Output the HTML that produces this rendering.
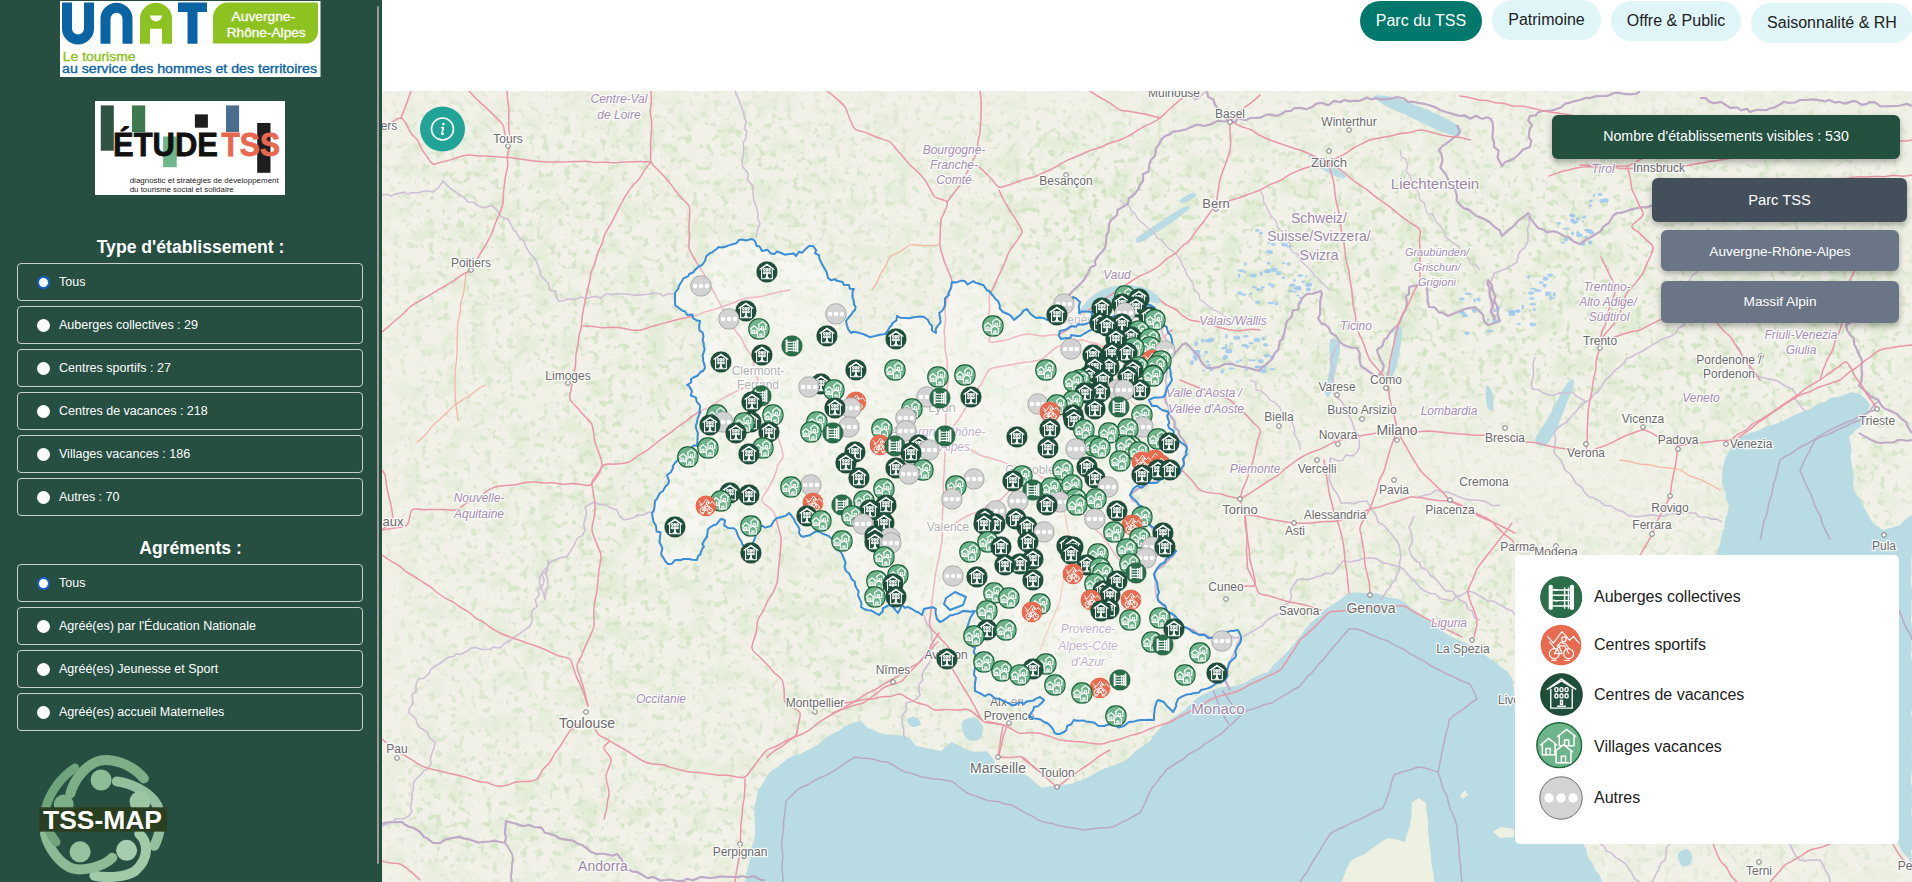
<!DOCTYPE html>
<html><head><meta charset="utf-8">
<style>
*{margin:0;padding:0;box-sizing:border-box}
html,body{width:1912px;height:882px;overflow:hidden;background:#fff;font-family:"Liberation Sans",sans-serif}
#side{position:absolute;left:0;top:0;width:382px;height:882px;background:#264F42}
#sbar{position:absolute;left:377px;top:6px;width:2px;height:858px;background:#9a9a9a;border-radius:1px}
.h{position:absolute;left:0;width:381px;text-align:center;color:#fff;font-weight:bold;font-size:17.6px}
.rb{position:absolute;left:17px;width:346px;height:38px;border:1px solid #c9cfcc;border-radius:4px;color:#fff;font-size:12.5px}
.rb .c{position:absolute;left:18.5px;top:11.5px;width:13px;height:13px;border-radius:50%;background:#fff}
.rb .c.on{border:2.5px solid #1A5FD6;background:#fff}
.rb span{position:absolute;left:41px;top:10.5px}
#hdr{position:absolute;left:382px;top:0;width:1530px;height:91px;background:#fff}
.tb{position:absolute;height:40px;border-radius:20px;background:#dff5f8;color:#222;font-size:16px;text-align:center;line-height:40px}
#map{position:absolute;left:382px;top:91px;width:1530px;height:791px;overflow:hidden;background:#f2efe9}
.pan{position:absolute;border-radius:6px;color:#fff;text-align:center;box-shadow:0 3px 6px rgba(0,0,0,.3)}
#legend{position:absolute;left:1515px;top:555px;width:384px;height:289px;background:#fff;border-radius:5px}
.li{position:absolute;left:79px;font-size:16px;color:#222}
text{font-family:"Liberation Sans",sans-serif}
</style></head><body>
<div id="map"><svg id="msvg" width="1530" height="791" viewBox="382 91 1530 791" style="position:absolute;left:0;top:0">
<defs>
 <symbol id="iA" viewBox="0 0 44 44">
  <circle cx="22" cy="22" r="21.3" fill="#2B6E4A" stroke="#245e40" stroke-width="1"/>
  <rect x="9" y="9" width="4.2" height="26" rx="1.6" fill="#fff"/>
  <rect x="31" y="9" width="4.2" height="26" rx="1.6" fill="#fff"/>
  <g stroke="#fff" stroke-width="1.5" fill="none">
   <path d="M13 14.5h18M13 20h18M13 25.5h18M13 31h18"/>
   <path d="M25.5 12v22M29.5 12v22"/>
   <path d="M14 13.5c1.5 1.5 3 1.5 4.5 1"/>
   <path d="M14 24.5c1.5 1.5 3 1.5 4.5 1"/>
  </g>
 </symbol>
 <symbol id="iS" viewBox="0 0 44 44">
  <circle cx="22" cy="22" r="21.3" fill="#E86A4F"/>
  <g stroke="#fff" stroke-width="1.3" fill="none" stroke-linejoin="round" stroke-linecap="round">
   <path d="M8 13l6 7 9-12 8 9 4-4 6 7"/>
   <path d="M10 19l6 7"/>
   <circle cx="15" cy="31" r="5.2"/>
   <circle cx="30" cy="31" r="5.2"/>
   <path d="M15 31l5-8 6 0 4 8M20 23l3 8h-8"/>
   <circle cx="25" cy="16" r="2.4"/>
   <path d="M18 23l4-4 5 2 3 4"/>
   <path d="M12 38h5M26 38h5"/>
  </g>
 </symbol>
 <symbol id="iC" viewBox="0 0 44 44">
  <circle cx="22" cy="22" r="21.3" fill="#1F4F3B" stroke="#173f2f" stroke-width="1"/>
  <g stroke="#fff" stroke-width="1.4" fill="none" stroke-linejoin="miter">
   <path d="M7 17L22 6l15 11"/>
   <path d="M9.5 15.5L22 8l12.5 7.5"/>
   <path d="M11 16v20h22V16"/>
   <rect x="15.3" y="15" width="3" height="4" rx="1"/>
   <rect x="20.5" y="15" width="3" height="4" rx="1"/>
   <rect x="25.7" y="15" width="3" height="4" rx="1"/>
   <rect x="15.3" y="21.5" width="3" height="4" rx="1"/>
   <rect x="20.5" y="21.5" width="3" height="4" rx="1"/>
   <rect x="25.7" y="21.5" width="3" height="4" rx="1"/>
   <path d="M21 28v4h2v-4z M17.5 34h9"/>
  </g>
 </symbol>
 <symbol id="iV" viewBox="0 0 44 44">
  <circle cx="22" cy="22" r="21.2" fill="#6DB48A" stroke="#1d6a3d" stroke-width="1.4"/>
  <g stroke="#fff" stroke-width="1.4" fill="#6DB48A" stroke-linejoin="miter">
   <path d="M20 14L29 7l9 7 M22 13.5v9h14v-9 M27 22v-5h4v5"/>
   <path d="M4 22L12 15.5l8 6.5 M6 21v10h12v-10 M9.5 31v-6h4v6"/>
   <path d="M17 28.5l9-7 9 7 M19 27.5v11h14v-11 M24 38.5v-6h4v6"/>
  </g>
 </symbol>
 <symbol id="iO" viewBox="0 0 44 44">
  <circle cx="22" cy="22" r="21.2" fill="#D3D3D3" stroke="#707070" stroke-width="1"/>
  <circle cx="10" cy="22" r="4.7" fill="#fff"/>
  <circle cx="22" cy="22" r="4.7" fill="#fff"/>
  <circle cx="34" cy="22" r="4.7" fill="#fff"/>
 </symbol>

 <symbol id="mA" viewBox="0 0 44 44">
  <circle cx="22" cy="22" r="21.3" fill="#2B6E4A" stroke="#245e40" stroke-width="1"/>
  <rect x="9" y="9" width="4.2" height="26" rx="1.6" fill="#fff"/>
  <rect x="31" y="9" width="4.2" height="26" rx="1.6" fill="#fff"/>
  <g stroke="#fff" stroke-width="2.2" fill="none">
   <path d="M13 14.5h18M13 20h18M13 25.5h18M13 31h18"/>
   <path d="M25.5 12v22M29.5 12v22"/>
   <path d="M14 13.5c1.5 1.5 3 1.5 4.5 1"/>
   <path d="M14 24.5c1.5 1.5 3 1.5 4.5 1"/>
  </g>
 </symbol>
 <symbol id="mS" viewBox="0 0 44 44">
  <circle cx="22" cy="22" r="21.3" fill="#E86A4F"/>
  <g stroke="#fff" stroke-width="2.0" fill="none" stroke-linejoin="round" stroke-linecap="round">
   <path d="M8 13l6 7 9-12 8 9 4-4 6 7"/>
   <path d="M10 19l6 7"/>
   <circle cx="15" cy="31" r="5.2"/>
   <circle cx="30" cy="31" r="5.2"/>
   <path d="M15 31l5-8 6 0 4 8M20 23l3 8h-8"/>
   <circle cx="25" cy="16" r="2.4"/>
   <path d="M18 23l4-4 5 2 3 4"/>
   <path d="M12 38h5M26 38h5"/>
  </g>
 </symbol>
 <symbol id="mC" viewBox="0 0 44 44">
  <circle cx="22" cy="22" r="21.3" fill="#1F4F3B" stroke="#173f2f" stroke-width="1"/>
  <g stroke="#fff" stroke-width="2.3" fill="none" stroke-linejoin="miter">
   <path d="M7 17L22 6l15 11"/>
   <path d="M9.5 15.5L22 8l12.5 7.5"/>
   <path d="M11 16v20h22V16"/>
   <rect x="15.3" y="15" width="3" height="4" rx="1"/>
   <rect x="20.5" y="15" width="3" height="4" rx="1"/>
   <rect x="25.7" y="15" width="3" height="4" rx="1"/>
   <rect x="15.3" y="21.5" width="3" height="4" rx="1"/>
   <rect x="20.5" y="21.5" width="3" height="4" rx="1"/>
   <rect x="25.7" y="21.5" width="3" height="4" rx="1"/>
   <path d="M21 28v4h2v-4z M17.5 34h9"/>
  </g>
 </symbol>
 <symbol id="mV" viewBox="0 0 44 44">
  <circle cx="22" cy="22" r="21.2" fill="#6DB48A" stroke="#185C34" stroke-width="2.2"/>
  <g stroke="#fff" stroke-width="2.3" fill="#6DB48A" stroke-linejoin="miter">
   <path d="M20 14L29 7l9 7 M22 13.5v9h14v-9 M27 22v-5h4v5"/>
   <path d="M4 22L12 15.5l8 6.5 M6 21v10h12v-10 M9.5 31v-6h4v6"/>
   <path d="M17 28.5l9-7 9 7 M19 27.5v11h14v-11 M24 38.5v-6h4v6"/>
  </g>
 </symbol>
 <symbol id="mO" viewBox="0 0 44 44">
  <circle cx="22" cy="22" r="21.2" fill="#D3D3D3" stroke="#707070" stroke-width="1"/>
  <circle cx="10" cy="22" r="4.7" fill="#fff"/>
  <circle cx="22" cy="22" r="4.7" fill="#fff"/>
  <circle cx="34" cy="22" r="4.7" fill="#fff"/>
 </symbol>

</defs>

<defs>
 <filter id="tex" filterUnits="userSpaceOnUse" x="382" y="91" width="1530" height="791" color-interpolation-filters="sRGB">
  <feTurbulence type="fractalNoise" baseFrequency="0.045" numOctaves="4" seed="11" result="t"/>
  <feColorMatrix in="t" type="matrix" values="0 0 0 0 0.87  0 0 0 0 0.92  0 0 0 0 0.82  4 0 0 0 -1.9"/>
 </filter>
 <filter id="tex2" filterUnits="userSpaceOnUse" x="382" y="91" width="1530" height="791" color-interpolation-filters="sRGB">
  <feTurbulence type="fractalNoise" baseFrequency="0.14" numOctaves="2" seed="23" result="t"/>
  <feColorMatrix in="t" type="matrix" values="0 0 0 0 0.80  0 0 0 0 0.88  0 0 0 0 0.74  8 0 0 0 -4.6"/>
 </filter>
 <filter id="bl" filterUnits="userSpaceOnUse" x="0" y="0" width="2000" height="1000"><feGaussianBlur stdDeviation="28"/></filter>
 <mask id="dens" maskUnits="userSpaceOnUse" x="382" y="91" width="1530" height="791">
  <g filter="url(#bl)"><rect x="382" y="91" width="1530" height="791" fill="#fff" fill-opacity="0.55"/><polygon points="382.0,91.0 760.0,91.0 760.0,300.0 382.0,300.0" fill="#fff" fill-opacity="0.25"/><polygon points="540.0,300.0 720.0,280.0 760.0,600.0 640.0,700.0 520.0,640.0" fill="#fff" fill-opacity="0.35"/><polygon points="1000.0,130.0 1130.0,150.0 1120.0,300.0 1000.0,300.0" fill="#fff" fill-opacity="0.5"/><polygon points="1040.0,160.0 1150.0,120.0 1160.0,200.0 1070.0,290.0" fill="#fff" fill-opacity="0.5"/><polygon points="700.0,100.0 850.0,100.0 850.0,260.0 700.0,260.0" fill="#fff" fill-opacity="0.25"/><polygon points="1150.0,180.0 1700.0,170.0 1912.0,250.0 1912.0,420.0 1560.0,420.0 1380.0,380.0 1200.0,360.0" fill="#fff" fill-opacity="0.55"/><polygon points="1250.0,540.0 1560.0,560.0 1600.0,700.0 1520.0,720.0 1330.0,640.0" fill="#fff" fill-opacity="0.4"/><polygon points="382.0,780.0 780.0,800.0 780.0,882.0 382.0,882.0" fill="#fff" fill-opacity="0.45"/><polygon points="760.0,560.0 900.0,620.0 900.0,720.0 800.0,740.0" fill="#fff" fill-opacity="0.35"/><polygon points="1820.0,250.0 1912.0,250.0 1912.0,540.0 1840.0,540.0" fill="#fff" fill-opacity="0.45"/><polygon points="1280,420 1460,420 1720,420 1720,540 1500,540 1300,520" fill="#000" fill-opacity="0.6"/><polygon points="920,400 990,400 990,560 920,560" fill="#000" fill-opacity="0.3"/></g>
 </mask>
</defs>
<rect x="382" y="91" width="1530" height="791" fill="#F2F1E8"/>
<g mask="url(#dens)"><rect x="382" y="91" width="1530" height="791" filter="url(#tex)"/><rect x="382" y="91" width="1530" height="791" filter="url(#tex2)"/></g>

<path d="M745.0 882.0 L745.9 875.1 L747.7 868.2 L749.8 860.0 L749.8 854.8 L751.9 846.4 L754.0 840.0 L755.2 831.9 L754.8 823.9 L754.3 815.2 L754.0 808.0 L756.3 799.9 L758.0 790.0 L762.1 784.6 L766.4 777.0 L770.0 772.0 L778.6 766.2 L786.0 760.0 L792.2 755.9 L800.2 753.9 L806.0 751.0 L813.5 747.2 L820.5 742.7 L827.0 737.0 L832.7 734.1 L838.9 730.7 L845.0 726.0 L853.9 722.5 L861.0 721.0 L868.0 728.0 L874.1 730.3 L882.0 734.0 L892.1 734.8 L900.3 735.5 L909.0 737.0 L916.0 746.0 L924.4 747.4 L932.3 749.5 L941.0 751.0 L951.0 742.0 L960.0 746.0 L969.0 751.0 L978.2 752.0 L987.0 751.0 L994.0 760.0 L999.0 772.0 L1007.4 773.0 L1015.0 772.0 L1028.0 776.0 L1035.9 783.2 L1042.0 788.0 L1051.9 785.7 L1061.0 785.0 L1070.9 784.1 L1079.0 781.0 L1089.0 776.7 L1097.0 772.0 L1106.5 767.8 L1115.0 765.0 L1122.8 761.7 L1129.0 758.0 L1136.0 750.5 L1144.0 745.0 L1150.6 740.4 L1154.5 734.2 L1161.0 726.9 L1167.0 722.0 L1174.5 717.1 L1183.0 711.0 L1190.2 704.6 L1195.9 699.2 L1202.0 695.0 L1212.0 690.6 L1221.0 687.0 L1229.9 686.8 L1237.0 685.5 L1245.0 683.0 L1252.2 678.3 L1260.6 674.5 L1268.0 672.0 L1272.5 666.3 L1278.8 660.2 L1282.7 656.4 L1289.0 650.0 L1293.9 644.1 L1300.6 635.7 L1305.0 629.0 L1311.2 622.7 L1318.0 616.6 L1324.0 610.0 L1330.4 606.0 L1337.6 601.5 L1342.6 597.8 L1349.0 593.0 L1355.4 592.5 L1364.1 593.1 L1370.0 593.0 L1377.1 593.3 L1383.8 596.2 L1389.8 597.8 L1398.0 599.0 L1405.1 602.7 L1411.8 608.4 L1418.7 612.9 L1425.0 618.0 L1432.2 623.3 L1437.4 626.4 L1445.7 633.4 L1452.0 637.0 L1458.2 640.1 L1465.7 643.1 L1471.9 646.3 L1479.0 650.0 L1486.0 655.9 L1493.2 661.0 L1501.0 667.0 L1507.2 671.4 L1512.0 678.0 L1513.5 686.9 L1514.2 694.0 L1516.0 703.0 L1517.5 709.8 L1516.8 717.6 L1518.9 724.2 L1518.8 732.2 L1520.0 740.0 L1524.6 746.1 L1528.4 751.7 L1530.9 759.1 L1535.9 764.9 L1538.1 770.3 L1542.6 776.8 L1547.0 784.6 L1550.0 790.0 L1553.2 796.1 L1558.7 803.6 L1562.7 809.5 L1565.1 816.0 L1570.7 822.6 L1573.6 829.6 L1577.8 836.2 L1582.0 843.0 L1586.3 848.7 L1587.5 857.1 L1592.9 863.7 L1595.2 870.1 L1599.7 874.8 L1602.0 882.0 L745 882 Z" fill="#B9DBE3" transform="translate(0,0)"/><path d="M1342.0 882.0 L1344.2 874.7 L1347.2 868.1 L1350.0 862.0 L1356.0 857.8 L1364.0 854.5 L1370.0 850.0 L1376.4 845.6 L1382.1 841.6 L1388.0 838.0 L1396.0 839.4 L1405.0 842.0 L1407.0 834.2 L1410.0 825.0 L1411.2 817.8 L1411.8 809.2 L1412.0 802.0 L1419.0 798.0 L1426.0 803.0 L1426.2 810.0 L1427.4 817.1 L1428.1 822.6 L1428.0 830.0 L1428.8 836.3 L1429.2 841.5 L1429.8 847.3 L1431.1 854.6 L1431.0 860.0 L1432.1 867.0 L1433.7 874.8 L1434.0 882.0 Z" fill="#EEF0E2"/><path d="M1493 832 L1500 827 L1514 829 L1514 837 L1500 838 Z M1460 796 L1465 790 L1468 795 L1463 799 Z" fill="#EEF0E2"/><path d="M1852.0 392.0 L1845.0 394.6 L1838.0 397.1 L1830.0 398.0 L1824.3 402.3 L1816.4 404.4 L1812.3 408.1 L1805.0 411.0 L1798.7 413.3 L1790.4 416.9 L1783.4 420.9 L1776.0 424.0 L1766.2 426.3 L1758.1 431.0 L1750.0 433.0 L1743.1 435.7 L1735.0 440.0 L1732.4 445.5 L1728.6 451.8 L1725.0 459.0 L1722.8 468.2 L1722.3 475.0 L1722.0 484.0 L1725.5 492.2 L1726.2 499.8 L1729.0 506.0 L1727.3 513.7 L1724.8 521.6 L1724.2 528.9 L1722.0 535.0 L1719.9 544.0 L1716.0 554.0 L1715.7 560.9 L1715.1 568.3 L1715.5 577.2 L1714.8 585.1 L1715.6 591.9 L1716.0 600.0 L1721.0 605.6 L1723.9 611.2 L1729.1 615.8 L1733.9 621.4 L1737.5 629.0 L1740.0 634.4 L1745.0 639.6 L1748.3 643.9 L1752.9 651.7 L1757.1 656.9 L1763.1 662.9 L1765.9 667.2 L1770.5 673.8 L1773.7 679.3 L1779.5 685.2 L1781.9 691.1 L1786.2 695.2 L1791.6 702.3 L1795.2 707.9 L1799.9 712.0 L1803.5 717.4 L1807.1 722.9 L1812.8 730.6 L1815.7 733.9 L1821.9 740.7 L1824.6 745.6 L1829.3 752.7 L1833.1 757.3 L1836.4 764.1 L1840.5 768.7 L1846.6 773.5 L1850.0 780.0 L1854.9 786.8 L1859.0 792.1 L1862.1 797.0 L1866.6 803.7 L1871.3 808.5 L1877.4 815.2 L1881.7 820.0 L1884.9 826.4 L1889.2 831.0 L1893.4 836.4 L1898.0 843.0 L1902.4 851.8 L1908.4 858.6 L1912.0 866.0 L1912.0 858.6 L1911.0 851.4 L1912.7 845.8 L1911.7 838.6 L1912.7 831.4 L1912.4 824.5 L1911.7 817.4 L1911.5 809.8 L1912.6 803.3 L1911.5 796.9 L1912.4 789.0 L1910.8 781.9 L1911.4 775.2 L1911.9 768.5 L1912.4 761.4 L1911.6 754.0 L1912.6 747.4 L1911.6 740.5 L1912.9 733.1 L1913.1 726.7 L1912.0 718.7 L1911.2 712.4 L1913.0 704.5 L1912.5 698.0 L1912.6 689.7 L1912.7 683.7 L1912.4 676.3 L1912.3 670.1 L1912.3 662.9 L1910.9 654.6 L1911.9 648.7 L1911.3 641.8 L1912.3 633.2 L1911.9 626.7 L1910.9 619.4 L1911.6 612.5 L1911.3 605.1 L1911.9 599.0 L1912.3 592.4 L1911.4 586.2 L1910.8 578.0 L1911.5 570.9 L1911.1 564.9 L1911.7 556.0 L1912.3 549.1 L1912.1 542.7 L1912.2 537.2 L1912.8 528.8 L1912.8 522.4 L1912.0 515.0 L1905.7 519.1 L1900.0 525.0 L1891.7 527.7 L1883.0 530.0 L1872.0 522.0 L1868.8 515.9 L1863.8 507.1 L1860.2 499.1 L1855.0 493.0 L1853.3 486.2 L1853.8 478.1 L1853.1 472.9 L1851.7 464.8 L1850.6 457.5 L1851.6 450.7 L1850.9 445.0 L1849.0 437.0 L1854.9 430.8 L1861.5 425.7 L1866.0 420.0 L1867.8 412.1 L1870.0 405.0 L1866.2 399.5 L1860.0 394.0 Z" fill="#B9DBE3"/>
<ellipse cx="1283.8" cy="263.1" rx="1.9" ry="1.2" fill="#9CC8EE" fill-opacity="0.85"/><ellipse cx="1290.6" cy="291.1" rx="3.3" ry="1.0" fill="#9CC8EE" fill-opacity="0.85"/><ellipse cx="1268.5" cy="263.3" rx="1.7" ry="1.7" fill="#9CC8EE" fill-opacity="0.85"/><ellipse cx="1240.9" cy="270.6" rx="2.8" ry="1.7" fill="#9CC8EE" fill-opacity="0.85"/><ellipse cx="1254.4" cy="287.3" rx="3.1" ry="0.9" fill="#9CC8EE" fill-opacity="0.85"/><ellipse cx="1295.4" cy="292.0" rx="2.0" ry="1.1" fill="#9CC8EE" fill-opacity="0.85"/><ellipse cx="1306.0" cy="276.5" rx="1.4" ry="1.0" fill="#9CC8EE" fill-opacity="0.85"/><ellipse cx="1298.3" cy="288.0" rx="3.1" ry="2.0" fill="#9CC8EE" fill-opacity="0.85"/><ellipse cx="1276.5" cy="303.8" rx="2.1" ry="1.7" fill="#9CC8EE" fill-opacity="0.85"/><ellipse cx="1297.1" cy="288.6" rx="3.3" ry="1.8" fill="#9CC8EE" fill-opacity="0.85"/><ellipse cx="1288.3" cy="264.0" rx="1.7" ry="1.3" fill="#9CC8EE" fill-opacity="0.85"/><ellipse cx="1244.6" cy="272.0" rx="1.4" ry="1.3" fill="#9CC8EE" fill-opacity="0.85"/><ellipse cx="1283.5" cy="277.7" rx="2.1" ry="1.2" fill="#9CC8EE" fill-opacity="0.85"/><ellipse cx="1257.7" cy="302.3" rx="2.8" ry="1.8" fill="#9CC8EE" fill-opacity="0.85"/><ellipse cx="1251.0" cy="293.4" rx="1.6" ry="1.5" fill="#9CC8EE" fill-opacity="0.85"/><ellipse cx="1308.3" cy="289.5" rx="2.5" ry="1.9" fill="#9CC8EE" fill-opacity="0.85"/><ellipse cx="1298.0" cy="295.4" rx="1.7" ry="0.9" fill="#9CC8EE" fill-opacity="0.85"/><ellipse cx="1261.1" cy="273.5" rx="1.7" ry="2.3" fill="#9CC8EE" fill-opacity="0.85"/><ellipse cx="1300.3" cy="275.5" rx="2.8" ry="1.5" fill="#9CC8EE" fill-opacity="0.85"/><ellipse cx="1303.0" cy="281.7" rx="1.8" ry="1.3" fill="#9CC8EE" fill-opacity="0.85"/><ellipse cx="1278.3" cy="273.3" rx="2.6" ry="2.2" fill="#9CC8EE" fill-opacity="0.85"/><ellipse cx="1267.0" cy="271.4" rx="3.6" ry="1.7" fill="#9CC8EE" fill-opacity="0.85"/><ellipse cx="1245.4" cy="264.0" rx="1.5" ry="1.8" fill="#9CC8EE" fill-opacity="0.85"/><ellipse cx="1294.4" cy="280.2" rx="1.4" ry="1.5" fill="#9CC8EE" fill-opacity="0.85"/><ellipse cx="1308.7" cy="284.8" rx="3.5" ry="2.2" fill="#9CC8EE" fill-opacity="0.85"/><ellipse cx="1239.8" cy="293.0" rx="2.8" ry="1.7" fill="#9CC8EE" fill-opacity="0.85"/><ellipse cx="1257.7" cy="289.6" rx="1.5" ry="1.6" fill="#9CC8EE" fill-opacity="0.85"/><ellipse cx="1270.8" cy="303.0" rx="3.3" ry="1.3" fill="#9CC8EE" fill-opacity="0.85"/><ellipse cx="1274.0" cy="269.7" rx="3.4" ry="2.2" fill="#9CC8EE" fill-opacity="0.85"/><ellipse cx="1259.9" cy="289.5" rx="2.7" ry="1.1" fill="#9CC8EE" fill-opacity="0.85"/><ellipse cx="1292.4" cy="285.2" rx="3.1" ry="1.7" fill="#9CC8EE" fill-opacity="0.85"/><ellipse cx="1239.0" cy="275.9" rx="1.2" ry="2.3" fill="#9CC8EE" fill-opacity="0.85"/><ellipse cx="1300.5" cy="297.8" rx="1.9" ry="1.0" fill="#9CC8EE" fill-opacity="0.85"/><ellipse cx="1300.5" cy="302.7" rx="1.4" ry="1.6" fill="#9CC8EE" fill-opacity="0.85"/><ellipse cx="1243.8" cy="294.7" rx="3.0" ry="1.1" fill="#9CC8EE" fill-opacity="0.85"/><ellipse cx="1272.3" cy="285.6" rx="1.8" ry="2.2" fill="#9CC8EE" fill-opacity="0.85"/><ellipse cx="1268.6" cy="271.1" rx="2.5" ry="2.0" fill="#9CC8EE" fill-opacity="0.85"/><ellipse cx="1253.1" cy="275.4" rx="3.6" ry="1.9" fill="#9CC8EE" fill-opacity="0.85"/><ellipse cx="1269.7" cy="284.3" rx="1.5" ry="1.2" fill="#9CC8EE" fill-opacity="0.85"/><ellipse cx="1262.7" cy="287.3" rx="1.8" ry="1.2" fill="#9CC8EE" fill-opacity="0.85"/><ellipse cx="1196.0" cy="358.7" rx="1.7" ry="2.3" fill="#9CC8EE" fill-opacity="0.85"/><ellipse cx="1263.1" cy="338.6" rx="1.8" ry="1.9" fill="#9CC8EE" fill-opacity="0.85"/><ellipse cx="1208.2" cy="340.8" rx="3.4" ry="1.8" fill="#9CC8EE" fill-opacity="0.85"/><ellipse cx="1230.2" cy="364.2" rx="3.1" ry="1.2" fill="#9CC8EE" fill-opacity="0.85"/><ellipse cx="1198.2" cy="351.5" rx="2.2" ry="1.6" fill="#9CC8EE" fill-opacity="0.85"/><ellipse cx="1252.0" cy="360.2" rx="3.6" ry="1.0" fill="#9CC8EE" fill-opacity="0.85"/><ellipse cx="1224.2" cy="348.2" rx="3.3" ry="1.3" fill="#9CC8EE" fill-opacity="0.85"/><ellipse cx="1206.2" cy="352.2" rx="2.2" ry="1.3" fill="#9CC8EE" fill-opacity="0.85"/><ellipse cx="1211.2" cy="369.2" rx="2.3" ry="2.2" fill="#9CC8EE" fill-opacity="0.85"/><ellipse cx="1236.8" cy="337.8" rx="3.6" ry="2.2" fill="#9CC8EE" fill-opacity="0.85"/><ellipse cx="1272.4" cy="369.3" rx="3.2" ry="1.1" fill="#9CC8EE" fill-opacity="0.85"/><ellipse cx="1231.3" cy="343.7" rx="2.2" ry="1.0" fill="#9CC8EE" fill-opacity="0.85"/><ellipse cx="1222.2" cy="371.5" rx="1.8" ry="2.1" fill="#9CC8EE" fill-opacity="0.85"/><ellipse cx="1228.7" cy="351.2" rx="3.5" ry="2.4" fill="#9CC8EE" fill-opacity="0.85"/><ellipse cx="1237.2" cy="361.9" rx="1.6" ry="1.3" fill="#9CC8EE" fill-opacity="0.85"/><ellipse cx="1272.3" cy="356.9" rx="2.5" ry="2.0" fill="#9CC8EE" fill-opacity="0.85"/><ellipse cx="1194.9" cy="357.0" rx="2.4" ry="2.2" fill="#9CC8EE" fill-opacity="0.85"/><ellipse cx="1203.4" cy="370.6" rx="1.4" ry="1.2" fill="#9CC8EE" fill-opacity="0.85"/><ellipse cx="1240.6" cy="360.3" rx="1.8" ry="1.1" fill="#9CC8EE" fill-opacity="0.85"/><ellipse cx="1265.7" cy="344.9" rx="2.6" ry="1.8" fill="#9CC8EE" fill-opacity="0.85"/><ellipse cx="1225.6" cy="357.0" rx="2.5" ry="2.3" fill="#9CC8EE" fill-opacity="0.85"/><ellipse cx="1207.4" cy="361.8" rx="1.8" ry="1.5" fill="#9CC8EE" fill-opacity="0.85"/><ellipse cx="1247.1" cy="346.8" rx="2.0" ry="2.0" fill="#9CC8EE" fill-opacity="0.85"/><ellipse cx="1196.2" cy="352.5" rx="3.6" ry="2.4" fill="#9CC8EE" fill-opacity="0.85"/><ellipse cx="1196.2" cy="343.7" rx="1.8" ry="2.3" fill="#9CC8EE" fill-opacity="0.85"/><ellipse cx="1264.9" cy="367.7" rx="2.1" ry="1.1" fill="#9CC8EE" fill-opacity="0.85"/><ellipse cx="1260.9" cy="361.3" rx="2.7" ry="2.4" fill="#9CC8EE" fill-opacity="0.85"/><ellipse cx="1245.6" cy="336.3" rx="3.2" ry="1.3" fill="#9CC8EE" fill-opacity="0.85"/><ellipse cx="1246.4" cy="369.8" rx="1.5" ry="1.1" fill="#9CC8EE" fill-opacity="0.85"/><ellipse cx="1199.1" cy="355.9" rx="1.9" ry="1.8" fill="#9CC8EE" fill-opacity="0.85"/><ellipse cx="1251.0" cy="343.3" rx="2.7" ry="1.3" fill="#9CC8EE" fill-opacity="0.85"/><ellipse cx="1231.5" cy="368.6" rx="3.2" ry="1.0" fill="#9CC8EE" fill-opacity="0.85"/><ellipse cx="1226.0" cy="346.0" rx="1.2" ry="2.1" fill="#9CC8EE" fill-opacity="0.85"/><ellipse cx="1244.2" cy="345.4" rx="3.0" ry="1.7" fill="#9CC8EE" fill-opacity="0.85"/><ellipse cx="1226.4" cy="336.3" rx="1.4" ry="2.2" fill="#9CC8EE" fill-opacity="0.85"/><ellipse cx="1266.8" cy="355.6" rx="3.2" ry="1.8" fill="#9CC8EE" fill-opacity="0.85"/><ellipse cx="1202.6" cy="340.6" rx="1.9" ry="2.2" fill="#9CC8EE" fill-opacity="0.85"/><ellipse cx="1257.7" cy="367.0" rx="3.4" ry="1.2" fill="#9CC8EE" fill-opacity="0.85"/><ellipse cx="1211.2" cy="339.7" rx="3.1" ry="2.2" fill="#9CC8EE" fill-opacity="0.85"/><ellipse cx="1224.5" cy="358.3" rx="1.6" ry="2.3" fill="#9CC8EE" fill-opacity="0.85"/><ellipse cx="1263.5" cy="371.1" rx="3.1" ry="2.2" fill="#9CC8EE" fill-opacity="0.85"/><ellipse cx="1192.1" cy="362.5" rx="2.0" ry="2.3" fill="#9CC8EE" fill-opacity="0.85"/><ellipse cx="1258.2" cy="367.1" rx="3.1" ry="1.3" fill="#9CC8EE" fill-opacity="0.85"/><ellipse cx="1256.9" cy="339.9" rx="3.3" ry="2.2" fill="#9CC8EE" fill-opacity="0.85"/><ellipse cx="1208.9" cy="365.4" rx="2.3" ry="1.4" fill="#9CC8EE" fill-opacity="0.85"/><ellipse cx="1522.7" cy="308.2" rx="1.3" ry="1.2" fill="#9CC8EE" fill-opacity="0.85"/><ellipse cx="1490.0" cy="331.1" rx="3.5" ry="1.3" fill="#9CC8EE" fill-opacity="0.85"/><ellipse cx="1511.9" cy="314.4" rx="3.6" ry="1.7" fill="#9CC8EE" fill-opacity="0.85"/><ellipse cx="1532.7" cy="304.2" rx="3.5" ry="1.2" fill="#9CC8EE" fill-opacity="0.85"/><ellipse cx="1534.4" cy="309.6" rx="1.5" ry="1.6" fill="#9CC8EE" fill-opacity="0.85"/><ellipse cx="1518.0" cy="311.3" rx="2.7" ry="1.7" fill="#9CC8EE" fill-opacity="0.85"/><ellipse cx="1494.0" cy="320.8" rx="1.8" ry="2.0" fill="#9CC8EE" fill-opacity="0.85"/><ellipse cx="1467.1" cy="333.3" rx="2.5" ry="2.0" fill="#9CC8EE" fill-opacity="0.85"/><ellipse cx="1518.9" cy="324.1" rx="2.1" ry="1.0" fill="#9CC8EE" fill-opacity="0.85"/><ellipse cx="1513.5" cy="311.9" rx="2.0" ry="2.2" fill="#9CC8EE" fill-opacity="0.85"/><ellipse cx="1517.4" cy="310.8" rx="1.9" ry="1.5" fill="#9CC8EE" fill-opacity="0.85"/><ellipse cx="1495.2" cy="310.6" rx="1.5" ry="1.5" fill="#9CC8EE" fill-opacity="0.85"/><ellipse cx="1532.8" cy="324.4" rx="3.4" ry="1.8" fill="#9CC8EE" fill-opacity="0.85"/><ellipse cx="1488.1" cy="319.7" rx="1.2" ry="1.3" fill="#9CC8EE" fill-opacity="0.85"/><ellipse cx="1497.1" cy="320.9" rx="2.8" ry="1.6" fill="#9CC8EE" fill-opacity="0.85"/><ellipse cx="1498.0" cy="307.7" rx="2.3" ry="2.3" fill="#9CC8EE" fill-opacity="0.85"/><ellipse cx="1522.7" cy="306.1" rx="1.4" ry="1.7" fill="#9CC8EE" fill-opacity="0.85"/><ellipse cx="1511.3" cy="312.1" rx="3.2" ry="2.0" fill="#9CC8EE" fill-opacity="0.85"/><ellipse cx="1582.9" cy="221.5" rx="1.7" ry="0.9" fill="#9CC8EE" fill-opacity="0.85"/><ellipse cx="1565.8" cy="228.8" rx="3.2" ry="1.0" fill="#9CC8EE" fill-opacity="0.85"/><ellipse cx="1572.6" cy="233.3" rx="1.7" ry="1.9" fill="#9CC8EE" fill-opacity="0.85"/><ellipse cx="1575.8" cy="222.1" rx="2.8" ry="0.9" fill="#9CC8EE" fill-opacity="0.85"/><ellipse cx="1586.0" cy="237.3" rx="1.5" ry="1.5" fill="#9CC8EE" fill-opacity="0.85"/><ellipse cx="1563.0" cy="242.8" rx="2.4" ry="1.0" fill="#9CC8EE" fill-opacity="0.85"/><ellipse cx="1566.0" cy="239.6" rx="2.3" ry="2.1" fill="#9CC8EE" fill-opacity="0.85"/><ellipse cx="1582.7" cy="243.6" rx="2.6" ry="2.3" fill="#9CC8EE" fill-opacity="0.85"/><ellipse cx="1591.7" cy="232.8" rx="2.9" ry="1.7" fill="#9CC8EE" fill-opacity="0.85"/><ellipse cx="1589.2" cy="230.9" rx="3.4" ry="2.0" fill="#9CC8EE" fill-opacity="0.85"/><ellipse cx="1575.0" cy="222.5" rx="1.8" ry="1.9" fill="#9CC8EE" fill-opacity="0.85"/><ellipse cx="1586.6" cy="230.1" rx="2.7" ry="1.3" fill="#9CC8EE" fill-opacity="0.85"/><ellipse cx="1559.1" cy="223.3" rx="1.9" ry="1.4" fill="#9CC8EE" fill-opacity="0.85"/><ellipse cx="1577.6" cy="219.0" rx="1.8" ry="1.9" fill="#9CC8EE" fill-opacity="0.85"/><ellipse cx="1584.3" cy="216.9" rx="2.2" ry="1.7" fill="#9CC8EE" fill-opacity="0.85"/><ellipse cx="1572.6" cy="221.0" rx="2.2" ry="2.3" fill="#9CC8EE" fill-opacity="0.85"/><ellipse cx="1579.4" cy="235.2" rx="3.3" ry="2.0" fill="#9CC8EE" fill-opacity="0.85"/><ellipse cx="1571.2" cy="215.2" rx="2.0" ry="2.0" fill="#9CC8EE" fill-opacity="0.85"/><ellipse cx="1590.1" cy="242.6" rx="2.2" ry="2.0" fill="#9CC8EE" fill-opacity="0.85"/><ellipse cx="1577.8" cy="232.5" rx="1.7" ry="1.2" fill="#9CC8EE" fill-opacity="0.85"/><ellipse cx="1573.4" cy="215.8" rx="2.0" ry="1.9" fill="#9CC8EE" fill-opacity="0.85"/><ellipse cx="1572.2" cy="219.8" rx="2.3" ry="1.1" fill="#9CC8EE" fill-opacity="0.85"/><ellipse cx="1600.0" cy="194.5" rx="2.1" ry="1.7" fill="#9CC8EE" fill-opacity="0.85"/><ellipse cx="1590.4" cy="205.6" rx="1.5" ry="1.6" fill="#9CC8EE" fill-opacity="0.85"/><ellipse cx="1590.8" cy="200.8" rx="1.7" ry="1.4" fill="#9CC8EE" fill-opacity="0.85"/><ellipse cx="1602.2" cy="200.8" rx="3.0" ry="2.1" fill="#9CC8EE" fill-opacity="0.85"/><ellipse cx="1594.0" cy="195.5" rx="1.2" ry="1.7" fill="#9CC8EE" fill-opacity="0.85"/><ellipse cx="1606.0" cy="200.3" rx="2.8" ry="2.1" fill="#9CC8EE" fill-opacity="0.85"/><ellipse cx="1548.2" cy="292.6" rx="3.5" ry="1.2" fill="#9CC8EE" fill-opacity="0.85"/><ellipse cx="1528.6" cy="277.0" rx="1.5" ry="1.9" fill="#9CC8EE" fill-opacity="0.85"/><ellipse cx="1545.5" cy="278.7" rx="2.9" ry="2.1" fill="#9CC8EE" fill-opacity="0.85"/><ellipse cx="1533.2" cy="288.8" rx="3.0" ry="1.1" fill="#9CC8EE" fill-opacity="0.85"/><ellipse cx="1553.4" cy="298.1" rx="1.5" ry="0.9" fill="#9CC8EE" fill-opacity="0.85"/><ellipse cx="1537.7" cy="290.6" rx="3.5" ry="1.5" fill="#9CC8EE" fill-opacity="0.85"/><ellipse cx="1550.2" cy="275.0" rx="2.9" ry="1.8" fill="#9CC8EE" fill-opacity="0.85"/><ellipse cx="1531.2" cy="293.1" rx="3.2" ry="1.8" fill="#9CC8EE" fill-opacity="0.85"/><ellipse cx="1531.8" cy="298.6" rx="3.1" ry="1.4" fill="#9CC8EE" fill-opacity="0.85"/><ellipse cx="1541.3" cy="282.6" rx="2.4" ry="1.4" fill="#9CC8EE" fill-opacity="0.85"/><ellipse cx="1554.3" cy="294.4" rx="1.5" ry="2.3" fill="#9CC8EE" fill-opacity="0.85"/><ellipse cx="1547.7" cy="294.5" rx="2.9" ry="1.6" fill="#9CC8EE" fill-opacity="0.85"/><ellipse cx="1550.7" cy="298.1" rx="1.8" ry="2.1" fill="#9CC8EE" fill-opacity="0.85"/><ellipse cx="1544.7" cy="285.6" rx="2.2" ry="2.0" fill="#9CC8EE" fill-opacity="0.85"/><ellipse cx="1465.6" cy="316.0" rx="3.2" ry="1.0" fill="#9CC8EE" fill-opacity="0.85"/><ellipse cx="1478.5" cy="299.6" rx="2.3" ry="1.8" fill="#9CC8EE" fill-opacity="0.85"/><ellipse cx="1468.0" cy="293.8" rx="3.2" ry="1.2" fill="#9CC8EE" fill-opacity="0.85"/><ellipse cx="1464.5" cy="314.5" rx="2.0" ry="2.2" fill="#9CC8EE" fill-opacity="0.85"/><ellipse cx="1474.7" cy="300.5" rx="1.2" ry="2.3" fill="#9CC8EE" fill-opacity="0.85"/><ellipse cx="1461.8" cy="312.4" rx="2.4" ry="2.0" fill="#9CC8EE" fill-opacity="0.85"/><ellipse cx="1474.5" cy="310.4" rx="2.4" ry="2.1" fill="#9CC8EE" fill-opacity="0.85"/><ellipse cx="1462.0" cy="299.0" rx="2.9" ry="1.4" fill="#9CC8EE" fill-opacity="0.85"/><ellipse cx="1273.3" cy="244.2" rx="2.5" ry="1.5" fill="#9CC8EE" fill-opacity="0.85"/><ellipse cx="1279.8" cy="239.9" rx="2.9" ry="1.3" fill="#9CC8EE" fill-opacity="0.85"/><ellipse cx="1260.1" cy="233.6" rx="1.7" ry="1.1" fill="#9CC8EE" fill-opacity="0.85"/><ellipse cx="1271.4" cy="252.9" rx="1.6" ry="1.2" fill="#9CC8EE" fill-opacity="0.85"/><ellipse cx="1269.4" cy="251.7" rx="3.5" ry="1.7" fill="#9CC8EE" fill-opacity="0.85"/><ellipse cx="1261.3" cy="233.0" rx="1.7" ry="1.2" fill="#9CC8EE" fill-opacity="0.85"/><ellipse cx="1257.2" cy="230.4" rx="2.5" ry="1.3" fill="#9CC8EE" fill-opacity="0.85"/><ellipse cx="1289.0" cy="246.6" rx="2.9" ry="1.1" fill="#9CC8EE" fill-opacity="0.85"/><ellipse cx="1284.7" cy="244.7" rx="3.3" ry="1.8" fill="#9CC8EE" fill-opacity="0.85"/><ellipse cx="1268.8" cy="243.2" rx="1.6" ry="1.0" fill="#9CC8EE" fill-opacity="0.85"/><path d="M1078.0 314.0 C1077.7 312.0 1085.5 302.2 1090.0 298.0 C1094.5 293.8 1099.2 291.2 1105.0 289.0 C1110.8 286.8 1118.3 285.2 1125.0 285.0 C1131.7 284.8 1139.5 286.2 1145.0 288.0 C1150.5 289.8 1155.5 293.5 1158.0 296.0 C1160.5 298.5 1161.7 302.0 1160.0 303.0 C1158.3 304.0 1153.3 302.5 1148.0 302.0 C1142.7 301.5 1134.7 299.8 1128.0 300.0 C1121.3 300.2 1114.0 301.3 1108.0 303.0 C1102.0 304.7 1097.0 308.2 1092.0 310.0 C1087.0 311.8 1078.3 316.0 1078.0 314.0 Z" fill="#B9DBE3"/><path d="M1137.0 238.0 C1140.2 234.7 1152.2 227.2 1160.0 222.0 C1167.8 216.8 1179.3 209.0 1184.0 207.0 C1188.7 205.0 1191.2 206.7 1188.0 210.0 C1184.8 213.3 1172.8 221.7 1165.0 227.0 C1157.2 232.3 1145.7 240.2 1141.0 242.0 C1136.3 243.8 1133.8 241.3 1137.0 238.0 Z" fill="#B9DBE3"/><path d="M1180.0 200.0 C1181.3 198.3 1189.3 193.7 1192.0 193.0 C1194.7 192.3 1197.3 194.3 1196.0 196.0 C1194.7 197.7 1186.7 202.3 1184.0 203.0 C1181.3 203.7 1178.7 201.7 1180.0 200.0 Z" fill="#B9DBE3"/><path d="M1374.0 96.0 C1375.0 94.5 1384.7 95.3 1392.0 97.0 C1399.3 98.7 1409.2 102.5 1418.0 106.0 C1426.8 109.5 1438.0 114.3 1445.0 118.0 C1452.0 121.7 1458.0 125.0 1460.0 128.0 C1462.0 131.0 1460.7 135.7 1457.0 136.0 C1453.3 136.3 1445.8 133.2 1438.0 130.0 C1430.2 126.8 1418.7 121.0 1410.0 117.0 C1401.3 113.0 1392.0 109.5 1386.0 106.0 C1380.0 102.5 1373.0 97.5 1374.0 96.0 Z" fill="#B9DBE3"/><path d="M1535.0 440.0 C1535.5 435.3 1543.8 425.5 1548.0 418.0 C1552.2 410.5 1556.3 401.3 1560.0 395.0 C1563.7 388.7 1567.7 381.8 1570.0 380.0 C1572.3 378.2 1574.7 379.8 1574.0 384.0 C1573.3 388.2 1569.0 397.3 1566.0 405.0 C1563.0 412.7 1559.5 423.2 1556.0 430.0 C1552.5 436.8 1548.5 444.3 1545.0 446.0 C1541.5 447.7 1534.5 444.7 1535.0 440.0 Z" fill="#B9DBE3"/><path d="M1330.0 340.0 C1331.7 336.7 1339.0 340.0 1340.0 345.0 C1341.0 350.0 1337.7 361.7 1336.0 370.0 C1334.3 378.3 1331.8 391.3 1330.0 395.0 C1328.2 398.7 1325.0 397.0 1325.0 392.0 C1325.0 387.0 1329.2 373.7 1330.0 365.0 C1330.8 356.3 1328.3 343.3 1330.0 340.0 Z" fill="#B9DBE3"/><path d="M1395.0 330.0 C1396.7 325.8 1401.5 325.0 1402.0 330.0 C1402.5 335.0 1400.0 351.3 1398.0 360.0 C1396.0 368.7 1392.2 378.7 1390.0 382.0 C1387.8 385.3 1384.7 384.5 1385.0 380.0 C1385.3 375.5 1390.3 363.3 1392.0 355.0 C1393.7 346.7 1393.3 334.2 1395.0 330.0 Z" fill="#B9DBE3"/><path d="M1308.0 155.0 C1308.8 154.0 1318.8 158.7 1325.0 162.0 C1331.2 165.3 1342.5 172.3 1345.0 175.0 C1347.5 177.7 1344.2 179.2 1340.0 178.0 C1335.8 176.8 1325.3 171.8 1320.0 168.0 C1314.7 164.2 1307.2 156.0 1308.0 155.0 Z" fill="#B9DBE3"/><path d="M962.0 722.0 C963.5 718.7 971.5 717.0 975.0 718.0 C978.5 719.0 982.5 724.3 983.0 728.0 C983.5 731.7 980.8 738.3 978.0 740.0 C975.2 741.7 968.7 741.0 966.0 738.0 C963.3 735.0 960.5 725.3 962.0 722.0 Z" fill="#B9DBE3"/><path d="M907.0 720.0 C907.5 718.3 912.7 716.3 915.0 717.0 C917.3 717.7 921.5 722.3 921.0 724.0 C920.5 725.7 914.3 727.7 912.0 727.0 C909.7 726.3 906.5 721.7 907.0 720.0 Z" fill="#B9DBE3"/><path d="M1678.0 855.0 C1678.7 852.2 1683.7 849.0 1686.0 849.0 C1688.3 849.0 1691.3 852.5 1692.0 855.0 C1692.7 857.5 1691.7 862.2 1690.0 864.0 C1688.3 865.8 1684.0 867.5 1682.0 866.0 C1680.0 864.5 1677.3 857.8 1678.0 855.0 Z" fill="#B9DBE3"/><path d="M1486.0 386.0 C1486.8 383.7 1490.8 388.0 1492.0 392.0 C1493.2 396.0 1493.8 407.7 1493.0 410.0 C1492.2 412.3 1488.2 410.0 1487.0 406.0 C1485.8 402.0 1485.2 388.3 1486.0 386.0 Z" fill="#B9DBE3"/>
<path d="M783.0 882.0 L782.8 875.8 L782.3 870.4 L782.0 864.0 L782.9 857.5 L782.4 852.1 L781.6 845.9 L782.0 840.0 L782.9 833.4 L783.6 826.6 L783.7 820.0 L784.7 814.5 L785.4 807.8 L786.0 801.0 L791.4 795.8 L797.0 790.0 L802.4 786.7 L808.9 784.3 L814.4 780.5 L820.1 777.7 L825.9 775.4 L832.0 772.0 L837.4 768.7 L844.0 764.0 L849.1 760.7 L855.0 757.0 L860.8 757.9 L868.3 758.5 L874.3 759.5 L880.7 761.5 L887.0 762.0 L892.6 764.7 L898.5 768.7 L905.0 772.0 L912.1 773.5 L920.3 776.5 L928.0 778.0 L934.2 778.9 L940.7 779.5 L946.8 780.6 L953.0 782.0 L958.5 786.5 L963.1 790.1 L969.0 794.0 L976.1 796.1 L983.0 799.0 L990.0 801.1 L998.1 801.5 L1005.0 804.0 L1012.0 805.0 L1016.9 808.1 L1021.9 810.8 L1027.8 814.1 L1033.1 816.5 L1038.0 820.0 L1044.8 822.2 L1052.1 823.4 L1058.9 825.8 L1066.0 827.0 L1074.6 827.9 L1083.0 830.0 L1089.4 829.2 L1094.9 828.5 L1100.9 828.0 L1106.5 827.8 L1113.0 827.0 L1117.9 824.5 L1123.2 821.7 L1129.6 818.6 L1134.9 815.5 L1140.0 813.0 L1143.3 806.7 L1145.7 801.1 L1148.9 794.1 L1152.0 788.0 L1156.2 783.1 L1159.7 778.1 L1163.7 773.5 L1167.0 769.0 L1171.9 766.1 L1177.4 762.5 L1183.8 758.6 L1188.0 754.5 L1193.7 751.4 L1199.5 748.6 L1204.6 744.1 L1210.3 740.6 L1215.1 737.6 L1221.0 734.0 L1226.0 728.9 L1230.5 725.0 L1235.7 720.1 L1240.7 715.2 L1245.0 711.0 L1252.0 709.3 L1259.0 707.0 L1264.8 704.5 L1272.0 703.0 L1277.4 699.4 L1283.0 696.1 L1288.5 693.1 L1293.0 689.8 L1299.0 687.0 L1303.1 682.2 L1307.2 676.9 L1311.5 673.0 L1315.7 668.2 L1319.3 663.4 L1324.5 658.1 L1328.2 653.2 L1332.8 647.8 L1336.7 643.6 L1340.4 638.9 L1345.1 633.4 L1349.0 629.0 L1357.0 629.0 L1363.4 631.3 L1369.4 634.0 L1375.1 636.3 L1381.6 639.1 L1388.0 641.0 L1392.9 644.4 L1398.7 647.1 L1404.1 649.4 L1409.0 653.1 L1414.3 655.9 L1418.8 658.6 L1424.7 661.6 L1429.3 664.8 L1435.0 668.0 L1440.8 670.7 L1446.1 673.7 L1452.3 676.3 L1457.7 679.2 L1464.3 681.9 L1470.0 684.0 L1474.1 691.9 L1477.0 699.0 L1470.9 703.0 L1465.5 707.7 L1459.8 711.3 L1454.1 715.3 L1449.0 720.0 L1448.2 727.1 L1446.1 733.3 L1444.8 739.5 L1443.3 746.2 L1441.8 752.2 L1440.8 758.6 L1439.3 766.0 L1438.0 772.0 L1430.8 769.9 L1425.0 768.1 L1418.0 767.0 L1411.7 769.4 L1406.1 770.7 L1399.5 772.7 L1394.0 775.0 L1391.6 782.0 L1390.2 788.5 L1387.9 795.3 L1385.7 801.9 L1383.0 808.0 L1377.8 810.3 L1371.2 813.3 L1365.8 816.3 L1359.7 819.5 L1354.0 821.5 L1348.1 824.6 L1342.7 827.5 L1336.7 829.8 L1331.0 833.0 L1327.4 838.2 L1323.7 843.9 L1320.3 849.6 L1317.4 854.3 L1313.9 860.0 L1310.3 865.8 L1307.2 871.6 L1303.7 876.2 L1300.0 882.0" fill="none" stroke="#B9A9C5" stroke-width="1.5" stroke-linejoin="round"/><path d="M1438.0 772.0 L1440.1 778.0 L1441.8 784.7 L1443.7 790.3 L1446.9 795.9 L1448.6 802.7 L1450.1 808.5 L1453.0 814.7 L1455.2 820.5 L1457.0 827.0 L1457.2 832.6 L1458.1 839.7 L1458.8 845.7 L1459.1 851.7 L1459.3 857.3 L1460.5 863.9 L1460.8 869.3 L1461.2 875.5 L1462.0 882.0" fill="none" stroke="#B9A9C5" stroke-width="1.5" stroke-linejoin="round"/><path d="M1213.0 690.0 L1216.0 697.2 L1218.6 705.1 L1222.0 712.0 L1224.9 718.0 L1229.0 724.0" fill="none" stroke="#B9A9C5" stroke-width="1.5" stroke-linejoin="round"/><path d="M1222.0 690.0 L1225.6 694.8 L1228.9 700.4 L1233.0 705.0 L1240.0 714.0" fill="none" stroke="#B9A9C5" stroke-width="1.5" stroke-linejoin="round"/><path d="M1830.0 540.0 L1827.5 534.0 L1824.6 528.8 L1821.9 522.5 L1820.5 516.2 L1817.6 511.0 L1814.4 504.9 L1812.7 499.1 L1810.3 492.9 L1807.2 487.0 L1805.0 482.2 L1802.6 476.2 L1800.0 470.0 L1802.9 464.3 L1805.5 457.7 L1809.2 452.3 L1811.9 445.5 L1815.0 440.0 L1820.3 437.2 L1826.0 435.4 L1831.5 433.0 L1838.0 429.5 L1843.0 427.5 L1848.2 424.9 L1854.9 422.0 L1860.0 420.0 L1865.1 414.5 L1870.1 410.5 L1874.6 404.4 L1880.0 400.0" fill="none" stroke="#B9A9C5" stroke-width="1.5" stroke-linejoin="round"/><path d="M1760.0 540.0 L1761.5 533.7 L1762.6 528.1 L1764.0 521.5 L1766.6 514.9 L1767.8 509.4 L1768.7 502.9 L1771.0 496.9 L1772.6 490.4 L1773.5 484.1 L1775.4 479.0 L1777.0 472.6 L1778.3 466.4 L1780.0 460.0 L1785.1 456.4 L1791.3 453.6 L1796.6 449.5 L1801.9 446.3 L1807.5 443.7 L1813.0 440.5 L1819.3 436.1 L1824.3 433.3 L1830.0 430.0 L1835.1 427.4 L1841.7 424.5 L1847.0 422.0 L1852.6 420.5 L1857.8 416.9 L1863.3 415.0 L1868.8 412.0 L1875.0 410.0" fill="none" stroke="#B9A9C5" stroke-width="1.5" stroke-linejoin="round"/><path d="M1899.0 610.0 L1901.6 615.8 L1903.8 622.4 L1906.2 628.0 L1909.9 633.5 L1912.0 640.0" fill="none" stroke="#B9A9C5" stroke-width="1.5" stroke-linejoin="round"/>
<path d="M1207.0 91.0 L1208.2 97.1 L1213.4 99.4 L1215.0 105.0 L1218.2 108.8 L1222.1 114.2 L1223.1 115.1 L1228.0 121.0 L1223.7 121.5 L1217.8 120.6 L1211.0 124.3 L1204.5 126.0 L1200.0 125.0 L1196.6 124.7 L1188.1 128.3 L1186.8 129.2 L1178.9 131.0 L1173.1 131.7 L1169.8 134.4 L1165.0 136.0 L1161.1 139.7 L1158.3 145.4 L1155.8 148.5 L1155.2 155.4 L1151.0 160.0 L1149.4 163.7 L1148.6 171.4 L1142.9 174.3 L1143.1 180.8 L1140.0 185.0 L1138.3 189.0 L1134.4 194.3 L1128.9 198.4 L1127.8 203.7 L1122.8 207.0 L1117.5 210.0 L1117.1 215.0 L1111.1 219.9 L1109.0 224.0 L1108.8 230.7 L1106.5 235.8 L1106.0 243.1 L1105.0 248.0 L1102.3 251.7 L1099.3 254.5 L1094.7 261.3 L1095.6 265.0 L1090.4 267.5 L1088.0 273.0 L1084.3 279.6 L1081.7 282.5 L1077.0 287.0 L1073.4 290.3 L1067.1 297.5 L1062.0 300.0 L1060.3 306.3 L1058.0 313.0 L1061.1 316.2 L1067.8 317.0 L1070.0 322.0 L1076.1 322.3 L1081.5 321.0 L1086.2 319.1 L1090.0 318.0" fill="none" stroke="#BEA9C6" stroke-width="2.2" stroke-linejoin="round"/><path d="M1228.0 121.0 L1235.4 122.2 L1237.4 118.1 L1246.1 120.1 L1251.1 117.8 L1256.0 118.0 L1261.4 117.4 L1266.3 114.6 L1270.7 114.6 L1276.9 116.0 L1282.8 113.2 L1285.8 111.1 L1291.0 111.0 L1294.4 108.0 L1301.5 108.1 L1306.4 109.3 L1312.3 106.8 L1316.4 103.6 L1322.1 102.9 L1328.1 105.3 L1334.1 100.9 L1340.3 102.3 L1344.0 100.0 L1350.2 101.3 L1355.7 100.6 L1359.3 101.0 L1367.0 97.4 L1371.5 99.4 L1375.6 98.3 L1381.1 99.6 L1386.4 98.9 L1391.1 98.8 L1397.0 97.0 L1404.0 98.5 L1408.0 101.9 L1414.0 101.8 L1417.4 102.8 L1424.7 103.8 L1430.9 105.8 L1436.3 107.6 L1440.0 110.0 L1446.8 112.3 L1450.0 113.1 L1455.6 114.9 L1460.0 116.0 L1464.4 115.3 L1470.4 118.7 L1476.0 115.8 L1481.9 118.9 L1487.5 117.3 L1491.0 119.0 L1492.7 123.0 L1493.1 129.6 L1492.2 137.8 L1494.0 142.0 L1494.0 146.9 L1498.6 150.6 L1497.6 157.9 L1500.1 162.1 L1502.0 166.0 L1504.8 162.3 L1510.0 160.4 L1514.3 158.3 L1518.8 154.3 L1523.4 149.2 L1530.0 147.0 L1531.3 140.5 L1528.7 137.4 L1529.5 129.7 L1532.0 124.9 L1528.1 120.5 L1530.0 116.0 L1535.5 115.4 L1538.5 112.1 L1543.1 111.0 L1551.1 110.6 L1556.6 109.0 L1561.4 107.2 L1564.9 103.7 L1570.6 102.5 L1573.4 101.4 L1580.0 100.0 L1586.5 97.8 L1590.3 98.1 L1595.1 96.3 L1601.8 96.0 L1605.4 95.9 L1608.1 95.7 L1613.6 93.0 L1618.1 92.6 L1623.4 93.8 L1630.0 94.4 L1636.7 93.7 L1640.0 91.0" fill="none" stroke="#BEA9C6" stroke-width="2.2" stroke-linejoin="round"/><path d="M1700.0 98.0 L1706.0 98.2 L1708.8 101.2 L1713.2 103.3 L1721.1 101.8 L1725.7 105.0 L1730.5 108.2 L1736.9 107.4 L1741.4 110.3 L1746.9 108.7 L1750.0 112.0 L1756.8 109.7 L1758.5 110.0 L1766.4 110.2 L1769.5 108.5 L1773.1 107.9 L1779.2 105.0 L1783.5 101.8 L1788.0 102.8 L1795.2 102.5 L1800.0 100.0 L1806.5 100.0 L1811.6 99.3 L1816.8 99.8 L1822.1 100.6 L1825.2 101.4 L1828.8 99.9 L1835.8 102.8 L1838.9 101.8 L1845.3 103.6 L1852.9 101.1 L1856.2 101.4 L1862.2 105.0 L1867.0 103.9 L1869.4 102.2 L1875.3 102.4 L1880.0 106.2 L1885.9 106.3 L1892.7 106.0 L1898.4 106.0 L1901.2 105.3 L1906.5 103.9 L1912.0 106.0" fill="none" stroke="#BEA9C6" stroke-width="2.2" stroke-linejoin="round"/><path d="M1457.0 125.0 L1460.0 132.0 L1456.4 136.4 L1453.4 138.0 L1445.7 144.1 L1442.5 145.9 L1439.0 150.0 L1441.3 154.0 L1442.6 160.5 L1440.3 167.4 L1443.0 171.0 L1445.7 174.2 L1449.2 181.8 L1451.2 186.2 L1454.7 188.5 L1457.0 195.9 L1456.6 200.6 L1460.0 205.0 L1463.7 208.1 L1469.5 210.1 L1471.4 212.1 L1476.5 216.0 L1483.4 218.6 L1486.0 220.0 L1490.1 222.7 L1494.8 227.1 L1500.0 230.7 L1502.0 236.0 L1508.2 230.2 L1511.8 227.7 L1515.3 224.2 L1518.6 220.4 L1524.9 216.2 L1528.0 213.0 L1530.8 219.1 L1533.4 222.4 L1538.0 228.0 L1543.3 229.7 L1547.1 232.3 L1553.6 231.2 L1558.2 232.6 L1564.0 236.0 L1568.7 237.1 L1573.7 241.6 L1580.0 244.0 L1586.1 239.9 L1590.5 237.4 L1596.0 234.0 L1600.5 231.4 L1603.3 226.7 L1608.8 223.0 L1613.5 215.2 L1617.0 213.0 L1620.4 213.0 L1626.6 211.1 L1631.0 209.6 L1637.4 208.0 L1643.0 207.0 L1646.0 207.6 L1653.0 205.0" fill="none" stroke="#BEA9C6" stroke-width="2.2" stroke-linejoin="round"/><path d="M1530.0 213.0 L1528.1 217.1 L1529.6 222.9 L1527.3 229.7 L1528.1 234.3 L1528.0 241.0 L1524.8 247.6 L1521.0 250.3 L1517.9 255.7 L1517.0 262.0 L1510.8 266.1 L1507.1 268.4 L1501.7 270.2 L1498.6 271.6 L1494.0 273.0 L1493.0 277.1 L1489.6 283.7 L1489.0 288.0 L1488.4 291.4 L1491.8 299.2 L1490.5 304.1 L1494.0 308.4 L1491.7 314.3 L1494.0 320.0" fill="none" stroke="#CFC0D6" stroke-width="1.6" stroke-linejoin="round"/><path d="M1160.0 310.0 L1159.8 315.4 L1161.3 320.9 L1163.2 323.9 L1161.6 332.2 L1163.5 335.0 L1167.3 341.2 L1167.6 346.5 L1167.7 350.4 L1168.0 357.0 L1173.0 355.0 L1177.1 351.0 L1182.2 344.8 L1186.0 343.0 L1190.5 347.5 L1192.2 349.5 L1198.0 355.4 L1200.9 361.2 L1204.4 365.5 L1207.0 368.0 L1212.6 367.9 L1218.8 367.1 L1225.0 364.0 L1232.2 363.6 L1234.9 365.2 L1243.9 367.2 L1248.2 367.9 L1253.4 369.4 L1259.0 371.0 L1262.4 366.8 L1267.3 363.6 L1271.7 359.2 L1275.0 353.0 L1278.4 349.6 L1279.7 341.0 L1282.4 338.9 L1284.6 331.9 L1285.9 325.2 L1287.0 321.0 L1291.7 316.8 L1292.8 310.3 L1298.4 309.5 L1298.7 304.2 L1303.3 297.1 L1307.0 294.0 L1313.2 293.6 L1321.0 291.0 L1321.9 294.6 L1320.3 300.0 L1320.1 306.5 L1320.1 314.5 L1318.0 318.0 L1321.5 323.8 L1324.2 324.0 L1328.9 327.6 L1330.8 333.0 L1335.9 335.8 L1339.0 341.0 L1343.2 344.8 L1350.3 347.5 L1357.0 348.0 L1359.9 353.5 L1359.5 360.1 L1361.0 366.0 L1366.9 370.0 L1371.9 373.8 L1377.0 377.0 L1382.3 371.5 L1384.0 366.0 L1381.4 361.5 L1378.3 354.5 L1377.0 350.0 L1382.4 345.9 L1384.2 339.7 L1387.2 337.8 L1389.1 333.8 L1395.0 327.4 L1398.0 325.0 L1400.8 319.4 L1403.2 313.4 L1405.6 309.5 L1407.0 303.0 L1405.8 295.9 L1409.0 294.2 L1409.0 287.0 L1414.0 285.8 L1421.4 284.3 L1427.0 284.0 L1427.0 289.0 L1427.5 295.9 L1427.7 300.8 L1429.0 307.0 L1434.8 307.4 L1438.8 312.4 L1442.5 312.6 L1448.0 316.0 L1454.6 313.2 L1457.5 312.1 L1465.0 309.0 L1468.9 308.1 L1475.0 307.0 L1479.6 311.3 L1482.9 314.7 L1484.1 321.1 L1488.0 325.0 L1495.5 322.8 L1500.0 321.0 L1497.7 314.5 L1497.8 309.8 L1497.7 307.4 L1494.1 300.1 L1495.4 296.6 L1493.0 291.0 L1491.7 284.9 L1488.0 280.0 L1487.3 284.2 L1490.7 289.1 L1489.6 294.7 L1490.7 299.6 L1493.4 303.6 L1490.5 311.8 L1494.8 316.9 L1494.0 320.0" fill="none" stroke="#BEA9C6" stroke-width="2.2" stroke-linejoin="round"/><path d="M1600.0 844.0 L1604.2 846.4 L1606.1 851.0 L1610.8 852.6 L1615.6 857.4 L1620.0 860.0 L1626.0 864.2 L1630.0 870.8 L1631.0 871.5 L1634.6 879.0 L1640.0 882.0" fill="none" stroke="#CFC0D6" stroke-width="1.6" stroke-linejoin="round"/><path d="M1670.0 844.0 L1666.4 847.8 L1666.2 855.4 L1665.0 860.0 L1661.0 862.8 L1658.7 869.8 L1655.8 874.2 L1655.2 876.1 L1652.0 882.0" fill="none" stroke="#CFC0D6" stroke-width="1.6" stroke-linejoin="round"/><path d="M1790.0 844.0 L1791.6 848.2 L1795.9 856.3 L1800.0 860.0 L1805.0 860.9 L1808.4 860.0 L1816.4 860.1 L1820.0 860.0 L1824.3 867.0 L1824.5 869.0 L1828.5 875.0 L1830.0 882.0" fill="none" stroke="#CFC0D6" stroke-width="1.6" stroke-linejoin="round"/><path d="M1899.0 300.0 L1893.1 300.7 L1888.9 303.2 L1882.8 306.4 L1881.4 310.3 L1876.0 310.3 L1870.2 312.7 L1864.0 314.3 L1859.3 319.9 L1857.0 321.7 L1852.0 321.5 L1846.0 325.0 L1847.2 330.3 L1850.9 335.9 L1853.5 337.6 L1854.4 344.7 L1856.0 347.5 L1857.9 351.9 L1861.7 359.7 L1862.0 363.0 L1861.4 368.0 L1862.1 374.8 L1861.3 381.6 L1859.0 386.0 L1863.4 389.5 L1868.2 393.3 L1870.8 396.6 L1877.9 399.4 L1881.0 405.0 L1884.5 408.5 L1890.8 411.1 L1897.0 414.0 L1900.6 418.1 L1906.5 422.3 L1907.9 427.1 L1912.0 433.0" fill="none" stroke="#BEA9C6" stroke-width="2.2" stroke-linejoin="round"/><path d="M1859.0 433.0 L1865.0 436.5 L1871.2 439.8 L1876.5 442.2 L1881.0 443.0 L1884.3 442.4 L1893.1 442.6 L1898.1 440.0 L1901.5 440.0 L1907.0 440.8 L1912.0 440.0" fill="none" stroke="#BEA9C6" stroke-width="2.0" stroke-linejoin="round"/><path d="M1172.0 345.0 L1171.5 351.0 L1169.3 354.3 L1168.0 360.0 L1166.1 365.5 L1167.1 370.8 L1166.3 375.8 L1165.6 380.9 L1166.5 384.7 L1165.5 390.5 L1165.0 395.0 L1165.4 401.2 L1168.6 406.3 L1169.0 413.0 L1172.2 418.1 L1174.5 421.5 L1174.5 427.4 L1178.9 430.8 L1179.0 434.6 L1182.9 439.4 L1186.1 444.8 L1187.0 449.0 L1184.7 454.3 L1183.8 459.9 L1184.0 463.4 L1181.8 468.8 L1180.0 473.0 L1175.7 476.1 L1168.3 475.9 L1164.8 477.4 L1159.6 478.4 L1155.3 481.4 L1149.0 483.0 L1143.1 486.5 L1138.9 488.1 L1134.7 490.9 L1130.0 495.0 L1132.0 500.6 L1136.3 502.5 L1139.3 507.1 L1140.8 514.2 L1144.5 516.9 L1147.0 522.0 L1150.3 525.3 L1153.2 530.8 L1158.0 533.0 L1160.3 536.4 L1165.9 539.9 L1170.2 543.0 L1173.8 548.6 L1176.0 551.0 L1172.8 556.0 L1168.5 559.7 L1165.9 562.6 L1161.2 567.0 L1157.4 568.9 L1154.0 574.0 L1155.5 578.5 L1155.6 585.3 L1155.4 588.2 L1156.1 595.1 L1158.0 600.0 L1161.2 603.1 L1165.0 609.0 L1168.0 611.3 L1173.4 615.8 L1175.2 619.2 L1179.4 622.1 L1183.0 627.0 L1187.3 628.3 L1193.2 630.1 L1197.5 633.9 L1202.9 634.0 L1206.6 635.6 L1211.0 638.0 L1215.7 637.8 L1221.9 639.0 L1225.4 636.0 L1230.8 636.0 L1234.6 638.0 L1241.0 637.0 L1237.7 642.7 L1236.3 648.3 L1235.6 650.7 L1231.4 658.3 L1230.5 661.8 L1228.0 667.0 L1227.3 674.4 L1225.0 680.0 L1227.5 684.9 L1230.0 690.0" fill="none" stroke="#BEA9C6" stroke-width="2.2" stroke-linejoin="round"/><path d="M380.0 825.0 L384.8 822.9 L391.6 821.8 L396.6 822.2 L402.0 822.0 L404.7 824.5 L409.1 826.7 L413.8 827.9 L420.0 832.0 L424.0 837.0 L427.2 838.2 L433.0 843.0 L439.8 843.1 L446.0 839.3 L452.0 838.0 L459.4 836.9 L464.4 838.7 L467.1 838.7 L474.0 841.0 L478.4 842.6 L483.1 842.0 L490.1 841.5 L494.9 840.6 L498.1 841.5 L505.0 843.0 L506.0 837.2 L504.8 832.3 L505.6 825.7 L506.0 821.0 L512.8 823.0 L516.2 823.7 L522.9 826.1 L529.3 825.0 L534.0 827.0 L541.4 827.7 L544.7 832.5 L549.1 833.7 L556.0 836.0 L559.4 838.5 L567.5 839.9 L573.1 840.7 L577.6 843.6 L582.0 845.0 L586.8 848.3 L591.0 852.0 L597.6 854.2 L601.3 853.5 L604.8 854.0 L612.4 855.6 L617.0 854.0 L621.8 859.6 L624.0 867.0 L628.5 869.9 L632.1 871.3 L637.7 872.2 L644.0 876.0 L647.7 878.1 L653.5 877.0 L660.1 880.5 L666.0 880.0 L669.8 879.5 L677.2 881.0 L683.8 880.7 L687.1 878.7 L692.9 880.3 L700.8 877.1 L703.2 877.2 L710.0 878.0 L714.3 877.6 L721.0 876.4 L724.0 876.7 L730.8 876.9 L738.5 877.1 L742.0 876.0 L747.8 877.5 L754.2 876.2 L760.8 880.1 L765.0 880.0" fill="none" stroke="#BEA9C6" stroke-width="2.2" stroke-linejoin="round"/><path d="M505.0 843.0 L508.6 848.0 L512.0 854.0 L513.0 859.0 L512.0 864.7 L511.7 872.2 L510.8 876.2 L512.0 882.0" fill="none" stroke="#BEA9C6" stroke-width="1.8" stroke-linejoin="round"/><path d="M382.0 195.0 L387.0 194.2 L390.8 195.9 L395.3 194.1 L404.0 192.1 L407.7 194.0 L410.8 192.7 L418.5 192.7 L423.7 191.2 L426.9 190.7 L433.0 192.0 L438.0 188.2 L443.0 181.0 L447.5 185.6 L450.9 189.0 L453.9 190.7 L460.4 195.9 L463.5 196.9 L468.0 202.0 L472.7 202.2 L478.3 206.0 L483.6 207.7 L491.9 205.8 L496.0 209.0 L499.0 213.0 L501.1 216.7 L508.1 219.4 L510.4 223.5 L513.8 230.6 L515.8 231.0 L518.8 237.2 L524.0 241.0 L524.7 244.2 L529.2 252.4 L531.6 255.2 L535.1 258.9 L537.4 264.1 L540.2 272.1 L540.6 275.3 L545.0 280.0 L548.2 282.8 L549.7 290.4 L555.4 291.1 L557.0 298.6 L559.0 301.0 L563.3 300.8 L567.8 299.1 L575.7 299.4 L581.4 296.7 L585.1 299.1 L591.0 297.0 L596.3 296.4 L600.6 298.1 L606.3 293.8 L612.2 294.6 L615.7 293.7 L620.8 293.7 L626.0 294.0 L629.8 294.5 L635.3 295.1 L640.4 295.1 L649.0 294.0 L654.1 293.0 L659.6 293.7 L663.0 295.9 L669.2 293.5 L675.0 294.0" fill="none" stroke="#CFC0D6" stroke-width="1.6" stroke-linejoin="round"/><path d="M735.0 91.0 L737.1 95.9 L739.0 100.2 L741.8 107.8 L742.9 110.3 L744.2 116.1 L746.0 122.0 L744.4 129.2 L746.8 131.0 L745.7 138.7 L743.2 142.8 L743.8 149.0 L743.3 155.2 L742.0 160.0 L742.4 166.4 L747.6 172.5 L748.0 174.2 L747.3 179.9 L752.9 185.9 L753.0 192.0 L753.6 198.9 L754.6 202.9 L756.2 206.3 L758.0 214.7 L757.5 217.6 L760.0 224.0 L757.7 229.1 L756.0 238.0" fill="none" stroke="#CFC0D6" stroke-width="1.6" stroke-linejoin="round"/><path d="M594.0 502.0 L589.3 504.7 L585.0 507.0 L586.7 512.6 L585.0 518.8 L583.7 524.3 L585.0 530.0 L582.5 535.6 L577.4 538.0 L574.4 544.4 L573.8 545.8 L570.0 552.0 L566.9 556.5 L560.6 557.8 L555.0 560.0 L549.9 562.3 L547.6 566.7 L542.5 571.7 L540.0 577.0 L539.4 582.6 L542.3 589.9 L543.8 594.8 L545.0 600.0 L545.4 595.6 L545.6 589.1 L548.1 587.0 L547.9 580.8 L546.1 573.9 L546.4 568.3 L548.7 564.6 L548.0 560.0 L548.0 564.6 L547.1 571.5 L541.8 574.1 L544.1 580.2 L543.0 585.0 L538.0 591.0 L539.4 594.6 L535.3 599.9 L537.4 606.7 L532.6 609.8 L531.2 614.1 L532.6 619.6 L530.0 626.0 L525.5 629.3 L519.3 633.9 L514.3 637.1 L511.0 640.0 L504.0 643.7 L500.0 648.0 L493.1 647.1 L490.3 649.2 L481.8 649.5 L475.6 647.6 L471.0 648.0 L467.9 650.8 L460.4 654.5 L456.4 653.8 L454.1 656.3 L447.7 657.5 L442.4 661.8 L438.5 664.2 L435.0 666.0 L430.7 669.4 L429.2 673.1 L423.9 678.3 L418.5 679.0 L416.0 684.0 L416.2 691.1 L412.2 694.4 L412.8 703.2 L409.2 709.0 L409.0 713.0 L414.1 717.2 L415.9 719.0 L418.0 726.3 L422.4 729.0 L427.0 732.0 L430.0 738.3 L435.0 742.0 L434.4 746.7 L431.7 753.9 L430.3 757.4 L431.0 764.0 L427.5 769.2 L424.0 770.6 L421.4 774.1 L416.0 779.0 L413.1 783.4 L413.8 787.8 L411.7 794.3 L412.3 798.7 L410.4 807.0 L411.9 811.3 L409.0 816.0 L403.8 818.7 L395.6 818.8 L391.0 823.0 L382.0 826.0" fill="none" stroke="#CFC0D6" stroke-width="1.6" stroke-linejoin="round"/><path d="M594.0 502.0 L599.6 504.6 L606.2 504.6 L609.3 507.5 L617.0 510.0 L619.6 516.2 L624.0 520.0 L629.8 518.8 L634.2 517.4 L637.6 515.0 L642.6 515.2 L649.0 512.0 L655.0 513.0" fill="none" stroke="#CFC0D6" stroke-width="1.6" stroke-linejoin="round"/><path d="M924.0 615.0 L926.0 622.2 L930.0 628.0 L932.1 635.4 L931.4 638.9 L934.0 646.0 L931.3 650.2 L932.3 655.2 L930.0 662.0 L927.5 665.2 L923.8 670.4 L922.0 675.0 L922.9 680.4 L919.1 684.1 L919.1 691.5 L920.0 695.0 L916.6 698.9 L912.0 701.3 L906.0 703.0 L906.5 709.8 L902.4 715.7 L902.0 720.0 L902.7 726.0 L903.8 729.7 L903.7 734.7 L905.0 740.0" fill="none" stroke="#CFC0D6" stroke-width="1.6" stroke-linejoin="round"/><path d="M1207.0 91.0 L1202.2 94.4 L1199.3 97.9 L1195.0 100.0 L1191.0 95.0 L1188.0 91.0" fill="none" stroke="#CFC0D6" stroke-width="1.4" stroke-linejoin="round"/><path d="M1339.0 341.0 L1338.6 343.5 L1335.4 348.6 L1334.2 352.6 L1330.0 359.0 L1332.2 365.4 L1332.8 372.3 L1331.0 375.4 L1333.5 380.8 L1332.4 386.2 L1334.0 393.0 L1338.2 398.7 L1340.8 400.3 L1344.1 405.6 L1344.1 409.6 L1348.0 414.0 L1349.9 417.3 L1352.7 423.4 L1354.9 430.7 L1357.4 433.6 L1359.0 439.0 L1359.5 447.5 L1357.0 452.0 L1352.5 456.0 L1346.1 455.1 L1342.2 460.5 L1339.0 461.0 L1330.0 458.0 L1330.5 463.9 L1328.6 468.0 L1330.8 471.4 L1329.0 478.0 L1329.9 481.2 L1333.7 489.4 L1336.4 492.6 L1338.6 496.7 L1341.0 503.0 L1349.3 502.9 L1354.0 504.0 L1359.4 501.7 L1367.0 501.0 L1371.0 509.0 L1375.8 514.8 L1378.0 522.0 L1384.3 525.7 L1387.1 529.0 L1392.0 535.0 L1397.1 541.2 L1399.0 545.0 L1399.9 549.5 L1401.0 557.0 L1399.5 562.3 L1399.4 570.2 L1397.5 573.4 L1395.0 580.0 L1390.2 585.6 L1390.8 586.6 L1386.0 591.9 L1384.9 594.2 L1380.0 600.0" fill="none" stroke="#CFC0D6" stroke-width="1.6" stroke-linejoin="round"/><path d="M1418.0 497.0 L1423.9 495.4 L1431.0 494.0 L1436.0 490.0 L1443.0 492.0 L1447.0 492.0 L1452.4 493.8 L1458.1 496.6 L1463.3 498.5 L1470.0 500.0 L1473.0 500.0 L1479.3 500.2 L1486.0 501.7 L1491.2 505.2 L1494.0 505.7 L1500.0 505.0" fill="none" stroke="#CFC0D6" stroke-width="1.6" stroke-linejoin="round"/><path d="M1414.0 516.0 L1411.6 522.7 L1409.0 527.0 L1412.0 535.0 L1412.3 541.2 L1409.0 549.0 L1412.0 557.0 L1416.7 561.4 L1419.8 562.6 L1420.9 567.3 L1427.4 570.4 L1430.0 575.0 L1434.3 577.8 L1440.0 583.9 L1442.5 587.7 L1445.4 590.5 L1452.9 591.5 L1456.5 596.7 L1460.0 600.0 L1465.8 602.8 L1468.2 609.5 L1472.6 611.2 L1474.3 617.8 L1480.0 620.0" fill="none" stroke="#CFC0D6" stroke-width="1.6" stroke-linejoin="round"/><path d="M1535.0 357.0 L1533.2 363.0 L1533.3 366.5 L1533.5 373.0 L1532.9 378.2 L1531.6 382.7 L1532.0 389.0 L1538.3 389.8 L1543.7 393.1 L1550.0 395.3 L1554.0 395.0 L1559.3 392.9 L1567.6 393.3 L1573.0 392.0 L1576.1 396.0 L1583.2 400.0 L1586.0 402.0 L1580.9 405.1 L1576.0 411.7 L1572.9 414.5 L1570.2 417.9 L1566.1 422.7 L1562.4 424.5 L1556.5 429.0 L1554.0 433.0 L1555.7 437.9 L1554.7 446.2 L1554.0 452.0 L1555.8 455.2 L1561.1 460.4 L1563.1 464.9 L1565.1 470.2 L1570.2 473.8 L1573.0 478.0 L1576.4 484.0 L1582.3 487.7 L1583.4 490.8 L1589.0 497.0 L1593.1 497.6 L1600.6 501.7 L1604.3 505.4 L1611.0 506.0 L1617.0 509.7 L1623.3 511.7 L1627.6 515.4 L1633.0 516.0 L1636.7 516.8 L1644.9 515.9 L1649.9 514.7 L1653.5 515.1 L1659.0 516.0 L1663.8 516.3 L1667.9 514.4 L1675.9 513.7 L1678.2 516.0 L1685.0 511.6 L1690.0 513.0 L1695.6 513.1 L1699.3 517.0 L1706.6 517.2 L1711.4 519.2 L1716.5 518.9 L1722.0 522.0" fill="none" stroke="#CFC0D6" stroke-width="1.6" stroke-linejoin="round"/><path d="M1586.0 402.0 L1590.7 399.1 L1594.1 394.0 L1597.6 392.0 L1602.0 386.0 L1604.8 380.8 L1608.4 377.4 L1612.3 373.6 L1615.1 370.0 L1619.6 367.1 L1624.0 363.0 L1626.8 358.3 L1630.8 357.2 L1636.0 354.0 L1640.4 352.3 L1646.9 348.3 L1648.9 346.9 L1656.4 342.9 L1660.8 339.9 L1665.0 338.0 L1671.4 336.1 L1675.7 333.3 L1678.2 328.4 L1684.0 325.0 L1682.9 319.9 L1679.6 310.9 L1678.0 306.0 L1680.9 299.2 L1683.6 293.6 L1685.0 290.3 L1686.1 285.1 L1690.0 280.0 L1692.5 275.0 L1696.6 272.5 L1699.1 265.5 L1700.0 262.0" fill="none" stroke="#CFC0D6" stroke-width="1.6" stroke-linejoin="round"/><path d="M1735.0 344.0 L1739.3 349.3 L1741.5 354.8 L1742.2 358.3 L1747.5 363.8 L1748.9 365.5 L1750.9 373.4 L1754.0 376.0 L1757.4 376.5 L1765.8 378.2 L1767.8 378.9 L1775.6 380.1 L1779.0 382.0 L1785.2 386.0 L1792.0 389.0 L1795.7 393.7 L1795.3 398.8 L1797.6 401.6 L1802.0 408.0 L1805.0 411.0" fill="none" stroke="#CFC0D6" stroke-width="1.6" stroke-linejoin="round"/><path d="M1243.0 637.0 L1246.1 635.0 L1252.4 631.4 L1255.2 629.8 L1262.0 625.9 L1265.2 622.1 L1267.7 619.8 L1274.5 615.8 L1279.7 613.7 L1283.0 612.0 L1284.3 604.8 L1289.7 602.3 L1291.5 596.5 L1290.5 590.0 L1294.7 583.8 L1297.0 580.0 L1303.8 578.6 L1305.6 579.6 L1310.5 579.1 L1316.8 576.8 L1321.4 575.7 L1325.7 573.0 L1332.0 574.0 L1337.1 568.6 L1340.5 564.2 L1343.0 561.0 L1350.3 562.0 L1354.8 560.9 L1359.5 560.1 L1363.1 558.5 L1370.0 558.0 L1376.8 558.6 L1382.7 563.2 L1386.1 563.0 L1391.8 564.9 L1399.5 566.7 L1403.0 569.0 L1404.8 571.0 L1411.2 578.3 L1414.0 580.0 L1417.9 584.7 L1420.2 587.8 L1425.0 591.0 L1430.6 593.5 L1434.5 593.7 L1440.6 598.7 L1446.0 599.4 L1452.0 601.0 L1456.6 596.1 L1460.9 595.6 L1468.0 591.0 L1474.1 592.5 L1478.7 595.7 L1484.6 598.8 L1487.6 601.0 L1493.0 601.0 L1499.2 604.2 L1503.3 606.6 L1505.7 608.4 L1512.1 610.8 L1515.0 615.0" fill="none" stroke="#CFC0D6" stroke-width="1.6" stroke-linejoin="round"/><path d="M1250.0 380.0 L1255.8 382.6 L1256.1 390.0 L1260.7 390.5 L1266.6 395.4 L1270.0 400.0 L1275.6 402.9 L1279.8 407.3 L1282.4 413.7 L1286.7 417.7 L1290.0 420.0 L1292.5 423.2 L1294.9 430.4 L1294.2 433.8 L1298.1 440.3 L1300.1 446.1 L1300.0 450.0" fill="none" stroke="#CFC0D6" stroke-width="1.4" stroke-linejoin="round"/><path d="M1120.0 200.0 L1125.4 205.5 L1129.1 205.8 L1131.6 210.9 L1135.1 213.5 L1137.5 218.5 L1141.4 222.3 L1144.3 224.6 L1150.0 230.0 L1154.6 233.4 L1157.6 238.4 L1160.7 239.5 L1166.1 245.4 L1169.4 249.2 L1174.4 252.0 L1177.3 255.7 L1180.0 260.0 L1182.8 265.6 L1184.3 268.3 L1187.4 275.9 L1190.4 279.8 L1193.1 283.7 L1193.7 289.3 L1198.8 293.8 L1200.0 300.0 L1202.7 301.3 L1206.7 304.8 L1213.1 309.9 L1216.5 310.9 L1220.6 313.5 L1226.8 317.3 L1230.0 320.0" fill="none" stroke="#CFC0D6" stroke-width="1.3" stroke-linejoin="round"/><path d="M1260.0 190.0 L1263.3 196.4 L1263.7 202.0 L1266.3 205.7 L1268.4 211.0 L1271.1 215.8 L1275.9 221.1 L1277.3 226.5 L1280.0 230.0 L1284.8 232.7 L1285.8 240.4 L1289.5 242.6 L1290.6 249.0 L1292.6 252.5 L1298.5 254.3 L1300.0 260.0 L1303.1 263.0 L1307.7 267.0 L1312.8 272.9 L1314.3 276.6 L1317.0 277.1 L1323.2 283.7 L1327.5 288.2 L1330.0 290.0" fill="none" stroke="#CFC0D6" stroke-width="1.3" stroke-linejoin="round"/><path d="M1400.0 150.0 L1401.5 156.7 L1405.4 158.9 L1407.5 165.5 L1406.2 171.8 L1409.0 174.2 L1411.7 180.4 L1412.5 185.7 L1417.3 190.0 L1419.2 195.5 L1420.0 200.0 L1424.3 202.7 L1425.4 207.9 L1427.4 213.9 L1432.5 214.4 L1435.3 219.7 L1436.8 222.6 L1440.8 226.3 L1444.3 232.1 L1445.5 237.5 L1450.0 240.0 L1451.9 242.4 L1458.8 246.4 L1460.9 251.5 L1464.7 255.0 L1468.8 258.7 L1470.7 263.8 L1475.4 264.4 L1480.0 270.0" fill="none" stroke="#CFC0D6" stroke-width="1.3" stroke-linejoin="round"/>
<path d="M469.0 91.0 C470.0 92.1 472.9 95.4 475.2 97.7 C477.6 100.0 480.6 102.7 483.0 104.9 C485.5 107.2 487.5 109.1 489.8 111.3 C492.0 113.5 494.5 116.0 496.7 118.3 C498.9 120.5 501.6 122.1 503.0 125.0 C504.4 127.9 504.3 132.3 505.3 135.9 C506.3 139.6 508.7 143.5 509.0 147.0 C509.3 150.5 507.5 154.0 507.3 157.0 C507.1 160.1 508.0 162.3 507.7 165.4 C507.5 168.5 506.2 172.4 505.7 175.4 C505.2 178.5 504.9 180.8 504.5 183.8 C504.2 186.8 503.8 190.2 503.5 193.4 C503.2 196.6 503.7 199.6 503.0 203.0 C502.3 206.4 500.8 210.3 499.5 213.7 C498.2 217.2 496.5 220.5 495.2 223.7 C493.9 226.9 493.4 229.8 492.0 233.0 C490.6 236.2 488.5 239.9 486.8 242.9 C485.2 245.9 483.7 248.1 482.0 251.0 C480.3 253.8 478.3 257.0 476.5 260.1 C474.7 263.3 473.5 267.5 471.0 270.0 C468.5 272.5 464.3 273.3 461.5 275.1 C458.7 276.9 456.9 278.8 454.0 280.7 C451.2 282.6 447.2 284.7 444.4 286.4 C441.5 288.1 439.6 289.0 436.8 290.7 C434.0 292.4 430.3 294.9 427.3 296.6 C424.4 298.4 422.2 299.4 419.4 301.1 C416.5 302.8 412.7 304.9 410.0 307.0 C407.3 309.1 405.4 311.9 403.1 314.0 C400.8 316.1 398.4 317.9 396.2 319.8 C393.9 321.8 391.8 323.7 389.4 325.8 C387.1 327.8 383.2 331.0 382.0 332.0" fill="none" stroke="#E996A6" stroke-width="1.5" stroke-linejoin="round" stroke-linecap="round"/><path d="M507.0 91.0 C507.1 92.5 507.4 96.8 507.7 100.1 C508.1 103.4 508.8 107.6 508.9 110.9 C509.1 114.2 508.7 117.0 508.7 120.1 C508.7 123.1 508.7 125.8 508.9 129.0 C509.2 132.1 509.8 137.3 510.0 139.0" fill="none" stroke="#E996A6" stroke-width="1.5" stroke-linejoin="round" stroke-linecap="round"/><path d="M382.0 470.0 C382.5 470.8 384.3 472.5 385.0 475.0 C385.7 477.5 385.9 481.8 386.4 485.2 C387.0 488.6 387.7 492.0 388.5 495.3 C389.2 498.6 390.4 500.9 391.0 505.0 C391.6 509.1 393.5 515.8 392.0 520.0 C390.5 524.2 383.7 528.3 382.0 530.0" fill="none" stroke="#E996A6" stroke-width="1.5" stroke-linejoin="round" stroke-linecap="round"/><path d="M583.0 326.0 C584.7 326.1 590.2 326.3 593.4 326.6 C596.7 326.9 599.7 327.6 602.7 327.7 C605.7 327.8 608.4 327.3 611.5 327.3 C614.7 327.4 618.6 327.6 621.8 328.1 C625.1 328.5 628.0 329.6 631.1 330.0 C634.3 330.3 637.7 330.5 641.0 330.0 C644.3 329.5 647.9 327.8 650.9 326.9 C653.9 326.0 655.9 325.4 659.0 324.6 C662.1 323.7 666.4 322.6 669.5 321.7 C672.7 320.9 675.0 320.1 677.9 319.4 C680.8 318.7 683.9 318.3 687.1 317.5 C690.3 316.8 694.0 315.9 697.0 315.0 C700.0 314.1 702.2 312.8 705.1 311.9 C708.0 310.9 711.6 310.3 714.6 309.4 C717.5 308.5 719.8 307.4 722.7 306.5 C725.5 305.5 728.6 304.6 731.5 303.5 C734.4 302.4 737.0 301.0 740.0 300.0 C743.0 299.0 746.2 298.3 749.6 297.8 C753.0 297.2 756.7 297.4 760.1 296.7 C763.6 296.1 766.9 294.8 770.2 294.0 C773.4 293.1 776.3 292.3 779.6 291.7 C782.9 291.0 788.3 290.3 790.0 290.0" fill="none" stroke="#E996A6" stroke-width="1.5" stroke-linejoin="round" stroke-linecap="round"/><path d="M380.0 125.0 C381.9 124.5 387.7 123.3 391.2 122.1 C394.7 120.9 398.4 117.5 401.0 118.0 C403.6 118.5 405.0 122.6 406.7 125.2 C408.4 127.8 409.6 131.2 411.4 133.7 C413.2 136.2 415.8 137.6 417.5 140.2 C419.2 142.8 420.2 146.6 421.8 149.3 C423.4 152.0 425.2 154.1 427.1 156.6 C428.9 159.0 430.6 163.1 433.0 164.0 C435.4 164.9 438.5 162.7 441.5 162.0 C444.5 161.3 448.1 160.5 451.1 159.6 C454.0 158.8 456.3 157.7 459.1 157.0 C461.9 156.2 464.7 155.2 468.0 155.0 C471.3 154.8 475.3 155.7 478.9 155.9 C482.4 156.1 485.7 156.1 489.2 156.3 C492.7 156.5 496.6 156.8 500.0 157.0 C503.4 157.2 506.7 157.3 509.9 157.6 C513.0 158.0 515.9 158.7 519.1 159.1 C522.2 159.5 525.3 159.8 528.8 160.2 C532.2 160.6 536.3 161.2 539.7 161.5 C543.1 161.8 546.0 161.9 549.0 162.0 C552.0 162.1 554.7 161.9 557.9 161.9 C561.1 161.8 564.9 161.8 568.2 161.8 C571.5 161.7 574.5 161.6 577.6 161.5 C580.7 161.4 583.6 161.1 586.6 161.3 C589.6 161.4 592.6 162.3 595.6 162.5 C598.6 162.6 601.6 162.2 604.7 162.2 C607.9 162.3 611.6 162.8 614.6 162.8 C617.6 162.8 619.8 162.2 622.7 162.0 C625.5 161.9 628.6 161.9 631.7 161.8 C634.8 161.7 637.9 161.4 641.2 161.5 C644.4 161.5 649.4 161.9 651.0 162.0" fill="none" stroke="#E996A6" stroke-width="1.5" stroke-linejoin="round" stroke-linecap="round"/><path d="M401.0 118.0 C401.8 115.8 404.3 109.5 406.0 105.0 C407.7 100.5 410.2 93.3 411.0 91.0" fill="none" stroke="#E996A6" stroke-width="1.5" stroke-linejoin="round" stroke-linecap="round"/><path d="M651.0 91.0 C651.1 92.8 651.5 98.3 651.3 101.8 C651.2 105.3 650.2 108.8 650.2 112.0 C650.3 115.1 651.3 117.4 651.5 120.7 C651.7 124.1 651.7 128.4 651.5 132.1 C651.3 135.7 650.6 139.2 650.5 142.5 C650.4 145.8 650.7 148.5 650.8 151.8 C650.9 155.0 649.9 159.0 651.0 162.0 C652.1 165.0 655.4 167.3 657.6 169.6 C659.8 172.0 662.0 174.0 664.1 176.3 C666.1 178.6 668.0 180.9 670.0 183.4 C672.0 185.9 674.0 188.8 676.0 191.3 C678.0 193.8 679.8 196.0 682.0 198.4 C684.2 200.9 687.7 203.1 689.0 206.0 C690.3 208.9 689.5 212.6 689.5 216.0 C689.5 219.4 688.9 222.8 688.9 226.3 C688.9 229.7 689.4 233.2 689.4 236.9 C689.4 240.5 688.3 244.5 689.0 248.0 C689.7 251.5 692.1 254.6 693.8 257.7 C695.6 260.9 697.7 263.7 699.6 266.8 C701.4 269.8 703.3 273.1 705.0 276.0 C706.7 278.9 708.1 281.4 709.5 284.0 C710.9 286.6 712.1 288.8 713.5 291.4 C715.0 294.1 716.4 297.0 718.0 300.0 C719.6 303.0 721.3 306.2 723.1 309.5 C724.9 312.8 726.9 316.3 728.9 319.7 C730.9 323.1 732.9 326.9 735.0 330.0 C737.1 333.1 739.5 335.6 741.3 338.5 C743.1 341.5 744.0 344.6 745.7 347.6 C747.5 350.7 750.6 353.4 752.0 357.0 C753.4 360.6 753.4 365.2 754.4 369.0 C755.4 372.9 757.4 378.2 758.0 380.0" fill="none" stroke="#E996A6" stroke-width="1.5" stroke-linejoin="round" stroke-linecap="round"/><path d="M651.0 162.0 C649.9 163.4 646.3 167.6 644.3 170.4 C642.4 173.2 641.3 176.1 639.3 178.8 C637.2 181.4 634.4 183.7 632.2 186.4 C630.0 189.2 628.0 191.8 626.0 195.0 C624.0 198.2 621.9 202.4 620.2 205.5 C618.5 208.7 617.5 210.9 615.9 214.1 C614.3 217.3 612.2 221.3 610.4 224.6 C608.6 227.9 606.4 230.9 605.0 234.0 C603.6 237.1 603.4 240.2 602.2 243.4 C600.9 246.6 599.0 249.6 597.7 253.0 C596.5 256.4 595.8 260.6 594.6 263.9 C593.5 267.3 591.8 270.1 591.0 273.0 C590.2 275.9 590.3 278.5 589.7 281.4 C589.1 284.3 588.1 287.2 587.4 290.3 C586.6 293.4 585.9 296.9 585.3 300.0 C584.7 303.0 584.1 305.7 583.6 308.6 C583.0 311.6 582.4 314.9 582.0 317.9 C581.6 320.9 581.8 323.6 581.3 326.6 C580.8 329.6 579.6 333.0 579.0 336.0 C578.4 339.0 578.4 341.9 577.9 344.8 C577.4 347.8 576.5 350.6 576.1 353.7 C575.7 356.8 575.9 360.4 575.6 363.5 C575.3 366.7 574.7 369.8 574.2 372.6 C573.8 375.5 573.5 377.8 572.9 380.7 C572.4 383.6 571.3 387.1 570.9 390.1 C570.4 393.2 568.9 396.0 570.0 399.0 C571.1 402.0 575.0 405.2 577.5 408.1 C580.1 411.1 582.9 414.0 585.3 416.8 C587.7 419.6 590.4 420.8 592.0 425.0 C593.6 429.2 593.8 437.2 595.0 442.0 C596.2 446.8 598.1 449.9 599.3 453.8 C600.4 457.6 602.3 461.6 602.0 465.0 C601.7 468.4 599.0 471.1 597.3 474.0 C595.6 476.8 592.6 478.7 592.0 482.0 C591.4 485.3 593.0 490.1 593.5 494.0 C594.0 497.8 594.9 501.1 595.0 505.0 C595.1 508.9 594.6 513.4 594.1 517.5 C593.6 521.7 591.6 525.9 592.0 530.0 C592.4 534.1 594.7 538.1 596.2 542.3 C597.7 546.5 600.4 551.4 601.0 555.0 C601.6 558.6 600.4 561.1 600.0 564.1 C599.6 567.1 599.0 569.8 598.6 572.8 C598.2 575.9 598.1 579.1 597.8 582.3 C597.5 585.4 597.4 588.8 596.9 591.7 C596.4 594.7 595.5 596.5 595.0 600.0 C594.5 603.5 593.9 608.5 593.7 612.8 C593.6 617.2 594.6 622.1 594.0 626.0 C593.4 629.9 591.5 632.8 590.1 636.1 C588.8 639.3 587.2 642.2 585.7 645.6 C584.2 649.0 582.5 653.2 581.1 656.6 C579.6 660.0 577.2 662.7 577.0 666.0 C576.8 669.3 579.0 673.2 580.0 676.6 C581.1 680.1 582.2 683.3 583.2 686.7 C584.1 690.0 585.0 693.4 585.8 696.7 C586.6 699.9 587.6 704.4 588.0 706.0" fill="none" stroke="#E996A6" stroke-width="1.5" stroke-linejoin="round" stroke-linecap="round"/><path d="M382.0 530.0 C384.0 529.7 389.7 528.8 393.9 528.0 C398.1 527.2 404.0 528.0 407.0 525.0 C410.0 522.0 409.3 512.5 412.0 510.0 C414.7 507.5 419.8 509.9 423.4 509.8 C426.9 509.7 429.8 509.6 433.1 509.5 C436.5 509.5 439.9 509.5 443.6 509.5 C447.2 509.6 451.8 510.6 455.0 510.0 C458.2 509.4 459.9 507.6 462.5 506.0 C465.1 504.4 467.6 501.8 470.5 500.3 C473.4 498.8 477.0 498.4 479.7 496.9 C482.3 495.4 483.8 493.0 486.4 491.3 C488.9 489.7 491.8 488.0 495.0 487.0 C498.2 486.0 502.4 485.9 505.8 485.6 C509.1 485.2 512.0 485.3 515.2 484.8 C518.4 484.3 521.9 483.0 525.2 482.5 C528.5 482.1 531.8 481.9 535.0 482.0 C538.2 482.1 541.5 482.9 544.5 483.0 C547.6 483.1 550.2 482.5 553.3 482.8 C556.3 483.0 559.7 484.2 562.9 484.3 C566.0 484.4 569.3 483.5 572.4 483.5 C575.4 483.6 578.3 484.2 581.2 484.5 C584.2 484.7 587.2 486.5 590.0 485.0 C592.8 483.5 595.4 479.1 597.8 475.8 C600.1 472.4 600.9 466.9 604.0 465.0 C607.1 463.1 612.3 464.6 616.5 464.1 C620.6 463.6 625.4 463.4 629.0 462.0 C632.6 460.6 635.2 457.5 637.9 455.7 C640.7 453.9 642.8 453.2 645.5 451.4 C648.2 449.6 651.3 447.1 654.0 445.0 C656.7 442.9 658.9 440.9 661.6 438.9 C664.3 436.9 667.4 434.8 670.2 432.8 C673.0 430.7 675.8 428.4 678.5 426.5 C681.1 424.5 683.6 423.0 686.2 421.1 C688.7 419.2 691.4 416.8 694.0 415.0 C696.6 413.2 698.9 412.0 701.9 410.5 C704.9 408.9 708.8 407.3 711.8 405.6 C714.8 403.8 717.1 401.8 720.0 400.0 C722.9 398.2 725.9 396.7 729.0 395.0 C732.1 393.4 735.2 391.9 738.4 390.4 C741.7 388.8 745.4 387.4 748.7 385.6 C751.9 383.9 756.4 380.9 758.0 380.0" fill="none" stroke="#E996A6" stroke-width="1.5" stroke-linejoin="round" stroke-linecap="round"/><path d="M382.0 555.0 C383.3 555.9 387.1 558.7 389.9 560.4 C392.7 562.2 395.8 563.4 398.6 565.4 C401.4 567.3 404.0 570.3 406.8 572.2 C409.5 574.2 412.4 575.4 415.0 577.0 C417.6 578.6 420.0 580.4 422.6 582.0 C425.2 583.7 428.0 585.2 430.5 586.9 C432.9 588.7 434.8 590.8 437.1 592.5 C439.5 594.3 441.8 596.0 444.5 597.6 C447.1 599.2 450.5 600.5 453.1 602.1 C455.7 603.6 457.5 605.4 460.0 607.0 C462.5 608.6 465.4 609.7 468.0 611.5 C470.6 613.3 472.8 616.0 475.5 617.8 C478.2 619.7 481.7 621.1 484.4 622.8 C487.0 624.5 488.8 626.5 491.4 628.2 C494.0 629.9 496.9 631.5 500.0 633.0 C503.1 634.5 507.1 635.9 510.3 637.1 C513.4 638.3 515.9 638.9 519.0 640.0 C522.1 641.1 525.7 642.4 528.9 643.6 C532.1 644.7 535.0 645.5 538.2 646.8 C541.4 648.0 544.7 649.5 548.0 651.0 C551.3 652.5 554.6 654.4 558.3 655.7 C561.9 657.1 567.5 656.9 570.0 659.0 C572.5 661.1 572.2 665.0 573.4 668.2 C574.6 671.5 575.8 675.4 577.2 678.6 C578.5 681.8 580.2 684.5 581.5 687.5 C582.7 690.5 583.8 693.6 584.9 696.6 C585.9 699.7 587.5 704.4 588.0 706.0" fill="none" stroke="#E996A6" stroke-width="1.5" stroke-linejoin="round" stroke-linecap="round"/><path d="M588.0 720.0 C589.0 721.2 592.4 724.8 594.2 727.3 C596.0 729.8 596.6 732.9 599.0 735.0 C601.4 737.1 605.4 738.1 608.3 739.8 C611.2 741.5 613.7 743.4 616.6 745.0 C619.4 746.7 622.6 748.2 625.5 749.9 C628.4 751.7 631.1 753.7 634.1 755.5 C637.0 757.4 640.1 759.6 643.0 761.0 C645.9 762.4 648.4 763.1 651.7 763.7 C654.9 764.3 659.2 764.2 662.5 764.8 C665.8 765.5 668.4 766.8 671.4 767.6 C674.4 768.5 677.4 769.2 680.5 769.9 C683.6 770.7 686.8 771.6 690.0 772.0 C693.2 772.4 696.4 772.2 699.4 772.5 C702.4 772.8 705.0 773.2 708.1 773.7 C711.3 774.1 715.1 774.9 718.3 775.2 C721.5 775.5 724.1 775.0 727.1 775.3 C730.1 775.6 733.5 776.6 736.5 776.9 C739.5 777.2 742.3 778.6 745.0 777.0 C747.7 775.4 750.5 770.6 752.9 767.5 C755.4 764.4 757.2 761.5 759.5 758.6 C761.9 755.6 764.4 752.0 767.0 750.0 C769.6 748.0 772.4 748.1 775.2 746.8 C777.9 745.5 780.8 743.7 783.5 742.2 C786.2 740.8 788.5 739.4 791.2 738.2 C794.0 737.0 797.1 736.2 800.0 735.0 C802.9 733.8 805.7 732.5 808.5 730.7 C811.3 728.9 814.1 726.1 816.6 724.2 C819.1 722.3 821.1 721.0 823.6 719.4 C826.2 717.8 829.2 716.1 831.9 714.5 C834.7 713.0 837.2 711.6 840.0 710.0 C842.8 708.4 845.6 706.6 848.5 704.9 C851.3 703.3 854.4 701.8 857.2 700.0 C860.0 698.2 862.6 696.0 865.5 694.3 C868.4 692.6 871.8 691.5 874.7 689.9 C877.6 688.3 880.4 686.4 883.1 684.7 C885.8 683.1 888.2 681.7 891.0 680.0 C893.8 678.3 896.8 676.9 900.0 674.8 C903.2 672.7 907.0 669.6 910.3 667.5 C913.7 665.3 917.2 664.4 920.0 662.0 C922.8 659.6 925.1 656.1 927.1 653.0 C929.1 649.9 930.1 646.7 932.0 643.4 C934.0 640.1 937.8 634.7 939.0 633.0" fill="none" stroke="#E996A6" stroke-width="1.5" stroke-linejoin="round" stroke-linecap="round"/><path d="M745.0 779.0 C745.0 780.5 744.9 784.7 744.8 787.8 C744.6 790.9 744.6 794.3 744.2 797.5 C743.8 800.7 743.0 803.9 742.6 806.9 C742.2 810.0 742.3 812.7 742.0 816.0 C741.7 819.3 741.0 823.1 740.8 826.8 C740.6 830.5 740.7 834.4 740.5 838.2 C740.4 842.1 740.3 846.3 740.0 850.0 C739.7 853.7 739.2 857.0 738.6 860.5 C738.0 864.0 737.1 867.4 736.5 871.0 C735.9 874.6 735.2 880.2 735.0 882.0" fill="none" stroke="#E996A6" stroke-width="1.5" stroke-linejoin="round" stroke-linecap="round"/><path d="M609.0 742.0 C608.2 743.0 603.7 745.2 604.0 748.0 C604.3 750.8 610.3 755.6 611.0 759.0 C611.7 762.4 609.3 765.3 608.5 768.3 C607.6 771.3 605.9 773.0 606.0 777.0 C606.1 781.0 608.7 787.9 609.0 792.0 C609.3 796.1 608.0 798.3 607.5 801.3 C607.1 804.4 606.9 807.5 606.3 810.4 C605.7 813.3 604.4 817.6 604.0 819.0" fill="none" stroke="#E996A6" stroke-width="1.5" stroke-linejoin="round" stroke-linecap="round"/><path d="M382.0 861.0 C383.4 861.3 387.2 862.6 390.2 863.1 C393.2 863.6 396.6 862.6 400.0 864.0 C403.4 865.4 407.0 868.6 410.4 871.2 C413.7 873.9 418.4 878.5 420.0 880.0" fill="none" stroke="#E996A6" stroke-width="1.5" stroke-linejoin="round" stroke-linecap="round"/><path d="M588.0 720.0 C585.5 721.3 576.6 725.4 573.0 728.0 C569.4 730.6 568.5 733.1 566.6 735.9 C564.6 738.6 563.2 741.7 561.3 744.6 C559.4 747.4 557.1 750.0 555.2 752.9 C553.3 755.9 551.9 759.5 549.8 762.3 C547.7 765.1 544.8 767.0 542.7 769.8 C540.5 772.6 539.5 777.1 537.0 779.0 C534.5 780.9 530.9 780.9 527.5 781.4 C524.2 781.9 520.0 781.3 516.7 781.9 C513.4 782.5 511.1 784.2 507.8 784.9 C504.5 785.6 500.5 786.4 497.0 786.0 C493.5 785.6 490.2 783.4 486.9 782.6 C483.7 781.8 480.8 782.1 477.4 781.3 C474.0 780.4 470.1 778.6 466.7 777.5 C463.3 776.5 460.2 775.7 457.0 775.0 C453.8 774.3 450.8 773.8 447.6 773.1 C444.4 772.3 441.1 771.4 437.7 770.5 C434.2 769.7 430.2 769.1 427.0 768.0 C423.8 766.9 421.2 765.6 418.6 764.2 C416.0 762.8 414.1 761.3 411.5 759.6 C408.9 757.9 405.5 755.8 402.7 754.2 C400.0 752.6 398.5 752.5 395.0 750.0 C391.5 747.5 384.2 740.8 382.0 739.0" fill="none" stroke="#E996A6" stroke-width="1.5" stroke-linejoin="round" stroke-linecap="round"/><path d="M758.0 380.0 C758.6 381.3 760.7 385.3 761.6 388.1 C762.5 390.8 762.4 393.5 763.4 396.5 C764.3 399.6 766.2 403.3 767.4 406.3 C768.6 409.3 769.8 411.8 770.8 414.6 C771.8 417.4 772.4 420.3 773.2 423.2 C774.1 426.0 775.0 428.7 776.0 431.5 C776.9 434.3 777.8 435.9 779.0 440.0 C780.2 444.1 783.1 452.0 783.0 456.0 C782.9 460.0 779.5 461.2 778.2 464.3 C776.9 467.3 776.4 471.3 775.2 474.5 C774.0 477.7 772.6 480.6 771.1 483.4 C769.7 486.2 767.9 488.5 766.3 491.5 C764.8 494.4 760.9 497.7 762.0 501.0 C763.1 504.3 770.6 507.8 773.0 511.0 C775.4 514.2 775.3 517.0 776.3 520.0 C777.2 523.1 778.1 526.5 778.9 529.4 C779.7 532.4 780.7 535.0 781.0 538.0 C781.3 541.0 780.8 544.2 780.7 547.2 C780.5 550.2 780.2 552.9 779.9 555.9 C779.6 558.9 779.3 561.9 778.9 565.0 C778.6 568.2 778.3 571.8 778.0 574.8 C777.7 577.8 777.9 580.0 777.0 583.0 C776.1 586.0 774.4 589.6 772.9 592.6 C771.3 595.6 769.3 598.1 767.7 601.1 C766.1 604.1 764.9 607.5 763.3 610.6 C761.7 613.8 759.2 616.3 758.0 620.0 C756.8 623.7 757.0 628.3 756.0 633.0 C755.0 637.7 751.5 644.1 752.0 648.0 C752.5 651.9 756.8 653.9 759.3 656.6 C761.8 659.3 764.5 661.7 767.0 664.3 C769.4 667.0 771.5 669.8 774.0 672.4 C776.5 675.0 780.3 676.9 782.0 680.0 C783.7 683.1 783.7 687.5 784.2 691.2 C784.7 694.8 783.5 699.3 785.0 702.0 C786.5 704.7 790.6 705.8 793.1 707.6 C795.6 709.4 799.1 710.3 800.0 713.0 C800.9 715.7 799.0 720.2 798.4 723.9 C797.7 727.6 797.7 732.1 796.0 735.0 C794.3 737.9 790.8 739.2 788.4 741.2 C786.1 743.1 784.2 745.0 781.7 746.7 C779.3 748.3 776.4 749.4 774.0 751.1 C771.5 752.8 768.2 756.0 767.0 757.0" fill="none" stroke="#E996A6" stroke-width="1.5" stroke-linejoin="round" stroke-linecap="round"/><path d="M945.0 440.0 C945.0 441.5 945.3 446.4 945.2 449.3 C945.2 452.1 944.9 454.3 944.8 457.4 C944.7 460.5 944.6 464.5 944.4 467.7 C944.3 470.8 944.1 473.4 943.9 476.3 C943.7 479.3 943.3 482.2 943.2 485.3 C943.2 488.4 943.5 492.1 943.5 495.1 C943.5 498.2 943.4 500.6 943.2 503.6 C943.0 506.6 942.7 510.2 942.5 513.1 C942.4 516.1 942.3 518.1 942.3 521.1 C942.2 524.1 942.4 527.8 942.4 530.9 C942.3 534.1 942.3 536.8 942.0 540.0 C941.7 543.2 941.1 546.8 940.5 550.2 C939.9 553.6 939.0 557.0 938.3 560.4 C937.5 563.9 936.6 567.7 936.0 571.0 C935.4 574.3 935.1 577.1 934.7 580.3 C934.2 583.6 933.7 587.1 933.3 590.5 C932.8 594.0 932.4 597.2 932.0 601.0 C931.6 604.8 931.2 609.0 930.8 613.1 C930.5 617.3 928.5 621.9 930.0 626.0 C931.5 630.1 936.8 634.3 940.0 638.0 C943.2 641.7 947.3 644.9 949.0 648.0 C950.7 651.1 950.0 653.8 950.3 656.8 C950.7 659.8 949.9 662.7 951.0 666.0 C952.1 669.3 954.8 672.9 956.8 676.4 C958.8 679.9 960.9 683.6 963.0 687.0 C965.1 690.4 967.2 693.5 969.2 696.8 C971.2 700.2 972.7 703.0 975.0 707.0 C977.3 711.0 979.7 718.2 983.0 721.0 C986.3 723.8 991.1 723.0 994.9 723.8 C998.7 724.7 1004.6 724.0 1006.0 726.0 C1007.4 728.0 1004.2 732.7 1003.4 735.8 C1002.7 738.9 1002.3 741.4 1001.5 744.6 C1000.8 747.8 999.4 753.3 999.0 755.0" fill="none" stroke="#E996A6" stroke-width="1.5" stroke-linejoin="round" stroke-linecap="round"/><path d="M938.0 642.0 C936.7 643.2 932.7 646.9 930.3 649.5 C927.8 652.0 925.5 654.7 923.2 657.5 C920.8 660.2 918.4 663.4 916.0 666.0 C913.6 668.6 911.2 670.4 908.9 672.9 C906.5 675.4 904.6 679.1 902.0 681.0 C899.4 682.9 896.4 683.1 893.5 684.1 C890.7 685.1 887.7 685.5 885.0 687.0 C882.3 688.5 880.0 690.9 877.4 692.8 C874.9 694.7 872.0 696.7 869.6 698.4 C867.2 700.1 865.8 701.8 863.0 703.0 C860.2 704.2 856.0 704.7 852.6 705.8 C849.1 706.9 845.6 708.3 842.2 709.5 C838.7 710.7 833.7 712.4 832.0 713.0" fill="none" stroke="#E996A6" stroke-width="1.5" stroke-linejoin="round" stroke-linecap="round"/><path d="M827.0 91.0 C828.6 92.2 833.3 95.8 836.3 98.5 C839.3 101.2 842.8 103.8 845.0 107.0 C847.2 110.2 847.7 114.1 849.4 117.8 C851.0 121.4 852.5 126.6 855.0 129.0 C857.5 131.4 861.2 130.8 864.2 131.9 C867.2 133.0 870.3 134.5 873.1 135.7 C876.0 136.8 878.4 137.9 881.3 138.9 C884.1 140.0 887.4 140.2 890.0 142.0 C892.6 143.8 894.5 147.1 896.8 149.7 C899.1 152.3 901.6 155.1 903.8 157.6 C906.0 160.2 907.7 162.7 910.0 165.0 C912.3 167.3 915.0 169.2 917.5 171.7 C920.0 174.2 923.0 177.3 925.0 180.0 C927.0 182.7 927.9 185.1 929.5 187.9 C931.2 190.7 932.1 194.7 935.0 197.0 C937.9 199.3 945.4 199.5 947.0 202.0 C948.6 204.5 945.6 208.7 944.6 211.7 C943.6 214.7 941.7 216.5 941.0 220.0 C940.3 223.5 940.5 228.7 940.3 232.9 C940.1 237.1 939.7 241.4 940.0 245.0 C940.3 248.6 941.4 251.6 942.3 254.8 C943.2 258.0 944.1 260.9 945.3 264.0 C946.5 267.1 948.1 270.4 949.2 273.4 C950.3 276.3 951.9 279.0 952.0 282.0 C952.1 285.0 951.0 288.2 950.1 291.3 C949.2 294.3 947.5 297.0 946.7 300.2 C945.8 303.3 945.2 306.7 945.0 310.0 C944.8 313.3 945.7 316.9 945.6 320.3 C945.4 323.7 944.3 327.1 944.2 330.4 C944.1 333.7 944.9 336.9 945.0 340.0 C945.1 343.1 944.7 345.8 945.1 349.2 C945.4 352.7 946.8 357.1 947.1 360.7 C947.5 364.2 946.9 367.3 947.0 370.5 C947.2 373.7 948.0 376.8 948.0 380.0 C948.0 383.2 947.1 386.2 947.0 389.5 C947.0 392.8 947.7 396.1 947.4 399.6 C947.2 403.2 946.1 407.1 945.8 410.6 C945.6 414.1 946.0 417.2 946.0 420.4 C946.1 423.7 946.3 427.0 946.1 430.2 C945.9 433.5 945.2 438.4 945.0 440.0" fill="none" stroke="#E996A6" stroke-width="1.5" stroke-linejoin="round" stroke-linecap="round"/><path d="M980.0 91.0 C980.2 92.9 981.0 98.5 981.2 102.5 C981.3 106.5 981.1 111.4 981.0 115.0 C980.9 118.6 980.7 121.2 980.5 124.3 C980.2 127.4 980.2 130.6 979.8 133.6 C979.3 136.5 978.4 139.0 977.9 142.1 C977.4 145.1 977.9 148.8 977.0 152.0 C976.1 155.2 973.9 158.3 972.6 161.0 C971.3 163.7 970.6 165.6 969.3 168.1 C968.0 170.7 966.3 173.5 964.7 176.3 C963.2 179.1 961.9 182.2 960.0 185.0 C958.1 187.8 955.8 190.5 953.6 193.3 C951.5 196.2 948.1 200.6 947.0 202.0" fill="none" stroke="#E996A6" stroke-width="1.5" stroke-linejoin="round" stroke-linecap="round"/><path d="M977.0 165.0 C978.2 166.1 981.8 169.4 984.4 171.8 C986.9 174.3 990.0 177.4 992.4 179.9 C994.8 182.4 996.4 186.1 999.0 187.0 C1001.6 187.9 1005.1 186.0 1007.9 185.2 C1010.7 184.4 1013.0 183.5 1015.8 182.5 C1018.7 181.5 1021.8 180.0 1024.8 179.1 C1027.8 178.2 1031.1 178.0 1034.0 177.0 C1036.9 176.0 1039.2 174.7 1042.0 173.4 C1044.9 172.1 1048.5 170.7 1051.4 169.3 C1054.2 167.9 1056.0 166.7 1059.0 165.0 C1062.0 163.3 1065.7 161.1 1069.2 159.4 C1072.7 157.7 1076.6 156.4 1080.0 155.0 C1083.4 153.6 1086.3 152.0 1089.7 150.8 C1093.0 149.6 1096.7 148.8 1100.0 147.5 C1103.3 146.3 1106.1 144.5 1109.4 143.3 C1112.7 142.0 1116.8 141.2 1120.0 140.0 C1123.2 138.8 1126.0 137.3 1128.6 135.9 C1131.2 134.6 1132.8 133.3 1135.4 131.8 C1137.9 130.2 1141.1 128.1 1143.9 126.6 C1146.8 125.1 1149.8 124.1 1152.5 122.7 C1155.2 121.3 1157.1 120.3 1160.0 118.0 C1162.9 115.7 1166.6 111.8 1169.9 108.8 C1173.2 105.8 1176.6 103.0 1180.0 100.0 C1183.4 97.0 1188.3 92.5 1190.0 91.0" fill="none" stroke="#E996A6" stroke-width="1.5" stroke-linejoin="round" stroke-linecap="round"/><path d="M999.0 190.0 C999.7 191.4 1001.4 195.6 1002.9 198.5 C1004.4 201.4 1006.4 204.7 1008.0 207.5 C1009.7 210.2 1011.3 212.6 1013.0 215.2 C1014.7 217.9 1016.6 220.5 1018.1 223.3 C1019.6 226.1 1022.3 228.9 1022.0 232.0 C1021.7 235.1 1018.2 238.5 1016.1 241.9 C1013.9 245.2 1010.8 248.7 1009.0 252.0 C1007.2 255.3 1006.5 258.7 1005.3 261.7 C1004.0 264.8 1002.8 267.4 1001.5 270.2 C1000.2 272.9 998.9 275.2 997.5 278.2 C996.1 281.3 994.3 285.4 992.9 288.6 C991.5 291.7 989.5 294.1 989.0 297.0 C988.5 299.9 989.6 303.0 989.6 305.9 C989.6 308.9 989.0 311.8 989.0 314.8 C988.9 317.7 989.2 320.3 989.5 323.4 C989.7 326.5 990.4 330.1 990.5 333.2 C990.6 336.3 987.4 340.9 990.0 342.0 C992.6 343.1 1001.5 340.9 1006.0 340.0 C1010.5 339.1 1013.4 337.5 1017.0 336.5 C1020.7 335.5 1023.8 334.1 1028.0 334.0 C1032.2 333.9 1038.2 335.9 1042.0 336.0 C1045.8 336.1 1047.7 335.2 1050.7 334.9 C1053.7 334.5 1056.0 335.6 1060.0 334.0 C1064.0 332.4 1072.5 326.5 1075.0 325.0" fill="none" stroke="#E996A6" stroke-width="1.5" stroke-linejoin="round" stroke-linecap="round"/><path d="M945.0 440.0 C945.8 438.7 948.4 434.8 950.0 432.3 C951.6 429.8 953.0 427.5 954.7 424.9 C956.4 422.3 958.7 419.4 960.4 416.8 C962.1 414.1 963.3 411.7 964.9 409.0 C966.6 406.3 968.8 403.4 970.4 400.7 C971.9 398.0 972.6 395.2 974.4 392.6 C976.1 389.9 979.0 387.5 980.8 384.9 C982.5 382.3 983.3 379.7 984.8 377.1 C986.3 374.4 987.1 370.8 990.0 369.0 C992.9 367.2 997.8 367.1 1001.9 366.2 C1006.1 365.4 1011.2 364.7 1015.0 364.0 C1018.8 363.3 1021.5 362.7 1024.4 362.3 C1027.4 361.9 1029.9 362.0 1032.8 361.4 C1035.7 360.9 1039.2 360.4 1042.0 359.0 C1044.8 357.6 1047.0 354.9 1049.5 352.9 C1052.0 350.9 1054.0 348.5 1057.0 347.0 C1060.0 345.5 1064.0 344.8 1067.8 343.7 C1071.7 342.5 1076.3 340.3 1080.0 340.0 C1083.7 339.7 1086.7 341.3 1090.0 342.2 C1093.3 343.0 1096.5 343.7 1100.0 345.0 C1103.5 346.3 1107.3 348.4 1110.7 350.2 C1114.0 352.0 1116.8 353.9 1120.1 355.6 C1123.3 357.2 1127.1 360.0 1130.0 360.0 C1132.9 360.0 1134.8 357.5 1137.3 355.8 C1139.9 354.1 1142.8 351.5 1145.3 349.8 C1147.8 348.1 1150.0 347.4 1152.4 345.7 C1154.9 344.1 1156.7 342.6 1160.0 340.0 C1163.3 337.4 1170.0 331.7 1172.0 330.0" fill="none" stroke="#E996A6" stroke-width="1.5" stroke-linejoin="round" stroke-linecap="round"/><path d="M945.0 440.0 C946.3 440.5 950.1 441.9 953.0 443.1 C955.9 444.2 959.2 445.6 962.4 446.9 C965.5 448.1 969.0 449.2 971.9 450.5 C974.8 451.9 977.0 453.7 980.0 455.0 C983.0 456.3 986.6 457.0 990.1 458.1 C993.5 459.1 997.2 460.0 1000.6 461.1 C1003.9 462.3 1006.8 464.0 1010.0 465.0 C1013.2 466.0 1016.4 466.4 1019.7 467.2 C1023.1 468.1 1027.1 468.8 1030.0 470.0 C1032.9 471.2 1034.6 472.6 1037.1 474.2 C1039.6 475.8 1042.3 477.7 1044.9 479.3 C1047.5 481.0 1050.1 482.5 1052.7 484.3 C1055.2 486.1 1057.6 487.8 1060.0 490.0 C1062.4 492.2 1064.6 495.0 1067.2 497.4 C1069.8 499.8 1073.2 501.8 1075.6 504.3 C1078.1 506.9 1079.5 510.4 1081.9 513.0 C1084.3 515.6 1087.8 517.4 1090.0 520.0 C1092.2 522.6 1093.2 526.1 1095.2 528.7 C1097.3 531.3 1099.9 533.0 1102.1 535.6 C1104.3 538.3 1106.6 541.6 1108.5 544.4 C1110.5 547.2 1111.8 549.9 1113.7 552.5 C1115.7 555.1 1119.0 558.7 1120.0 560.0" fill="none" stroke="#E996A6" stroke-width="1.5" stroke-linejoin="round" stroke-linecap="round"/><path d="M1030.0 470.0 C1028.9 471.3 1025.8 475.0 1023.2 477.6 C1020.7 480.2 1017.1 483.2 1014.5 485.7 C1011.8 488.3 1009.8 490.6 1007.4 493.0 C1005.0 495.3 1003.0 498.1 1000.0 500.0 C997.0 501.9 992.5 502.7 989.3 504.5 C986.0 506.2 984.1 508.8 980.7 510.5 C977.4 512.3 972.7 513.4 969.2 515.0 C965.8 516.5 963.2 518.0 960.0 520.0 C956.8 522.0 951.7 525.8 950.0 527.0" fill="none" stroke="#E996A6" stroke-width="1.5" stroke-linejoin="round" stroke-linecap="round"/><path d="M983.0 721.0 C985.0 721.3 991.3 722.2 995.1 723.1 C999.0 723.9 1002.0 724.3 1006.0 726.0 C1010.0 727.7 1015.2 731.9 1019.0 733.0 C1022.8 734.1 1025.8 732.7 1029.0 732.7 C1032.2 732.7 1034.6 732.4 1038.0 733.0 C1041.4 733.6 1045.7 735.1 1049.4 736.3 C1053.0 737.4 1056.3 739.2 1060.0 740.0 C1063.7 740.8 1067.8 740.9 1071.7 741.2 C1075.5 741.5 1079.7 741.6 1083.0 742.0 C1086.3 742.4 1088.5 743.0 1091.7 743.3 C1094.9 743.7 1098.8 744.3 1102.0 744.0 C1105.2 743.7 1107.7 742.1 1110.9 741.3 C1114.2 740.4 1118.2 739.7 1121.5 738.7 C1124.8 737.7 1127.8 736.4 1130.9 735.4 C1134.0 734.5 1136.8 734.1 1140.0 733.0 C1143.2 731.9 1146.7 730.1 1150.0 728.8 C1153.3 727.5 1156.6 726.2 1160.0 725.1 C1163.3 724.0 1166.9 723.3 1170.0 722.0 C1173.1 720.7 1176.0 718.7 1178.7 717.2 C1181.4 715.8 1183.6 714.6 1186.2 713.3 C1188.7 712.0 1191.2 710.8 1193.9 709.4 C1196.6 708.0 1199.5 706.4 1202.2 704.8 C1204.9 703.3 1207.1 701.5 1210.0 700.0 C1212.9 698.5 1216.3 697.2 1219.5 696.1 C1222.7 695.1 1225.9 694.8 1229.3 693.8 C1232.7 692.8 1236.5 691.6 1240.0 690.0 C1243.5 688.4 1246.8 686.0 1250.1 684.3 C1253.5 682.7 1256.6 681.6 1259.9 680.0 C1263.2 678.5 1266.6 676.9 1270.0 675.2 C1273.3 673.5 1277.4 672.2 1280.0 670.0 C1282.6 667.8 1284.0 664.7 1285.8 662.3 C1287.5 659.9 1288.6 657.9 1290.2 655.4 C1291.9 652.9 1293.9 650.0 1295.5 647.4 C1297.2 644.8 1298.0 642.3 1300.0 640.0 C1302.0 637.7 1305.0 635.6 1307.6 633.4 C1310.1 631.1 1312.7 628.9 1315.2 626.4 C1317.8 624.0 1320.1 621.0 1322.6 618.6 C1325.1 616.2 1327.0 613.3 1330.0 612.0 C1333.0 610.7 1336.9 611.4 1340.4 611.0 C1343.9 610.7 1347.4 610.2 1350.8 609.9 C1354.2 609.7 1357.5 609.7 1360.9 609.4 C1364.2 609.1 1367.5 608.4 1371.0 608.0 C1374.5 607.6 1378.1 607.4 1381.7 607.1 C1385.2 606.9 1388.6 606.7 1392.4 606.5 C1396.1 606.4 1400.6 605.2 1404.0 606.0 C1407.4 606.8 1409.6 609.6 1412.5 611.2 C1415.4 612.8 1418.4 614.1 1421.5 615.8 C1424.6 617.4 1427.7 619.1 1431.0 621.0 C1434.3 622.9 1437.8 625.3 1441.2 627.0 C1444.6 628.8 1447.9 630.0 1451.3 631.7 C1454.8 633.3 1460.2 636.1 1462.0 637.0" fill="none" stroke="#E996A6" stroke-width="1.5" stroke-linejoin="round" stroke-linecap="round"/><path d="M1022.0 758.0 C1023.5 759.2 1028.1 762.8 1031.1 765.1 C1034.1 767.5 1038.5 770.9 1040.0 772.0" fill="none" stroke="#E996A6" stroke-width="1.5" stroke-linejoin="round" stroke-linecap="round"/><path d="M845.0 703.0 C846.4 702.8 850.4 702.3 853.4 701.7 C856.5 701.1 860.4 699.8 863.4 699.4 C866.5 698.9 868.7 699.7 871.7 699.2 C874.8 698.8 878.3 697.2 881.5 696.7 C884.7 696.2 888.0 696.6 891.1 696.2 C894.2 695.7 897.1 693.6 900.0 694.0 C902.9 694.4 905.6 697.3 908.4 698.7 C911.3 700.2 914.2 701.6 917.2 702.7 C920.2 703.9 923.6 704.2 926.6 705.4 C929.5 706.6 931.6 709.3 935.0 710.0 C938.4 710.7 943.3 709.3 947.0 709.4 C950.7 709.4 953.3 710.0 957.0 710.1 C960.7 710.3 964.7 708.2 969.0 710.0 C973.3 711.8 980.7 719.2 983.0 721.0" fill="none" stroke="#E996A6" stroke-width="1.5" stroke-linejoin="round" stroke-linecap="round"/><path d="M1370.0 593.0 C1369.9 591.4 1369.7 586.5 1369.3 583.3 C1368.8 580.1 1367.9 577.0 1367.2 573.8 C1366.4 570.7 1365.4 567.7 1365.0 564.6 C1364.5 561.5 1364.8 558.4 1364.5 555.5 C1364.2 552.5 1363.6 550.1 1363.1 546.9 C1362.6 543.8 1362.0 539.7 1361.5 536.6 C1361.0 533.4 1359.5 531.1 1360.0 528.0 C1360.5 524.9 1362.7 521.3 1364.4 518.2 C1366.0 515.0 1368.5 512.1 1370.0 509.0 C1371.5 505.9 1372.0 503.1 1373.2 499.9 C1374.4 496.6 1376.1 492.7 1377.1 489.3 C1378.2 485.9 1378.5 482.6 1379.7 479.4 C1380.9 476.3 1383.0 473.6 1384.3 470.3 C1385.5 467.1 1386.0 463.4 1387.0 460.0 C1388.0 456.6 1389.0 453.0 1390.1 449.7 C1391.1 446.4 1392.3 443.6 1393.4 440.3 C1394.6 437.0 1396.4 431.7 1397.0 430.0" fill="none" stroke="#E996A6" stroke-width="1.5" stroke-linejoin="round" stroke-linecap="round"/><path d="M1240.0 499.0 C1241.7 498.0 1246.9 495.1 1250.1 493.1 C1253.4 491.1 1256.3 489.1 1259.6 486.9 C1262.9 484.8 1266.9 482.0 1270.0 480.0 C1273.1 478.0 1275.6 477.1 1278.1 475.2 C1280.7 473.3 1282.7 470.8 1285.2 468.7 C1287.7 466.7 1290.5 464.7 1293.0 462.9 C1295.5 461.1 1297.2 459.7 1300.0 458.0 C1302.8 456.3 1306.7 454.4 1310.1 452.9 C1313.5 451.4 1317.1 450.6 1320.5 449.1 C1323.9 447.6 1327.2 445.4 1330.5 443.9 C1333.7 442.4 1336.8 440.9 1340.0 440.0 C1343.2 439.1 1346.8 439.5 1349.9 438.8 C1352.9 438.1 1355.4 436.7 1358.4 436.0 C1361.4 435.3 1364.5 435.2 1367.8 434.6 C1371.1 434.1 1375.0 433.2 1378.4 432.7 C1381.8 432.2 1385.1 432.0 1388.2 431.5 C1391.3 431.1 1395.5 430.3 1397.0 430.0" fill="none" stroke="#E996A6" stroke-width="1.5" stroke-linejoin="round" stroke-linecap="round"/><path d="M1397.0 430.0 C1398.8 430.0 1404.0 430.0 1407.6 430.2 C1411.2 430.5 1415.0 431.5 1418.6 431.7 C1422.2 431.8 1425.6 431.0 1429.0 431.0 C1432.4 431.1 1435.5 431.8 1439.0 432.1 C1442.5 432.5 1446.5 432.7 1450.0 433.0 C1453.5 433.3 1456.9 433.7 1459.9 433.9 C1463.0 434.2 1465.6 434.4 1468.4 434.6 C1471.2 434.8 1473.8 435.2 1476.9 435.3 C1480.0 435.4 1483.8 435.1 1486.9 435.2 C1490.0 435.4 1492.6 435.9 1495.6 436.2 C1498.6 436.5 1501.6 436.6 1505.0 437.0 C1508.4 437.4 1512.5 438.0 1515.7 438.8 C1518.9 439.5 1520.9 440.8 1524.2 441.5 C1527.6 442.2 1532.1 442.2 1535.6 442.7 C1539.0 443.3 1541.7 444.2 1545.0 445.0 C1548.3 445.8 1552.2 446.9 1555.6 447.5 C1559.0 448.1 1562.0 448.3 1565.3 448.8 C1568.7 449.2 1572.4 449.8 1575.8 450.3 C1579.3 450.9 1582.7 452.2 1586.0 452.0 C1589.3 451.8 1592.3 450.0 1595.6 448.9 C1598.8 447.8 1602.6 446.6 1605.7 445.4 C1608.7 444.1 1611.0 443.0 1613.9 441.6 C1616.9 440.1 1620.2 438.2 1623.4 436.8 C1626.6 435.4 1629.7 434.1 1632.9 433.0 C1636.2 431.9 1639.9 430.0 1643.0 430.0 C1646.1 430.0 1648.8 431.8 1651.7 433.1 C1654.6 434.5 1657.5 436.9 1660.4 438.1 C1663.3 439.4 1666.2 439.4 1669.1 440.6 C1672.0 441.7 1674.7 444.4 1678.0 445.0 C1681.3 445.6 1685.4 444.4 1688.8 444.0 C1692.2 443.7 1695.0 443.1 1698.3 442.7 C1701.6 442.4 1705.1 442.5 1708.8 442.1 C1712.5 441.7 1716.7 440.8 1720.3 440.5 C1723.8 440.1 1727.1 441.0 1730.0 440.0 C1732.9 439.0 1734.9 436.2 1737.4 434.6 C1739.9 433.1 1742.8 432.3 1745.2 430.6 C1747.7 428.9 1749.6 426.2 1752.0 424.4 C1754.5 422.7 1757.4 421.6 1760.0 420.0 C1762.6 418.4 1765.1 416.7 1767.7 415.1 C1770.4 413.4 1773.3 411.9 1775.9 410.2 C1778.6 408.5 1781.0 406.7 1783.6 405.0 C1786.2 403.4 1788.7 401.8 1791.4 400.1 C1794.2 398.5 1797.0 396.4 1800.0 395.0 C1803.0 393.6 1806.3 393.1 1809.7 391.7 C1813.0 390.4 1816.6 388.2 1820.0 386.8 C1823.4 385.4 1826.9 384.6 1830.2 383.5 C1833.5 382.3 1837.0 381.7 1840.0 380.0 C1843.0 378.3 1845.2 375.4 1847.9 373.3 C1850.7 371.3 1853.7 369.5 1856.3 367.6 C1858.8 365.7 1860.7 363.9 1863.3 361.9 C1865.8 360.0 1868.7 357.9 1871.5 356.0 C1874.3 354.0 1876.9 351.3 1880.0 350.0 C1883.1 348.7 1886.7 348.5 1890.2 347.9 C1893.6 347.2 1897.1 346.6 1900.7 346.2 C1904.4 345.7 1910.1 345.2 1912.0 345.0" fill="none" stroke="#E996A6" stroke-width="1.5" stroke-linejoin="round" stroke-linecap="round"/><path d="M1397.0 430.0 C1397.7 431.4 1399.9 435.8 1401.3 438.4 C1402.7 441.0 1404.0 443.0 1405.5 445.7 C1407.1 448.4 1409.0 451.9 1410.6 454.6 C1412.2 457.4 1413.6 459.6 1415.2 462.2 C1416.7 464.7 1418.0 467.5 1420.0 470.0 C1422.0 472.5 1424.3 474.5 1426.9 477.0 C1429.4 479.5 1432.7 482.5 1435.3 485.1 C1438.0 487.7 1440.4 489.9 1442.9 492.4 C1445.3 494.9 1447.1 498.0 1450.0 500.0 C1452.9 502.0 1456.7 503.0 1460.0 504.5 C1463.2 506.1 1466.3 507.5 1469.6 509.3 C1472.8 511.0 1476.1 513.1 1479.5 514.9 C1482.9 516.7 1487.1 518.0 1490.0 520.0 C1492.9 522.0 1494.8 524.8 1497.1 527.1 C1499.5 529.5 1501.9 531.9 1504.2 534.0 C1506.6 536.1 1509.1 537.3 1511.4 539.5 C1513.7 541.6 1515.0 545.5 1518.0 547.0 C1521.0 548.5 1525.7 548.2 1529.3 548.7 C1532.8 549.1 1535.8 549.1 1539.2 549.7 C1542.7 550.2 1546.6 551.0 1550.0 552.0 C1553.4 553.0 1556.2 554.2 1559.4 555.8 C1562.7 557.4 1566.0 559.8 1569.3 561.5 C1572.7 563.1 1576.4 564.5 1579.8 565.9 C1583.2 567.4 1586.9 568.0 1590.0 570.0 C1593.1 572.0 1595.9 575.3 1598.3 577.7 C1600.7 580.1 1602.0 582.0 1604.5 584.5 C1607.0 586.9 1610.7 589.9 1613.2 592.5 C1615.8 595.1 1618.9 598.7 1620.0 600.0" fill="none" stroke="#E996A6" stroke-width="1.5" stroke-linejoin="round" stroke-linecap="round"/><path d="M1240.0 499.0 C1240.8 501.5 1242.6 511.2 1245.0 514.0 C1247.4 516.8 1251.3 514.9 1254.7 515.7 C1258.0 516.4 1262.0 517.5 1265.2 518.2 C1268.5 519.0 1270.8 519.4 1274.1 520.0 C1277.4 520.5 1281.6 521.2 1284.9 521.7 C1288.3 522.2 1290.8 522.7 1294.0 523.0 C1297.2 523.3 1300.6 523.4 1304.2 523.3 C1307.8 523.2 1311.9 522.8 1315.6 522.5 C1319.3 522.2 1322.7 521.9 1326.5 521.6 C1330.2 521.4 1334.3 521.7 1338.0 521.0 C1341.7 520.3 1344.9 518.5 1348.5 517.3 C1352.1 516.1 1356.2 514.9 1359.8 513.6 C1363.3 512.2 1366.5 510.2 1370.0 509.0 C1373.5 507.8 1377.3 507.6 1380.8 506.6 C1384.2 505.6 1387.3 504.1 1390.7 503.1 C1394.1 502.0 1397.8 501.2 1401.2 500.2 C1404.6 499.2 1407.7 497.4 1411.0 497.0 C1414.3 496.6 1417.7 497.4 1421.0 497.8 C1424.3 498.2 1427.7 499.2 1430.7 499.6 C1433.7 500.1 1436.0 500.2 1439.0 500.5 C1442.1 500.7 1447.3 500.9 1449.0 501.0" fill="none" stroke="#E996A6" stroke-width="1.5" stroke-linejoin="round" stroke-linecap="round"/><path d="M1349.0 593.0 C1348.8 591.3 1348.1 586.1 1347.8 582.8 C1347.5 579.5 1347.5 576.5 1347.0 573.1 C1346.6 569.7 1345.6 565.9 1345.1 562.5 C1344.7 559.0 1344.8 555.9 1344.4 552.5 C1344.0 549.1 1343.6 545.3 1343.0 542.0 C1342.4 538.7 1341.8 536.0 1341.0 532.9 C1340.2 529.8 1339.2 526.6 1338.1 523.3 C1337.0 520.0 1335.4 516.4 1334.4 513.2 C1333.4 509.9 1332.9 507.4 1332.0 504.0 C1331.1 500.6 1330.0 496.7 1329.2 493.0 C1328.5 489.3 1328.1 485.5 1327.5 481.7 C1326.8 477.9 1326.0 473.8 1325.4 470.2 C1324.9 466.6 1324.2 461.7 1324.0 460.0" fill="none" stroke="#E996A6" stroke-width="1.5" stroke-linejoin="round" stroke-linecap="round"/><path d="M1449.0 501.0 C1450.4 501.6 1454.3 503.1 1457.2 504.5 C1460.1 506.0 1463.5 508.2 1466.3 509.7 C1469.1 511.2 1471.6 512.2 1474.1 513.5 C1476.6 514.8 1478.7 516.2 1481.2 517.4 C1483.8 518.6 1486.8 519.6 1489.6 520.8 C1492.5 522.0 1495.6 523.2 1498.5 524.6 C1501.4 525.9 1504.1 527.5 1506.8 528.9 C1509.6 530.3 1513.6 532.3 1515.0 533.0" fill="none" stroke="#E996A6" stroke-width="1.5" stroke-linejoin="round" stroke-linecap="round"/><path d="M1512.0 523.0 C1511.1 524.3 1508.4 528.3 1506.4 530.9 C1504.5 533.4 1502.4 535.9 1500.5 538.3 C1498.6 540.7 1497.0 542.8 1495.0 545.4 C1493.0 548.0 1490.4 551.1 1488.3 553.8 C1486.2 556.5 1484.2 559.0 1482.3 561.6 C1480.4 564.1 1478.7 565.8 1477.0 569.0 C1475.3 572.2 1473.8 576.9 1472.3 580.5 C1470.8 584.2 1468.3 587.4 1468.0 591.0 C1467.7 594.6 1469.5 598.7 1470.6 602.2 C1471.8 605.7 1473.6 608.5 1474.7 612.0 C1475.8 615.4 1477.1 618.8 1477.0 623.0 C1476.9 627.2 1474.5 634.7 1474.0 637.0" fill="none" stroke="#E996A6" stroke-width="1.5" stroke-linejoin="round" stroke-linecap="round"/><path d="M1245.0 514.0 C1245.2 515.5 1245.8 520.1 1246.1 523.2 C1246.4 526.4 1246.6 529.9 1246.9 532.8 C1247.2 535.8 1247.5 538.1 1247.9 541.0 C1248.3 543.9 1248.9 546.9 1249.2 550.1 C1249.6 553.2 1249.3 556.2 1250.0 560.0 C1250.7 563.8 1252.5 568.7 1253.3 572.8 C1254.1 577.0 1256.4 582.8 1255.0 585.0 C1253.6 587.2 1247.7 585.5 1244.6 586.2 C1241.5 586.8 1239.5 588.2 1236.4 588.8 C1233.3 589.4 1227.7 589.8 1226.0 590.0" fill="none" stroke="#E996A6" stroke-width="1.5" stroke-linejoin="round" stroke-linecap="round"/><path d="M1240.0 499.0 C1238.2 498.6 1232.5 497.4 1229.3 496.6 C1226.1 495.8 1224.0 494.7 1220.8 494.1 C1217.5 493.4 1213.2 493.4 1209.8 492.8 C1206.3 492.1 1203.0 492.1 1200.0 490.0 C1197.0 487.9 1194.6 483.4 1191.6 480.0 C1188.6 476.7 1183.6 471.7 1182.0 470.0" fill="none" stroke="#E996A6" stroke-width="1.5" stroke-linejoin="round" stroke-linecap="round"/><path d="M1245.0 514.0 C1245.0 515.5 1244.8 520.1 1245.0 523.1 C1245.2 526.1 1246.0 528.9 1246.3 531.9 C1246.7 534.9 1247.1 538.0 1247.1 541.1 C1247.1 544.2 1246.4 547.4 1246.4 550.6 C1246.5 553.8 1247.0 557.1 1247.2 560.2 C1247.5 563.3 1246.8 565.4 1248.0 569.0 C1249.2 572.6 1252.4 577.7 1254.2 581.7 C1256.0 585.7 1256.6 590.7 1259.0 593.0 C1261.4 595.3 1265.2 594.7 1268.3 595.6 C1271.4 596.5 1274.7 597.5 1277.6 598.4 C1280.6 599.3 1283.2 600.3 1286.0 601.0 C1288.8 601.7 1291.1 602.2 1294.2 602.8 C1297.2 603.4 1301.1 603.9 1304.1 604.7 C1307.2 605.5 1309.7 606.7 1312.5 607.5 C1315.3 608.4 1319.6 609.6 1321.0 610.0" fill="none" stroke="#E996A6" stroke-width="1.5" stroke-linejoin="round" stroke-linecap="round"/><path d="M1240.0 499.0 C1240.4 497.4 1241.4 492.8 1242.5 489.6 C1243.7 486.5 1245.5 483.6 1246.7 480.3 C1248.0 477.0 1248.9 473.3 1250.0 470.0 C1251.1 466.7 1252.3 463.6 1253.2 460.3 C1254.1 456.9 1254.7 453.3 1255.4 450.1 C1256.1 446.8 1256.8 444.0 1257.5 440.6 C1258.3 437.3 1260.8 433.1 1260.0 430.0 C1259.2 426.9 1255.3 424.9 1252.9 422.3 C1250.5 419.7 1248.2 416.8 1245.7 414.4 C1243.2 412.1 1240.6 410.5 1238.0 408.1 C1235.4 405.7 1233.5 402.2 1230.0 400.0 C1226.5 397.8 1221.3 396.2 1217.1 394.6 C1213.0 392.9 1209.2 391.6 1205.0 390.0 C1200.8 388.4 1196.3 386.7 1192.2 385.0 C1188.0 383.3 1182.0 380.8 1180.0 380.0" fill="none" stroke="#E996A6" stroke-width="1.5" stroke-linejoin="round" stroke-linecap="round"/><path d="M1586.0 452.0 C1586.2 450.2 1587.0 444.4 1587.2 441.0 C1587.4 437.5 1587.2 434.6 1587.2 431.3 C1587.3 428.0 1587.5 424.7 1587.7 421.2 C1587.9 417.6 1588.0 413.4 1588.4 409.9 C1588.8 406.4 1589.4 403.2 1590.0 400.0 C1590.6 396.8 1591.5 393.9 1592.0 390.7 C1592.5 387.6 1592.5 384.5 1593.2 381.1 C1593.8 377.7 1595.1 373.4 1595.6 370.1 C1596.1 366.8 1595.7 364.3 1596.2 361.2 C1596.7 358.1 1598.0 354.9 1598.6 351.5 C1599.3 348.1 1598.9 343.9 1600.0 341.0 C1601.1 338.1 1603.1 336.4 1605.0 334.1 C1606.8 331.7 1609.2 329.3 1611.2 327.0 C1613.2 324.6 1615.4 322.6 1617.0 320.0 C1618.6 317.4 1619.7 314.2 1620.7 311.3 C1621.7 308.3 1622.0 305.6 1623.1 302.6 C1624.2 299.5 1625.0 296.2 1627.0 293.0 C1629.0 289.8 1632.6 286.7 1635.3 283.4 C1637.9 280.1 1641.1 276.1 1643.0 273.0 C1644.9 269.9 1645.2 267.4 1646.5 264.6 C1647.7 261.8 1649.3 259.1 1650.4 256.2 C1651.5 253.2 1653.7 249.8 1653.0 247.0 C1652.3 244.2 1648.4 242.0 1646.0 239.5 C1643.6 237.1 1640.9 234.7 1638.6 232.4 C1636.3 230.2 1631.3 228.9 1632.0 226.0 C1632.7 223.1 1641.8 218.4 1643.0 215.0 C1644.2 211.6 1640.6 208.6 1639.4 205.7 C1638.1 202.7 1636.9 199.9 1635.7 197.1 C1634.4 194.3 1632.9 192.3 1632.0 189.0 C1631.1 185.7 1630.9 181.1 1630.0 177.3 C1629.2 173.5 1627.5 167.9 1627.0 166.0" fill="none" stroke="#E996A6" stroke-width="1.5" stroke-linejoin="round" stroke-linecap="round"/><path d="M1549.0 176.0 C1550.6 175.4 1555.2 173.6 1558.4 172.6 C1561.5 171.6 1565.0 170.9 1568.1 170.2 C1571.2 169.4 1573.8 168.6 1577.0 168.0 C1580.2 167.4 1584.0 166.9 1587.3 166.8 C1590.6 166.7 1593.3 167.2 1596.6 167.3 C1600.0 167.4 1603.9 167.7 1607.3 167.4 C1610.7 167.2 1613.6 166.3 1616.9 166.0 C1620.1 165.8 1624.0 166.6 1627.0 166.0 C1630.0 165.4 1632.2 163.8 1635.0 162.4 C1637.8 161.0 1641.1 158.9 1644.0 157.5 C1646.9 156.1 1649.5 155.0 1652.1 153.8 C1654.8 152.5 1658.7 150.6 1660.0 150.0" fill="none" stroke="#E996A6" stroke-width="1.5" stroke-linejoin="round" stroke-linecap="round"/><path d="M1601.0 257.0 C1601.9 258.8 1604.5 264.2 1606.1 267.6 C1607.8 271.1 1609.3 274.2 1611.0 277.6 C1612.6 281.0 1615.6 284.7 1616.0 288.0 C1616.4 291.3 1614.0 294.5 1613.1 297.4 C1612.1 300.2 1611.2 302.2 1610.3 305.0 C1609.4 307.9 1608.2 311.5 1607.5 314.6 C1606.7 317.7 1606.8 320.5 1605.9 323.4 C1605.0 326.3 1602.9 328.8 1601.9 331.8 C1600.9 334.7 1600.3 339.5 1600.0 341.0" fill="none" stroke="#E996A6" stroke-width="1.5" stroke-linejoin="round" stroke-linecap="round"/><path d="M1080.0 315.0 C1081.5 314.2 1086.3 312.0 1089.0 310.1 C1091.6 308.2 1093.3 305.4 1095.9 303.6 C1098.5 301.7 1101.7 300.6 1104.6 298.9 C1107.5 297.1 1110.4 295.0 1113.3 293.1 C1116.2 291.2 1119.3 289.5 1122.1 287.6 C1124.9 285.8 1126.9 284.0 1130.0 282.0 C1133.1 280.0 1137.2 277.5 1140.5 275.7 C1143.9 273.9 1146.9 273.2 1150.2 271.4 C1153.4 269.6 1157.1 267.2 1160.0 265.0 C1162.9 262.8 1165.1 260.1 1167.7 258.1 C1170.3 256.2 1173.2 255.2 1175.6 253.3 C1178.0 251.3 1179.8 248.4 1182.2 246.2 C1184.6 244.0 1187.6 242.6 1190.0 240.0 C1192.4 237.4 1194.2 233.6 1196.4 230.6 C1198.6 227.6 1201.1 225.0 1203.2 222.2 C1205.3 219.4 1206.9 216.8 1209.0 214.0 C1211.2 211.1 1213.3 207.0 1216.0 205.0 C1218.7 203.0 1222.4 203.1 1225.4 202.2 C1228.4 201.2 1231.2 200.2 1234.0 199.3 C1236.9 198.4 1239.5 197.8 1242.4 196.7 C1245.4 195.7 1248.7 194.2 1251.6 193.1 C1254.6 192.0 1257.0 191.4 1260.0 190.0 C1263.0 188.6 1266.3 186.2 1269.8 184.6 C1273.2 183.0 1277.4 182.1 1280.7 180.3 C1284.0 178.6 1286.5 176.1 1289.8 174.4 C1293.0 172.7 1296.7 171.3 1300.0 170.0 C1303.3 168.7 1306.6 167.6 1309.7 166.7 C1312.8 165.7 1315.5 165.3 1318.7 164.6 C1321.9 163.8 1326.0 163.1 1329.0 162.0 C1332.0 160.9 1333.8 159.5 1336.4 158.1 C1339.1 156.8 1342.0 155.6 1344.9 153.9 C1347.7 152.2 1350.8 149.7 1353.7 148.0 C1356.6 146.3 1359.4 145.0 1362.1 143.7 C1364.8 142.3 1367.1 140.9 1370.0 140.0 C1372.9 139.1 1375.9 138.6 1379.2 138.0 C1382.6 137.3 1386.5 136.8 1390.0 136.1 C1393.6 135.3 1397.1 134.1 1400.5 133.5 C1403.8 132.9 1406.7 133.1 1409.9 132.5 C1413.2 131.9 1416.5 130.1 1420.0 130.0 C1423.5 129.9 1427.3 131.3 1430.7 132.1 C1434.0 132.9 1436.9 134.0 1440.0 134.7 C1443.1 135.5 1445.8 135.9 1449.2 136.4 C1452.6 136.8 1457.0 137.0 1460.5 137.6 C1464.0 138.2 1468.4 139.6 1470.0 140.0" fill="none" stroke="#E996A6" stroke-width="1.5" stroke-linejoin="round" stroke-linecap="round"/><path d="M1230.0 121.0 C1230.0 122.6 1229.8 127.3 1229.9 130.6 C1230.0 133.9 1230.7 137.5 1230.7 140.7 C1230.7 143.9 1230.6 146.9 1230.0 150.0 C1229.4 153.1 1228.3 156.0 1227.2 159.3 C1226.0 162.7 1224.4 166.7 1223.2 170.1 C1222.0 173.6 1220.9 176.4 1220.0 180.0 C1219.1 183.6 1218.6 187.7 1217.9 191.9 C1217.3 196.1 1216.3 202.8 1216.0 205.0" fill="none" stroke="#E996A6" stroke-width="1.5" stroke-linejoin="round" stroke-linecap="round"/><path d="M1230.0 121.0 C1231.8 121.9 1237.1 124.8 1240.6 126.2 C1244.0 127.7 1247.6 128.2 1250.7 129.7 C1253.8 131.2 1256.0 133.2 1259.2 135.0 C1262.5 136.7 1266.5 138.6 1270.0 140.0 C1273.5 141.4 1277.0 142.4 1280.5 143.6 C1283.9 144.9 1287.4 146.2 1290.7 147.3 C1293.9 148.4 1296.8 148.9 1300.0 150.0 C1303.2 151.1 1306.5 152.6 1309.6 154.0 C1312.7 155.4 1315.5 157.2 1318.7 158.5 C1321.9 159.9 1327.3 161.4 1329.0 162.0" fill="none" stroke="#E996A6" stroke-width="1.5" stroke-linejoin="round" stroke-linecap="round"/><path d="M1160.0 300.0 C1161.2 300.9 1164.3 303.6 1166.9 305.2 C1169.5 306.7 1172.8 307.6 1175.4 309.3 C1178.1 311.0 1180.2 313.9 1182.6 315.6 C1185.0 317.4 1187.1 319.0 1190.0 320.0 C1192.9 321.0 1196.3 321.0 1199.8 321.8 C1203.2 322.6 1207.3 323.9 1210.8 324.9 C1214.2 325.9 1217.3 327.0 1220.5 327.8 C1223.7 328.7 1226.8 329.5 1230.0 330.0 C1233.2 330.5 1236.4 330.9 1239.9 330.8 C1243.3 330.7 1247.3 329.4 1250.7 329.3 C1254.1 329.2 1258.5 329.9 1260.0 330.0" fill="none" stroke="#E996A6" stroke-width="1.5" stroke-linejoin="round" stroke-linecap="round"/><path d="M1329.0 162.0 C1330.2 162.8 1333.9 165.1 1336.5 166.9 C1339.0 168.7 1341.9 170.8 1344.3 172.8 C1346.7 174.7 1348.4 176.6 1350.8 178.5 C1353.1 180.4 1356.0 182.5 1358.5 184.2 C1361.1 185.9 1363.5 187.1 1366.0 188.8 C1368.4 190.6 1370.9 193.1 1373.3 194.9 C1375.6 196.8 1377.6 198.3 1380.0 200.0 C1382.4 201.7 1385.3 203.4 1387.9 205.3 C1390.6 207.3 1393.2 209.6 1395.9 211.8 C1398.5 213.9 1401.1 216.2 1403.7 218.2 C1406.3 220.2 1408.8 221.6 1411.5 223.6 C1414.2 225.5 1418.7 227.2 1420.0 230.0 C1421.3 232.8 1419.2 237.0 1419.3 240.4 C1419.4 243.9 1420.3 247.5 1420.4 250.7 C1420.6 253.9 1420.2 256.4 1420.0 259.7 C1419.9 263.0 1419.6 267.0 1419.6 270.4 C1419.6 273.8 1420.8 276.6 1420.0 280.0 C1419.2 283.4 1416.1 287.2 1414.5 290.5 C1412.9 293.8 1411.9 296.6 1410.4 299.8 C1408.9 303.1 1407.1 306.7 1405.4 310.0 C1403.6 313.4 1401.4 316.7 1400.0 320.0 C1398.6 323.3 1398.1 326.6 1397.2 329.9 C1396.4 333.1 1395.7 336.0 1394.9 339.3 C1394.1 342.7 1393.3 346.7 1392.4 350.2 C1391.6 353.6 1390.6 356.7 1390.0 360.1 C1389.4 363.5 1389.5 367.4 1388.8 370.7 C1388.2 374.0 1386.5 378.4 1386.0 380.0" fill="none" stroke="#E996A6" stroke-width="1.5" stroke-linejoin="round" stroke-linecap="round"/><path d="M1329.0 162.0 C1329.3 163.6 1329.9 168.8 1330.7 171.9 C1331.4 175.0 1332.7 177.3 1333.4 180.6 C1334.1 183.9 1334.4 188.5 1334.8 191.8 C1335.2 195.0 1335.4 197.1 1336.0 200.0 C1336.6 203.0 1337.5 206.3 1338.2 209.7 C1338.8 213.0 1339.5 216.5 1340.0 220.0 C1340.5 223.5 1340.7 227.1 1341.3 230.5 C1341.9 233.9 1343.0 237.1 1343.6 240.3 C1344.2 243.5 1344.5 246.6 1344.9 249.9 C1345.2 253.1 1345.3 256.5 1345.9 259.7 C1346.5 263.0 1348.0 265.9 1348.6 269.2 C1349.3 272.6 1349.5 276.6 1350.0 280.0 C1350.5 283.4 1351.3 286.7 1351.7 289.7 C1352.1 292.7 1352.2 295.1 1352.5 298.1 C1352.9 301.1 1353.1 304.8 1353.6 307.8 C1354.1 310.8 1355.2 313.0 1355.6 315.9 C1356.0 318.8 1355.4 321.9 1356.0 325.0 C1356.6 328.1 1358.2 331.6 1359.4 334.4 C1360.5 337.2 1361.8 339.0 1362.9 341.9 C1364.1 344.8 1365.4 348.8 1366.5 351.9 C1367.7 354.9 1368.1 357.0 1370.0 360.0 C1371.9 363.0 1375.4 366.4 1378.1 369.7 C1380.7 373.0 1384.3 376.6 1386.0 380.0 C1387.7 383.4 1387.9 386.7 1388.5 390.1 C1389.2 393.5 1389.3 396.8 1390.0 400.2 C1390.7 403.7 1392.0 407.4 1392.9 410.7 C1393.8 413.9 1394.5 416.4 1395.2 419.6 C1395.9 422.9 1396.7 428.3 1397.0 430.0" fill="none" stroke="#E996A6" stroke-width="1.5" stroke-linejoin="round" stroke-linecap="round"/><path d="M1820.0 380.0 C1820.6 378.3 1822.1 373.1 1823.3 369.6 C1824.6 366.2 1825.9 362.5 1827.4 359.3 C1829.0 356.0 1831.1 353.5 1832.5 350.1 C1833.9 346.8 1834.6 342.7 1835.8 339.3 C1837.1 335.9 1838.9 333.3 1840.0 330.0 C1841.1 326.7 1841.9 322.9 1842.5 319.5 C1843.1 316.1 1842.9 313.1 1843.4 309.8 C1843.9 306.5 1844.7 303.0 1845.5 299.8 C1846.2 296.7 1847.2 294.1 1848.0 290.8 C1848.7 287.5 1848.8 283.4 1850.0 280.0 C1851.2 276.6 1853.3 273.6 1854.9 270.2 C1856.4 266.8 1857.8 262.9 1859.4 259.7 C1861.1 256.4 1863.0 254.0 1864.8 250.8 C1866.5 247.5 1869.1 241.8 1870.0 240.0" fill="none" stroke="#E996A6" stroke-width="1.5" stroke-linejoin="round" stroke-linecap="round"/><path d="M1516.0 703.0 C1517.1 701.8 1520.8 698.6 1522.8 696.1 C1524.8 693.5 1526.1 690.3 1528.1 687.5 C1530.1 684.8 1532.8 682.2 1534.8 679.7 C1536.9 677.3 1538.4 675.5 1540.5 673.1 C1542.5 670.7 1544.8 668.1 1547.2 665.5 C1549.5 662.9 1552.3 660.1 1554.4 657.5 C1556.5 654.9 1558.0 652.6 1560.0 650.0 C1562.0 647.4 1564.1 644.6 1566.1 642.1 C1568.1 639.7 1570.0 637.4 1571.9 635.1 C1573.9 632.9 1575.7 630.8 1577.7 628.6 C1579.6 626.3 1581.8 624.2 1583.6 621.7 C1585.4 619.2 1586.9 616.0 1588.5 613.7 C1590.2 611.3 1591.7 609.9 1593.6 607.6 C1595.5 605.3 1598.1 603.0 1600.0 600.0 C1601.9 597.0 1603.5 592.8 1605.1 589.5 C1606.7 586.2 1608.0 583.4 1609.6 580.2 C1611.3 577.0 1613.3 573.4 1615.0 570.1 C1616.7 566.7 1619.2 561.7 1620.0 560.0" fill="none" stroke="#E996A6" stroke-width="1.5" stroke-linejoin="round" stroke-linecap="round"/><path d="M1700.0 190.0 C1701.6 189.9 1706.3 189.9 1709.4 189.6 C1712.6 189.4 1716.0 188.7 1718.9 188.4 C1721.8 188.1 1723.8 188.3 1726.8 188.0 C1729.8 187.7 1733.9 186.9 1737.0 186.5 C1740.1 186.1 1742.5 185.8 1745.4 185.6 C1748.3 185.3 1751.4 185.3 1754.5 185.0 C1757.6 184.8 1760.9 184.3 1764.0 183.9 C1767.1 183.5 1770.0 183.2 1772.9 182.8 C1775.7 182.4 1778.3 181.7 1781.2 181.5 C1784.2 181.3 1787.3 181.7 1790.4 181.5 C1793.5 181.2 1796.9 180.3 1800.0 180.0 C1803.1 179.7 1805.8 179.6 1808.8 179.5 C1811.9 179.3 1815.3 179.1 1818.4 179.1 C1821.5 179.0 1824.6 179.2 1827.7 179.1 C1830.7 179.1 1833.5 178.8 1836.8 178.7 C1840.1 178.5 1844.3 178.5 1847.5 178.2 C1850.6 177.9 1852.5 177.0 1855.6 176.9 C1858.6 176.7 1862.6 177.1 1865.8 177.1 C1869.0 177.0 1871.6 176.6 1874.7 176.5 C1877.8 176.4 1881.2 176.9 1884.3 176.7 C1887.4 176.5 1890.2 175.4 1893.3 175.3 C1896.5 175.3 1900.0 176.2 1903.1 176.2 C1906.2 176.1 1910.5 175.2 1912.0 175.0" fill="none" stroke="#E996A6" stroke-width="1.5" stroke-linejoin="round" stroke-linecap="round"/><path d="M1713.0 844.0 C1714.2 846.7 1717.8 856.1 1720.0 860.0 C1722.2 863.9 1724.6 864.6 1726.4 867.2 C1728.2 869.7 1729.0 872.9 1730.8 875.4 C1732.5 877.9 1736.0 880.9 1737.0 882.0" fill="none" stroke="#E996A6" stroke-width="1.5" stroke-linejoin="round" stroke-linecap="round"/><path d="M1770.0 882.0 C1771.4 880.5 1775.8 875.7 1778.3 872.8 C1780.8 870.0 1782.6 867.0 1785.0 865.0 C1787.4 863.0 1790.1 862.2 1792.9 860.6 C1795.8 858.9 1799.5 856.9 1802.3 855.1 C1805.1 853.3 1807.0 851.3 1810.0 850.0 C1813.0 848.7 1816.8 848.5 1820.2 847.5 C1823.5 846.5 1828.4 844.6 1830.0 844.0" fill="none" stroke="#E996A6" stroke-width="1.5" stroke-linejoin="round" stroke-linecap="round"/><path d="M1893.0 844.0 C1893.9 845.6 1896.5 850.7 1898.5 853.7 C1900.5 856.7 1902.8 859.3 1905.0 862.0 C1907.2 864.7 1910.8 868.7 1912.0 870.0" fill="none" stroke="#E996A6" stroke-width="1.5" stroke-linejoin="round" stroke-linecap="round"/><path d="M1460.0 96.0 C1461.5 96.3 1466.0 97.0 1469.0 97.6 C1472.1 98.3 1475.4 99.4 1478.4 99.9 C1481.4 100.4 1484.2 100.1 1487.1 100.5 C1490.0 101.0 1492.7 102.2 1495.6 102.7 C1498.5 103.2 1501.7 102.9 1504.6 103.4 C1507.4 104.0 1510.0 105.6 1512.8 106.1 C1515.7 106.5 1518.5 105.8 1521.5 106.1 C1524.6 106.4 1528.1 107.3 1531.2 107.9 C1534.2 108.6 1536.9 109.3 1540.0 110.0 C1543.1 110.7 1546.2 111.3 1549.6 111.9 C1553.0 112.4 1556.9 112.8 1560.4 113.4 C1564.0 113.9 1567.5 114.5 1570.7 115.1 C1574.0 115.8 1576.6 116.5 1579.7 117.0 C1582.9 117.6 1586.2 117.9 1589.5 118.4 C1592.9 118.8 1596.7 119.7 1600.0 120.0 C1603.3 120.3 1606.3 119.9 1609.3 120.3 C1612.3 120.7 1615.1 121.8 1618.1 122.4 C1621.1 122.9 1624.4 123.2 1627.4 123.4 C1630.4 123.6 1633.0 123.8 1636.0 123.9 C1639.0 123.9 1642.2 123.6 1645.4 123.8 C1648.5 124.1 1651.8 125.1 1654.7 125.4 C1657.7 125.8 1659.9 125.4 1662.9 125.8 C1665.9 126.2 1669.7 127.6 1672.8 127.9 C1675.9 128.3 1678.4 127.7 1681.4 127.9 C1684.4 128.1 1687.8 128.6 1690.9 128.9 C1694.0 129.3 1698.5 129.8 1700.0 130.0" fill="none" stroke="#E996A6" stroke-width="1.5" stroke-linejoin="round" stroke-linecap="round"/><path d="M1600.0 341.0 C1601.7 340.6 1606.7 339.8 1610.0 338.9 C1613.2 337.9 1616.3 336.4 1619.6 335.3 C1622.9 334.2 1626.2 333.1 1629.6 332.2 C1633.0 331.3 1636.7 331.2 1640.0 330.0 C1643.3 328.8 1646.4 326.6 1649.2 325.1 C1652.1 323.7 1654.4 322.7 1657.2 321.2 C1660.1 319.8 1663.7 317.9 1666.4 316.5 C1669.1 315.1 1671.1 314.1 1673.7 312.8 C1676.3 311.4 1679.1 309.9 1682.1 308.4 C1685.1 306.9 1688.9 304.9 1691.8 303.5 C1694.8 302.1 1697.6 299.3 1700.0 300.0 C1702.4 300.7 1704.1 305.1 1706.0 307.6 C1707.8 310.1 1709.2 312.6 1711.0 315.1 C1712.8 317.6 1714.8 320.1 1716.8 322.6 C1718.7 325.0 1720.6 327.7 1722.8 330.0 C1724.9 332.2 1727.8 333.9 1729.8 336.3 C1731.9 338.6 1733.2 341.3 1735.0 344.0 C1736.8 346.7 1738.5 349.3 1740.5 352.3 C1742.5 355.4 1744.8 359.4 1746.9 362.4 C1749.1 365.4 1751.2 367.5 1753.4 370.4 C1755.6 373.3 1758.9 378.4 1760.0 380.0" fill="none" stroke="#E996A6" stroke-width="1.5" stroke-linejoin="round" stroke-linecap="round"/><path d="M1230.0 121.0 C1231.3 119.8 1235.3 116.3 1237.7 114.1 C1240.0 111.9 1241.8 109.8 1244.2 107.8 C1246.6 105.8 1249.4 104.1 1252.1 102.0 C1254.7 99.9 1258.7 96.2 1260.0 95.0" fill="none" stroke="#E996A6" stroke-width="1.5" stroke-linejoin="round" stroke-linecap="round"/><path d="M1678.0 445.0 C1677.8 446.8 1677.1 452.7 1676.7 456.0 C1676.3 459.3 1676.1 461.4 1675.5 464.8 C1674.9 468.1 1673.8 472.5 1673.1 476.0 C1672.4 479.6 1671.8 482.7 1671.3 486.0 C1670.8 489.3 1670.9 492.9 1670.0 496.0 C1669.1 499.1 1667.3 501.6 1665.7 504.8 C1664.1 508.0 1662.0 511.9 1660.4 515.1 C1658.7 518.3 1657.2 520.7 1655.8 523.8 C1654.4 527.0 1653.6 530.5 1652.0 534.0 C1650.4 537.5 1648.2 541.3 1646.2 544.8 C1644.2 548.3 1641.0 553.3 1640.0 555.0" fill="none" stroke="#E996A6" stroke-width="1.5" stroke-linejoin="round" stroke-linecap="round"/><path d="M1735.0 440.0 C1736.3 439.1 1740.1 436.4 1742.7 434.6 C1745.2 432.7 1747.6 431.2 1750.3 429.1 C1753.0 427.0 1756.0 424.1 1758.8 422.1 C1761.5 420.1 1764.3 418.7 1766.8 416.9 C1769.2 415.2 1771.1 413.6 1773.5 411.7 C1776.0 409.8 1779.0 407.5 1781.7 405.6 C1784.4 403.6 1787.3 401.8 1790.0 400.0 C1792.7 398.2 1795.1 396.8 1797.7 394.8 C1800.3 392.9 1803.0 390.3 1805.7 388.4 C1808.4 386.5 1811.4 384.9 1814.1 383.3 C1816.8 381.6 1819.5 380.2 1822.0 378.5 C1824.5 376.8 1826.7 375.0 1829.3 373.1 C1832.0 371.3 1835.0 369.3 1837.7 367.4 C1840.5 365.6 1843.7 361.7 1846.0 362.0 C1848.3 362.3 1849.9 366.7 1851.6 369.4 C1853.2 372.0 1854.2 375.0 1855.9 377.7 C1857.6 380.4 1860.4 383.1 1862.0 385.7 C1863.7 388.2 1864.4 390.2 1866.0 392.8 C1867.6 395.4 1870.1 398.6 1871.9 401.3 C1873.7 404.0 1876.1 407.7 1877.0 409.0" fill="none" stroke="#E996A6" stroke-width="1.5" stroke-linejoin="round" stroke-linecap="round"/><path d="M1580.0 165.0 C1581.6 165.1 1586.1 165.2 1589.4 165.5 C1592.6 165.7 1596.0 166.3 1599.5 166.6 C1603.0 166.9 1606.9 166.9 1610.3 167.2 C1613.8 167.5 1616.7 168.1 1620.1 168.4 C1623.4 168.6 1627.1 168.5 1630.4 168.5 C1633.7 168.6 1636.4 168.4 1639.6 168.7 C1642.9 168.9 1646.7 170.1 1650.0 170.0 C1653.3 169.9 1656.0 168.3 1659.3 167.8 C1662.6 167.4 1666.4 167.4 1669.9 167.2 C1673.3 166.9 1676.5 166.6 1679.9 166.2 C1683.4 165.9 1687.0 165.5 1690.5 165.0 C1694.0 164.5 1697.6 163.7 1700.7 163.1 C1703.8 162.6 1706.0 162.1 1709.2 161.6 C1712.4 161.1 1716.4 160.6 1720.0 160.0 C1723.6 159.4 1727.3 158.6 1730.7 158.2 C1734.1 157.9 1737.3 158.2 1740.4 157.8 C1743.5 157.4 1746.1 156.2 1749.3 155.7 C1752.6 155.2 1756.4 155.2 1759.9 154.7 C1763.4 154.2 1766.9 153.4 1770.3 153.0 C1773.7 152.6 1776.7 152.6 1780.1 152.3 C1783.5 152.0 1787.4 151.7 1790.7 151.3 C1794.0 150.9 1796.8 150.3 1800.0 150.0 C1803.2 149.7 1806.6 150.0 1809.8 149.6 C1812.9 149.3 1815.9 148.2 1818.8 147.9 C1821.7 147.5 1824.2 148.0 1827.3 147.7 C1830.4 147.4 1834.2 146.5 1837.4 146.2 C1840.7 145.9 1843.7 146.1 1846.7 146.0 C1849.7 145.8 1852.4 145.6 1855.4 145.2 C1858.4 144.8 1861.4 143.8 1864.7 143.4 C1868.1 143.0 1872.3 143.1 1875.4 143.0 C1878.5 142.9 1880.5 143.3 1883.4 142.9 C1886.3 142.6 1889.5 141.5 1892.6 141.1 C1895.7 140.8 1898.9 141.3 1902.2 141.1 C1905.4 140.9 1910.4 140.2 1912.0 140.0" fill="none" stroke="#E996A6" stroke-width="1.5" stroke-linejoin="round" stroke-linecap="round"/><path d="M998.0 757.0 C998.3 755.3 999.2 750.1 999.7 746.7 C1000.2 743.4 1000.3 740.4 1000.9 737.0 C1001.5 733.5 1002.7 727.8 1003.0 726.0" fill="none" stroke="#E996A6" stroke-width="1.5" stroke-linejoin="round" stroke-linecap="round"/><path d="M998.0 757.0 C999.9 757.1 1005.3 757.6 1009.3 757.6 C1013.3 757.6 1018.5 755.9 1022.0 757.0 C1025.5 758.1 1027.5 761.5 1030.5 764.0 C1033.5 766.5 1037.0 769.4 1040.0 772.0 C1043.0 774.6 1045.7 777.2 1048.5 779.7 C1051.3 782.2 1055.6 785.8 1057.0 787.0" fill="none" stroke="#E996A6" stroke-width="1.5" stroke-linejoin="round" stroke-linecap="round"/><path d="M1057.0 787.0 C1058.3 786.0 1062.2 783.2 1064.7 781.3 C1067.3 779.4 1069.9 777.5 1072.5 775.7 C1075.0 773.8 1077.4 771.8 1080.0 770.0 C1082.6 768.2 1085.7 766.4 1088.1 764.7 C1090.6 763.0 1092.5 761.5 1094.8 759.8 C1097.1 758.1 1099.4 756.1 1101.9 754.5 C1104.5 752.9 1108.7 750.7 1110.0 750.0" fill="none" stroke="#E996A6" stroke-width="1.5" stroke-linejoin="round" stroke-linecap="round"/><path d="M1090.0 91.0 C1091.6 92.0 1095.9 94.9 1099.4 97.0 C1102.8 99.1 1107.3 101.4 1110.7 103.6 C1114.2 105.8 1116.8 108.7 1120.0 110.0 C1123.2 111.3 1126.9 110.9 1130.2 111.4 C1133.5 111.9 1136.5 112.5 1139.9 113.2 C1143.3 113.9 1147.2 114.7 1150.6 115.5 C1153.9 116.3 1158.4 117.6 1160.0 118.0" fill="none" stroke="#E996A6" stroke-width="1.5" stroke-linejoin="round" stroke-linecap="round"/><path d="M417.0 442.0 C418.4 440.9 422.7 437.8 425.1 435.2 C427.6 432.7 429.3 429.5 431.7 426.9 C434.1 424.2 437.3 421.6 439.8 419.3 C442.3 416.9 444.2 415.2 446.7 412.8 C449.3 410.4 452.4 407.1 455.0 405.0 C457.6 402.9 459.6 402.1 462.2 400.4 C464.8 398.7 468.1 396.8 470.7 394.9 C473.3 393.1 475.5 390.9 477.9 389.3 C480.3 387.6 483.8 385.7 485.0 385.0" fill="none" stroke="#F4B7A3" stroke-width="1.3" stroke-linejoin="round" stroke-linecap="round"/><path d="M466.0 274.0 C465.8 275.7 465.1 280.9 464.7 284.2 C464.3 287.4 464.2 290.2 463.5 293.4 C462.9 296.6 461.3 300.4 460.7 303.6 C460.2 306.7 460.7 309.4 460.3 312.5 C459.8 315.6 458.5 318.8 458.0 322.0 C457.5 325.2 457.7 328.5 457.5 331.8 C457.4 335.1 457.1 338.7 457.1 341.9 C457.0 345.2 457.2 348.2 457.1 351.4 C457.0 354.6 456.7 357.8 456.4 361.0 C456.1 364.1 455.5 366.9 455.3 370.3 C455.0 373.6 455.0 377.6 454.9 380.9 C454.9 384.2 454.9 386.8 455.0 390.0 C455.1 393.2 455.2 396.6 455.5 399.9 C455.8 403.2 456.3 406.6 456.7 409.9 C457.2 413.3 457.8 418.3 458.0 420.0" fill="none" stroke="#F4B7A3" stroke-width="1.3" stroke-linejoin="round" stroke-linecap="round"/><path d="M872.0 290.0 C872.9 288.6 875.9 284.2 877.3 281.6 C878.7 279.0 879.0 276.9 880.4 274.3 C881.9 271.6 884.4 268.3 886.0 265.4 C887.6 262.6 887.6 259.4 890.0 257.0 C892.4 254.6 897.3 253.2 900.6 251.2 C904.0 249.2 906.9 246.0 910.0 245.0 C913.1 244.0 915.9 245.3 919.2 245.4 C922.6 245.5 926.7 245.6 930.2 245.6 C933.6 245.5 938.4 245.1 940.0 245.0" fill="none" stroke="#F4B7A3" stroke-width="1.3" stroke-linejoin="round" stroke-linecap="round"/><path d="M1100.0 345.0 C1101.0 346.4 1104.2 350.3 1105.8 353.5 C1107.4 356.6 1108.0 360.7 1109.6 363.9 C1111.3 367.1 1113.9 369.6 1115.6 372.6 C1117.4 375.7 1118.5 379.1 1120.2 382.2 C1121.8 385.4 1124.1 388.5 1125.8 391.5 C1127.4 394.4 1128.1 397.5 1130.0 400.0 C1131.9 402.5 1135.0 404.4 1137.2 406.7 C1139.3 408.9 1140.9 411.4 1143.0 413.6 C1145.2 415.8 1148.8 418.9 1150.0 420.0" fill="none" stroke="#F4B7A3" stroke-width="1.3" stroke-linejoin="round" stroke-linecap="round"/><path d="M1060.0 490.0 C1060.3 491.8 1060.9 497.3 1061.5 500.7 C1062.2 504.1 1063.1 507.4 1063.8 510.5 C1064.5 513.6 1065.2 515.9 1065.9 519.2 C1066.6 522.5 1067.2 527.0 1067.9 530.5 C1068.6 533.9 1070.0 536.7 1070.0 540.0 C1070.0 543.3 1068.7 547.0 1068.2 550.2 C1067.7 553.5 1067.3 556.0 1066.8 559.3 C1066.3 562.6 1065.9 566.6 1065.4 569.9 C1064.9 573.3 1064.5 575.9 1063.8 579.3 C1063.2 582.7 1062.1 586.6 1061.5 590.1 C1060.8 593.5 1060.9 596.7 1060.0 600.0 C1059.1 603.3 1057.7 606.7 1056.3 609.9 C1055.0 613.2 1053.6 616.2 1052.2 619.6 C1050.7 623.0 1049.1 626.9 1047.7 630.4 C1046.3 633.9 1045.0 637.1 1043.8 640.4 C1042.5 643.7 1040.6 648.4 1040.0 650.0" fill="none" stroke="#F4B7A3" stroke-width="1.3" stroke-linejoin="round" stroke-linecap="round"/><path d="M1620.0 460.0 C1621.7 460.3 1626.7 461.0 1630.1 461.7 C1633.6 462.4 1637.2 463.6 1640.6 464.1 C1644.0 464.6 1647.2 464.4 1650.4 464.9 C1653.7 465.4 1656.8 466.6 1660.1 467.2 C1663.3 467.7 1666.8 467.5 1670.1 468.0 C1673.5 468.4 1676.8 468.7 1680.0 470.0 C1683.2 471.3 1686.3 474.2 1689.5 475.7 C1692.7 477.3 1695.9 477.8 1699.3 479.2 C1702.7 480.7 1706.6 482.7 1710.0 484.5 C1713.5 486.3 1718.3 489.1 1720.0 490.0" fill="none" stroke="#F4B7A3" stroke-width="1.3" stroke-linejoin="round" stroke-linecap="round"/>
<circle cx="508" cy="146" r="2.3" fill="#fff" stroke="#777" stroke-width="1"/><circle cx="471" cy="270" r="2.3" fill="#fff" stroke="#777" stroke-width="1"/><circle cx="568" cy="383" r="2.3" fill="#fff" stroke="#777" stroke-width="1"/><circle cx="1066" cy="175" r="2.3" fill="#fff" stroke="#777" stroke-width="1"/><circle cx="1230" cy="122" r="2.3" fill="#fff" stroke="#777" stroke-width="1"/><circle cx="1349" cy="130" r="2.3" fill="#fff" stroke="#777" stroke-width="1"/><circle cx="1329" cy="151" r="2.3" fill="#fff" stroke="#777" stroke-width="1"/><circle cx="1216" cy="209" r="2.3" fill="#fff" stroke="#777" stroke-width="1"/><circle cx="1337" cy="395" r="2.3" fill="#fff" stroke="#777" stroke-width="1"/><circle cx="1386" cy="388" r="2.3" fill="#fff" stroke="#777" stroke-width="1"/><circle cx="1338" cy="444" r="2.3" fill="#fff" stroke="#777" stroke-width="1"/><circle cx="1362" cy="419" r="2.3" fill="#fff" stroke="#777" stroke-width="1"/><circle cx="1279" cy="426" r="2.3" fill="#fff" stroke="#777" stroke-width="1"/><circle cx="1317" cy="460" r="2.3" fill="#fff" stroke="#777" stroke-width="1"/><circle cx="1397" cy="440" r="2.3" fill="#fff" stroke="#777" stroke-width="1"/><circle cx="1505" cy="428" r="2.3" fill="#fff" stroke="#777" stroke-width="1"/><circle cx="1394" cy="480" r="2.3" fill="#fff" stroke="#777" stroke-width="1"/><circle cx="1240" cy="499" r="2.3" fill="#fff" stroke="#777" stroke-width="1"/><circle cx="1294" cy="523" r="2.3" fill="#fff" stroke="#777" stroke-width="1"/><circle cx="1450" cy="500" r="2.3" fill="#fff" stroke="#777" stroke-width="1"/><circle cx="1556" cy="546" r="2.3" fill="#fff" stroke="#777" stroke-width="1"/><circle cx="1586" cy="444" r="2.3" fill="#fff" stroke="#777" stroke-width="1"/><circle cx="1643" cy="427" r="2.3" fill="#fff" stroke="#777" stroke-width="1"/><circle cx="1678" cy="449" r="2.3" fill="#fff" stroke="#777" stroke-width="1"/><circle cx="1726" cy="444" r="2.3" fill="#fff" stroke="#777" stroke-width="1"/><circle cx="1600" cy="348" r="2.3" fill="#fff" stroke="#777" stroke-width="1"/><circle cx="1761" cy="356" r="2.3" fill="#fff" stroke="#777" stroke-width="1"/><circle cx="1670" cy="496" r="2.3" fill="#fff" stroke="#777" stroke-width="1"/><circle cx="1652" cy="534" r="2.3" fill="#fff" stroke="#777" stroke-width="1"/><circle cx="1877" cy="409" r="2.3" fill="#fff" stroke="#777" stroke-width="1"/><circle cx="1884" cy="535" r="2.3" fill="#fff" stroke="#777" stroke-width="1"/><circle cx="1651" cy="168" r="2.3" fill="#fff" stroke="#777" stroke-width="1"/><circle cx="1226" cy="599" r="2.3" fill="#fff" stroke="#777" stroke-width="1"/><circle cx="1314" cy="611" r="2.3" fill="#fff" stroke="#777" stroke-width="1"/><circle cx="1370" cy="595" r="2.3" fill="#fff" stroke="#777" stroke-width="1"/><circle cx="1472" cy="640" r="2.3" fill="#fff" stroke="#777" stroke-width="1"/><circle cx="998" cy="757" r="2.3" fill="#fff" stroke="#777" stroke-width="1"/><circle cx="1057" cy="787" r="2.3" fill="#fff" stroke="#777" stroke-width="1"/><circle cx="1009" cy="723" r="2.3" fill="#fff" stroke="#777" stroke-width="1"/><circle cx="893" cy="682" r="2.3" fill="#fff" stroke="#777" stroke-width="1"/><circle cx="815" cy="712" r="2.3" fill="#fff" stroke="#777" stroke-width="1"/><circle cx="586" cy="712" r="2.3" fill="#fff" stroke="#777" stroke-width="1"/><circle cx="397" cy="758" r="2.3" fill="#fff" stroke="#777" stroke-width="1"/><circle cx="740" cy="844" r="2.3" fill="#fff" stroke="#777" stroke-width="1"/><circle cx="1759" cy="862" r="2.3" fill="#fff" stroke="#777" stroke-width="1"/><circle cx="1174" cy="93" r="2.3" fill="#fff" stroke="#777" stroke-width="1"/><circle cx="1278" cy="416" r="2.3" fill="#fff" stroke="#777" stroke-width="1"/><text x="508" y="143" text-anchor="middle" style="font-size:12px;" fill="#6B6B6B" stroke="#fff" stroke-width="2.4" stroke-opacity="0.85" paint-order="stroke" opacity="1">Tours</text><text x="389" y="130" text-anchor="middle" style="font-size:12px;" fill="#6B6B6B" stroke="#fff" stroke-width="2.4" stroke-opacity="0.85" paint-order="stroke" opacity="1">ers</text><text x="471" y="267" text-anchor="middle" style="font-size:12px;" fill="#6B6B6B" stroke="#fff" stroke-width="2.4" stroke-opacity="0.85" paint-order="stroke" opacity="1">Poitiers</text><text x="568" y="380" text-anchor="middle" style="font-size:12px;" fill="#6B6B6B" stroke="#fff" stroke-width="2.4" stroke-opacity="0.85" paint-order="stroke" opacity="1">Limoges</text><text x="758" y="375" text-anchor="middle" style="font-size:12px;" fill="#8E8E8E" stroke="#fff" stroke-width="2.4" stroke-opacity="0.85" paint-order="stroke" opacity="1">Clermont-</text><text x="758" y="389" text-anchor="middle" style="font-size:12px;" fill="#8E8E8E" stroke="#fff" stroke-width="2.4" stroke-opacity="0.85" paint-order="stroke" opacity="1">Ferrand</text><text x="1066" y="185" text-anchor="middle" style="font-size:12px;" fill="#6B6B6B" stroke="#fff" stroke-width="2.4" stroke-opacity="0.85" paint-order="stroke" opacity="1">Besançon</text><text x="1174" y="97" text-anchor="middle" style="font-size:12px;" fill="#6B6B6B" stroke="#fff" stroke-width="2.4" stroke-opacity="0.85" paint-order="stroke" opacity="1">Mulhouse</text><text x="1230" y="118" text-anchor="middle" style="font-size:12px;" fill="#6B6B6B" stroke="#fff" stroke-width="2.4" stroke-opacity="0.85" paint-order="stroke" opacity="1">Basel</text><text x="1349" y="126" text-anchor="middle" style="font-size:12px;" fill="#6B6B6B" stroke="#fff" stroke-width="2.4" stroke-opacity="0.85" paint-order="stroke" opacity="1">Winterthur</text><text x="1329" y="167" text-anchor="middle" style="font-size:13px;" fill="#6B6B6B" stroke="#fff" stroke-width="2.4" stroke-opacity="0.85" paint-order="stroke" opacity="1">Zürich</text><text x="1216" y="208" text-anchor="middle" style="font-size:13px;" fill="#6B6B6B" stroke="#fff" stroke-width="2.4" stroke-opacity="0.85" paint-order="stroke" opacity="1">Bern</text><text x="1337" y="391" text-anchor="middle" style="font-size:12px;" fill="#6B6B6B" stroke="#fff" stroke-width="2.4" stroke-opacity="0.85" paint-order="stroke" opacity="1">Varese</text><text x="1386" y="384" text-anchor="middle" style="font-size:12px;" fill="#6B6B6B" stroke="#fff" stroke-width="2.4" stroke-opacity="0.85" paint-order="stroke" opacity="1">Como</text><text x="1338" y="439" text-anchor="middle" style="font-size:12px;" fill="#6B6B6B" stroke="#fff" stroke-width="2.4" stroke-opacity="0.85" paint-order="stroke" opacity="1">Novara</text><text x="1362" y="414" text-anchor="middle" style="font-size:12px;" fill="#6B6B6B" stroke="#fff" stroke-width="2.4" stroke-opacity="0.85" paint-order="stroke" opacity="1">Busto Arsizio</text><text x="1279" y="421" text-anchor="middle" style="font-size:12px;" fill="#6B6B6B" stroke="#fff" stroke-width="2.4" stroke-opacity="0.85" paint-order="stroke" opacity="1">Biella</text><text x="1317" y="473" text-anchor="middle" style="font-size:12px;" fill="#6B6B6B" stroke="#fff" stroke-width="2.4" stroke-opacity="0.85" paint-order="stroke" opacity="1">Vercelli</text><text x="1397" y="435" text-anchor="middle" style="font-size:14px;" fill="#6B6B6B" stroke="#fff" stroke-width="2.4" stroke-opacity="0.85" paint-order="stroke" opacity="1">Milano</text><text x="1505" y="442" text-anchor="middle" style="font-size:12px;" fill="#6B6B6B" stroke="#fff" stroke-width="2.4" stroke-opacity="0.85" paint-order="stroke" opacity="1">Brescia</text><text x="1240" y="514" text-anchor="middle" style="font-size:13px;" fill="#6B6B6B" stroke="#fff" stroke-width="2.4" stroke-opacity="0.85" paint-order="stroke" opacity="1">Torino</text><text x="1335" y="519" text-anchor="middle" style="font-size:12px;" fill="#6B6B6B" stroke="#fff" stroke-width="2.4" stroke-opacity="0.85" paint-order="stroke" opacity="1">Alessandria</text><text x="1394" y="494" text-anchor="middle" style="font-size:12px;" fill="#6B6B6B" stroke="#fff" stroke-width="2.4" stroke-opacity="0.85" paint-order="stroke" opacity="1">Pavia</text><text x="1450" y="514" text-anchor="middle" style="font-size:12px;" fill="#6B6B6B" stroke="#fff" stroke-width="2.4" stroke-opacity="0.85" paint-order="stroke" opacity="1">Piacenza</text><text x="1484" y="486" text-anchor="middle" style="font-size:12px;" fill="#6B6B6B" stroke="#fff" stroke-width="2.4" stroke-opacity="0.85" paint-order="stroke" opacity="1">Cremona</text><text x="1518" y="551" text-anchor="middle" style="font-size:12px;" fill="#6B6B6B" stroke="#fff" stroke-width="2.4" stroke-opacity="0.85" paint-order="stroke" opacity="1">Parma</text><text x="1556" y="556" text-anchor="middle" style="font-size:12px;" fill="#6B6B6B" stroke="#fff" stroke-width="2.4" stroke-opacity="0.85" paint-order="stroke" opacity="1">Modena</text><text x="1586" y="457" text-anchor="middle" style="font-size:12px;" fill="#6B6B6B" stroke="#fff" stroke-width="2.4" stroke-opacity="0.85" paint-order="stroke" opacity="1">Verona</text><text x="1643" y="423" text-anchor="middle" style="font-size:12px;" fill="#6B6B6B" stroke="#fff" stroke-width="2.4" stroke-opacity="0.85" paint-order="stroke" opacity="1">Vicenza</text><text x="1678" y="444" text-anchor="middle" style="font-size:12px;" fill="#6B6B6B" stroke="#fff" stroke-width="2.4" stroke-opacity="0.85" paint-order="stroke" opacity="1">Padova</text><text x="1751" y="448" text-anchor="middle" style="font-size:12px;" fill="#6B6B6B" stroke="#fff" stroke-width="2.4" stroke-opacity="0.85" paint-order="stroke" opacity="1">Venezia</text><text x="1600" y="345" text-anchor="middle" style="font-size:12px;" fill="#6B6B6B" stroke="#fff" stroke-width="2.4" stroke-opacity="0.85" paint-order="stroke" opacity="1">Trento</text><text x="1729" y="364" text-anchor="middle" style="font-size:12px;" fill="#6B6B6B" stroke="#fff" stroke-width="2.4" stroke-opacity="0.85" paint-order="stroke" opacity="1">Pordenone /</text><text x="1729" y="378" text-anchor="middle" style="font-size:12px;" fill="#6B6B6B" stroke="#fff" stroke-width="2.4" stroke-opacity="0.85" paint-order="stroke" opacity="1">Pordenon</text><text x="1670" y="512" text-anchor="middle" style="font-size:12px;" fill="#6B6B6B" stroke="#fff" stroke-width="2.4" stroke-opacity="0.85" paint-order="stroke" opacity="1">Rovigo</text><text x="1652" y="529" text-anchor="middle" style="font-size:12px;" fill="#6B6B6B" stroke="#fff" stroke-width="2.4" stroke-opacity="0.85" paint-order="stroke" opacity="1">Ferrara</text><text x="1877" y="425" text-anchor="middle" style="font-size:12px;" fill="#6B6B6B" stroke="#fff" stroke-width="2.4" stroke-opacity="0.85" paint-order="stroke" opacity="1">Trieste</text><text x="1884" y="550" text-anchor="middle" style="font-size:12px;" fill="#6B6B6B" stroke="#fff" stroke-width="2.4" stroke-opacity="0.85" paint-order="stroke" opacity="1">Pula</text><text x="1659" y="172" text-anchor="middle" style="font-size:12px;" fill="#6B6B6B" stroke="#fff" stroke-width="2.4" stroke-opacity="0.85" paint-order="stroke" opacity="1">Innsbruck</text><text x="1226" y="591" text-anchor="middle" style="font-size:12px;" fill="#6B6B6B" stroke="#fff" stroke-width="2.4" stroke-opacity="0.85" paint-order="stroke" opacity="1">Cuneo</text><text x="1299" y="615" text-anchor="middle" style="font-size:12px;" fill="#6B6B6B" stroke="#fff" stroke-width="2.4" stroke-opacity="0.85" paint-order="stroke" opacity="1">Savona</text><text x="1371" y="613" text-anchor="middle" style="font-size:14px;" fill="#6B6B6B" stroke="#fff" stroke-width="2.4" stroke-opacity="0.85" paint-order="stroke" opacity="1">Genova</text><text x="1463" y="653" text-anchor="middle" style="font-size:12px;" fill="#6B6B6B" stroke="#fff" stroke-width="2.4" stroke-opacity="0.85" paint-order="stroke" opacity="1">La Spezia</text><text x="1509" y="704" text-anchor="middle" style="font-size:12px;" fill="#6B6B6B" stroke="#fff" stroke-width="2.4" stroke-opacity="0.85" paint-order="stroke" opacity="1">Livo</text><text x="1009" y="706" text-anchor="middle" style="font-size:12px;" fill="#6B6B6B" stroke="#fff" stroke-width="2.4" stroke-opacity="0.85" paint-order="stroke" opacity="1">Aix-en-</text><text x="1009" y="720" text-anchor="middle" style="font-size:12px;" fill="#6B6B6B" stroke="#fff" stroke-width="2.4" stroke-opacity="0.85" paint-order="stroke" opacity="1">Provence</text><text x="998" y="773" text-anchor="middle" style="font-size:14px;" fill="#6B6B6B" stroke="#fff" stroke-width="2.4" stroke-opacity="0.85" paint-order="stroke" opacity="1">Marseille</text><text x="1057" y="777" text-anchor="middle" style="font-size:12px;" fill="#6B6B6B" stroke="#fff" stroke-width="2.4" stroke-opacity="0.85" paint-order="stroke" opacity="1">Toulon</text><text x="946" y="659" text-anchor="middle" style="font-size:12px;" fill="#6B6B6B" stroke="#fff" stroke-width="2.4" stroke-opacity="0.85" paint-order="stroke" opacity="1">Avignon</text><text x="893" y="674" text-anchor="middle" style="font-size:12px;" fill="#6B6B6B" stroke="#fff" stroke-width="2.4" stroke-opacity="0.85" paint-order="stroke" opacity="1">Nîmes</text><text x="815" y="707" text-anchor="middle" style="font-size:12px;" fill="#6B6B6B" stroke="#fff" stroke-width="2.4" stroke-opacity="0.85" paint-order="stroke" opacity="1">Montpellier</text><text x="587" y="728" text-anchor="middle" style="font-size:14px;" fill="#6B6B6B" stroke="#fff" stroke-width="2.4" stroke-opacity="0.85" paint-order="stroke" opacity="1">Toulouse</text><text x="397" y="753" text-anchor="middle" style="font-size:12px;" fill="#6B6B6B" stroke="#fff" stroke-width="2.4" stroke-opacity="0.85" paint-order="stroke" opacity="1">Pau</text><text x="740" y="856" text-anchor="middle" style="font-size:12px;" fill="#6B6B6B" stroke="#fff" stroke-width="2.4" stroke-opacity="0.85" paint-order="stroke" opacity="1">Perpignan</text><text x="1759" y="875" text-anchor="middle" style="font-size:12px;" fill="#6B6B6B" stroke="#fff" stroke-width="2.4" stroke-opacity="0.85" paint-order="stroke" opacity="1">Terni</text><text x="1905" y="870" text-anchor="middle" style="font-size:12px;" fill="#6B6B6B" stroke="#fff" stroke-width="2.4" stroke-opacity="0.85" paint-order="stroke" opacity="1">Pe</text><text x="393" y="526" text-anchor="middle" style="font-size:13px;" fill="#6B6B6B" stroke="#fff" stroke-width="2.4" stroke-opacity="0.85" paint-order="stroke" opacity="1">aux</text><text x="1295" y="535" text-anchor="middle" style="font-size:12px;" fill="#6B6B6B" stroke="#fff" stroke-width="2.4" stroke-opacity="0.85" paint-order="stroke" opacity="1">Asti</text><text x="942" y="412" text-anchor="middle" style="font-size:13px;" fill="#8E8E8E" stroke="#fff" stroke-width="2.4" stroke-opacity="0.85" paint-order="stroke" opacity="1">Lyon</text><text x="948" y="531" text-anchor="middle" style="font-size:12px;" fill="#8E8E8E" stroke="#fff" stroke-width="2.4" stroke-opacity="0.85" paint-order="stroke" opacity="1">Valence</text><text x="1030" y="474" text-anchor="middle" style="font-size:12px;" fill="#8E8E8E" stroke="#fff" stroke-width="2.4" stroke-opacity="0.85" paint-order="stroke" opacity="1">Grenoble</text><text x="1079" y="324" text-anchor="middle" style="font-size:12px;" fill="#9B9B9B" stroke="#fff" stroke-width="2.4" stroke-opacity="0.85" paint-order="stroke" opacity="1">Genève</text><text x="619" y="103" text-anchor="middle" style="font-size:12px;font-style:italic;" fill="#A58DB2" stroke="#fff" stroke-width="2.4" stroke-opacity="0.85" paint-order="stroke" opacity="1">Centre-Val</text><text x="619" y="119" text-anchor="middle" style="font-size:12px;font-style:italic;" fill="#A58DB2" stroke="#fff" stroke-width="2.4" stroke-opacity="0.85" paint-order="stroke" opacity="1">de Loire</text><text x="954" y="154" text-anchor="middle" style="font-size:12px;font-style:italic;" fill="#A58DB2" stroke="#fff" stroke-width="2.4" stroke-opacity="0.85" paint-order="stroke" opacity="1">Bourgogne-</text><text x="954" y="169" text-anchor="middle" style="font-size:12px;font-style:italic;" fill="#A58DB2" stroke="#fff" stroke-width="2.4" stroke-opacity="0.85" paint-order="stroke" opacity="1">Franche-</text><text x="954" y="184" text-anchor="middle" style="font-size:12px;font-style:italic;" fill="#A58DB2" stroke="#fff" stroke-width="2.4" stroke-opacity="0.85" paint-order="stroke" opacity="1">Comté</text><text x="1117" y="279" text-anchor="middle" style="font-size:12px;font-style:italic;" fill="#A58DB2" stroke="#fff" stroke-width="2.4" stroke-opacity="0.85" paint-order="stroke" opacity="1">Vaud</text><text x="1233" y="325" text-anchor="middle" style="font-size:12px;font-style:italic;" fill="#A58DB2" stroke="#fff" stroke-width="2.4" stroke-opacity="0.85" paint-order="stroke" opacity="1">Valais/Wallis</text><text x="1356" y="330" text-anchor="middle" style="font-size:12px;font-style:italic;" fill="#A58DB2" stroke="#fff" stroke-width="2.4" stroke-opacity="0.85" paint-order="stroke" opacity="1">Ticino</text><text x="1437" y="256" text-anchor="middle" style="font-size:11px;font-style:italic;" fill="#A58DB2" stroke="#fff" stroke-width="2.4" stroke-opacity="0.85" paint-order="stroke" opacity="1">Graubünden/</text><text x="1437" y="271" text-anchor="middle" style="font-size:11px;font-style:italic;" fill="#A58DB2" stroke="#fff" stroke-width="2.4" stroke-opacity="0.85" paint-order="stroke" opacity="1">Grischun/</text><text x="1437" y="286" text-anchor="middle" style="font-size:11px;font-style:italic;" fill="#A58DB2" stroke="#fff" stroke-width="2.4" stroke-opacity="0.85" paint-order="stroke" opacity="1">Grigioni</text><text x="1204" y="397" text-anchor="middle" style="font-size:12px;font-style:italic;" fill="#A58DB2" stroke="#fff" stroke-width="2.4" stroke-opacity="0.85" paint-order="stroke" opacity="1">Valle d'Aosta /</text><text x="1206" y="413" text-anchor="middle" style="font-size:12px;font-style:italic;" fill="#A58DB2" stroke="#fff" stroke-width="2.4" stroke-opacity="0.85" paint-order="stroke" opacity="1">Vallée d'Aoste</text><text x="1255" y="473" text-anchor="middle" style="font-size:12px;font-style:italic;" fill="#A58DB2" stroke="#fff" stroke-width="2.4" stroke-opacity="0.85" paint-order="stroke" opacity="1">Piemonte</text><text x="1449" y="415" text-anchor="middle" style="font-size:12px;font-style:italic;" fill="#A58DB2" stroke="#fff" stroke-width="2.4" stroke-opacity="0.85" paint-order="stroke" opacity="1">Lombardia</text><text x="1701" y="402" text-anchor="middle" style="font-size:12px;font-style:italic;" fill="#A58DB2" stroke="#fff" stroke-width="2.4" stroke-opacity="0.85" paint-order="stroke" opacity="1">Veneto</text><text x="1801" y="339" text-anchor="middle" style="font-size:12px;font-style:italic;" fill="#A58DB2" stroke="#fff" stroke-width="2.4" stroke-opacity="0.85" paint-order="stroke" opacity="1">Friuli-Venezia</text><text x="1801" y="354" text-anchor="middle" style="font-size:12px;font-style:italic;" fill="#A58DB2" stroke="#fff" stroke-width="2.4" stroke-opacity="0.85" paint-order="stroke" opacity="1">Giulia</text><text x="1449" y="627" text-anchor="middle" style="font-size:12px;font-style:italic;" fill="#A58DB2" stroke="#fff" stroke-width="2.4" stroke-opacity="0.85" paint-order="stroke" opacity="1">Liguria</text><text x="1603" y="173" text-anchor="middle" style="font-size:12px;font-style:italic;" fill="#A58DB2" stroke="#fff" stroke-width="2.4" stroke-opacity="0.85" paint-order="stroke" opacity="1">Tirol</text><text x="1607" y="291" text-anchor="middle" style="font-size:12px;font-style:italic;" fill="#A58DB2" stroke="#fff" stroke-width="2.4" stroke-opacity="0.85" paint-order="stroke" opacity="1">Trentino-</text><text x="1608" y="306" text-anchor="middle" style="font-size:12px;font-style:italic;" fill="#A58DB2" stroke="#fff" stroke-width="2.4" stroke-opacity="0.85" paint-order="stroke" opacity="1">Alto Adige/</text><text x="1609" y="321" text-anchor="middle" style="font-size:12px;font-style:italic;" fill="#A58DB2" stroke="#fff" stroke-width="2.4" stroke-opacity="0.85" paint-order="stroke" opacity="1">Südtirol</text><text x="479" y="502" text-anchor="middle" style="font-size:12px;font-style:italic;" fill="#A58DB2" stroke="#fff" stroke-width="2.4" stroke-opacity="0.85" paint-order="stroke" opacity="1">Nouvelle-</text><text x="479" y="518" text-anchor="middle" style="font-size:12px;font-style:italic;" fill="#A58DB2" stroke="#fff" stroke-width="2.4" stroke-opacity="0.85" paint-order="stroke" opacity="1">Aquitaine</text><text x="661" y="703" text-anchor="middle" style="font-size:12px;font-style:italic;" fill="#A58DB2" stroke="#fff" stroke-width="2.4" stroke-opacity="0.85" paint-order="stroke" opacity="1">Occitanie</text><text x="1088" y="633" text-anchor="middle" style="font-size:12px;font-style:italic;" fill="#A58DB2" stroke="#fff" stroke-width="2.4" stroke-opacity="0.85" paint-order="stroke" opacity="1">Provence-</text><text x="1088" y="650" text-anchor="middle" style="font-size:12px;font-style:italic;" fill="#A58DB2" stroke="#fff" stroke-width="2.4" stroke-opacity="0.85" paint-order="stroke" opacity="1">Alpes-Côte</text><text x="1088" y="666" text-anchor="middle" style="font-size:12px;font-style:italic;" fill="#A58DB2" stroke="#fff" stroke-width="2.4" stroke-opacity="0.85" paint-order="stroke" opacity="1">d'Azur</text><text x="938" y="436" text-anchor="middle" style="font-size:12px;font-style:italic;" fill="#A58DB2" stroke="#fff" stroke-width="2.4" stroke-opacity="0.85" paint-order="stroke" opacity="1">Auvergne-Rhône-</text><text x="955" y="451" text-anchor="middle" style="font-size:12px;font-style:italic;" fill="#A58DB2" stroke="#fff" stroke-width="2.4" stroke-opacity="0.85" paint-order="stroke" opacity="1">Alpes</text><text x="1435" y="189" text-anchor="middle" style="font-size:15px;" fill="#9C87A8" stroke="#fff" stroke-width="2.4" stroke-opacity="0.85" paint-order="stroke" opacity="1">Liechtenstein</text><text x="1319" y="223" text-anchor="middle" style="font-size:14px;" fill="#9C87A8" stroke="#fff" stroke-width="2.4" stroke-opacity="0.85" paint-order="stroke" opacity="1">Schweiz/</text><text x="1319" y="241" text-anchor="middle" style="font-size:14px;" fill="#9C87A8" stroke="#fff" stroke-width="2.4" stroke-opacity="0.85" paint-order="stroke" opacity="1">Suisse/Svizzera/</text><text x="1319" y="260" text-anchor="middle" style="font-size:14px;" fill="#9C87A8" stroke="#fff" stroke-width="2.4" stroke-opacity="0.85" paint-order="stroke" opacity="1">Svizra</text><text x="1218" y="714" text-anchor="middle" style="font-size:15px;" fill="#9C87A8" stroke="#fff" stroke-width="2.4" stroke-opacity="0.85" paint-order="stroke" opacity="1">Monaco</text><text x="603" y="871" text-anchor="middle" style="font-size:14px;" fill="#9C87A8" stroke="#fff" stroke-width="2.4" stroke-opacity="0.85" paint-order="stroke" opacity="1">Andorra</text>
<path d="M675.0 293.0 L678.5 288.3 L678.7 286.2 L682.0 281.0 L683.4 278.4 L688.0 276.4 L689.3 274.0 L693.5 272.3 L694.6 270.2 L698.0 267.2 L702.2 264.8 L705.0 261.0 L706.3 256.3 L710.0 253.0 L711.7 252.6 L716.6 249.0 L718.5 247.1 L721.7 247.5 L725.9 246.6 L727.7 245.6 L734.4 243.8 L736.7 242.8 L739.0 240.0 L741.8 239.5 L746.1 240.4 L752.0 239.0 L754.6 240.5 L756.8 246.1 L759.7 246.6 L762.0 251.0 L767.5 249.7 L770.9 253.6 L774.4 253.9 L777.3 251.5 L781.0 253.0 L784.6 254.7 L789.5 254.1 L793.9 253.5 L796.0 256.0 L799.2 251.7 L802.0 252.9 L804.3 250.3 L809.0 246.0 L813.0 246.0 L816.3 250.3 L814.9 253.1 L819.1 255.3 L819.4 258.8 L822.0 264.0 L824.8 269.1 L826.6 272.0 L826.8 272.8 L828.0 278.0 L831.2 280.4 L835.5 279.0 L835.9 280.6 L842.6 282.0 L843.8 284.8 L849.0 284.9 L849.8 288.7 L854.0 289.0 L852.6 291.2 L852.5 297.7 L853.5 299.5 L854.2 304.8 L855.6 306.9 L855.0 310.0 L852.7 311.9 L851.8 314.0 L848.7 317.5 L846.0 321.0 L846.8 324.8 L848.2 329.3 L851.0 333.0 L853.4 331.7 L857.6 332.4 L864.4 334.5 L867.7 336.1 L869.7 337.2 L875.0 336.0 L879.6 334.8 L885.0 334.0 L887.0 331.7 L890.0 326.8 L892.2 324.7 L892.1 323.4 L896.4 320.4 L897.0 316.0 L900.2 317.7 L905.8 318.1 L909.5 318.3 L912.3 317.5 L917.4 316.8 L920.2 316.5 L924.0 317.0 L927.8 319.7 L929.7 323.6 L932.0 325.9 L932.0 330.5 L936.0 333.0 L935.7 328.8 L939.1 324.0 L940.6 322.3 L940.2 319.0 L939.3 312.9 L942.0 311.0 L944.1 307.7 L945.0 305.0 L944.9 298.8 L948.8 294.8 L948.3 293.3 L951.2 287.7 L951.5 284.0 L952.0 282.0 L955.8 282.6 L961.3 280.6 L964.9 281.2 L967.6 284.5 L973.3 281.2 L976.0 283.0 L977.4 283.2 L983.6 285.2 L986.8 290.2 L989.0 291.0 L993.2 296.0 L995.5 298.9 L998.0 301.0 L999.8 305.3 L999.7 308.5 L1003.0 312.0 L1008.5 314.2 L1011.1 316.1 L1014.0 320.0 L1017.2 317.4 L1021.5 313.8 L1023.6 310.6 L1027.0 309.0 L1030.3 313.7 L1032.6 315.6 L1036.0 318.0 L1039.9 317.5 L1044.1 318.2 L1047.0 320.0 L1050.3 319.3 L1052.0 315.5 L1055.1 312.9 L1057.4 309.8 L1062.5 306.1 L1063.8 303.6 L1065.9 302.8 L1071.4 299.7 L1073.0 297.0 L1076.3 298.7 L1080.0 302.0 L1078.7 307.3 L1079.3 310.0 L1079.0 313.0 L1082.5 311.4 L1085.8 311.6 L1092.0 312.0 L1091.7 316.6 L1092.0 321.0 L1088.9 322.6 L1086.4 323.8 L1082.2 324.7 L1078.2 324.2 L1076.1 326.7 L1071.0 326.0 L1066.9 329.1 L1063.4 330.3 L1060.0 331.0 L1058.7 335.4 L1061.0 339.0 L1066.7 338.0 L1070.4 338.2 L1071.2 335.1 L1077.0 336.0 L1080.4 336.0 L1085.6 332.9 L1090.4 330.2 L1093.0 329.0 L1095.1 326.6 L1101.4 323.3 L1103.2 321.6 L1106.1 318.7 L1110.0 318.0 L1114.9 315.7 L1117.8 314.1 L1119.7 312.2 L1123.7 312.7 L1126.4 310.2 L1130.0 310.0 L1134.5 307.2 L1139.6 307.9 L1142.4 306.7 L1144.2 304.2 L1150.0 305.0 L1154.2 307.3 L1155.8 309.8 L1160.0 312.0 L1162.4 316.4 L1162.1 321.0 L1163.0 325.0 L1166.7 327.0 L1168.1 332.8 L1170.6 335.0 L1172.0 340.0 L1172.4 345.1 L1169.6 349.7 L1167.9 352.2 L1167.2 354.8 L1168.0 360.0 L1169.3 364.8 L1169.5 367.0 L1170.6 371.8 L1170.8 375.7 L1172.0 380.0 L1170.1 383.3 L1167.1 387.5 L1165.9 392.4 L1165.0 395.0 L1162.7 397.2 L1156.4 397.4 L1153.9 397.7 L1149.0 400.0 L1152.0 406.0 L1156.5 405.7 L1160.6 409.0 L1163.2 410.6 L1166.9 411.3 L1169.0 413.0 L1167.1 415.9 L1169.3 422.8 L1168.0 425.0 L1169.2 428.2 L1173.6 430.8 L1173.7 435.8 L1177.0 438.0 L1178.0 440.1 L1182.4 443.5 L1186.2 446.2 L1187.0 449.0 L1185.9 451.3 L1186.7 454.3 L1182.9 459.0 L1184.0 463.0 L1183.8 465.4 L1181.2 468.1 L1180.0 473.0 L1175.8 475.9 L1174.6 473.9 L1171.5 476.5 L1165.0 477.3 L1163.0 479.0 L1161.3 478.8 L1157.0 482.7 L1154.1 483.0 L1149.0 483.0 L1146.6 483.0 L1141.7 487.8 L1137.1 485.7 L1133.0 489.0 L1130.0 495.0 L1132.7 498.3 L1137.0 502.0 L1139.7 505.9 L1141.8 506.1 L1146.0 511.0 L1146.9 516.5 L1146.6 519.0 L1147.0 522.0 L1150.3 525.2 L1152.0 527.0 L1156.1 528.2 L1158.0 533.0 L1154.0 536.0 L1157.9 537.9 L1159.9 541.4 L1162.0 544.0 L1167.8 545.8 L1171.3 545.6 L1173.2 550.4 L1176.0 551.0 L1173.4 554.4 L1169.0 557.1 L1165.9 559.3 L1165.0 562.0 L1160.5 564.3 L1158.0 567.1 L1155.3 571.7 L1154.0 574.0 L1155.1 578.8 L1157.2 582.3 L1157.4 585.3 L1158.0 589.0 L1159.0 592.4 L1157.5 595.9 L1158.0 600.0 L1158.8 601.5 L1163.7 604.8 L1165.5 606.3 L1167.1 611.8 L1171.0 613.0 L1174.5 615.3 L1177.4 618.9 L1179.1 620.1 L1182.3 624.0 L1183.0 627.0 L1184.8 627.0 L1187.7 628.3 L1193.7 632.9 L1194.9 632.6 L1199.0 635.0 L1204.6 635.0 L1208.5 638.2 L1211.0 638.0 L1214.2 636.6 L1217.6 635.0 L1222.3 634.9 L1225.0 633.0 L1231.2 630.6 L1232.9 631.1 L1238.0 630.0 L1240.6 635.4 L1241.0 637.0 L1241.2 639.1 L1240.0 643.1 L1237.7 646.2 L1235.2 651.1 L1236.0 655.0 L1235.4 657.2 L1230.2 661.7 L1229.2 662.4 L1228.0 667.0 L1225.9 672.8 L1227.5 675.7 L1225.0 680.0 L1221.2 682.4 L1217.1 682.9 L1214.0 685.0 L1210.7 687.3 L1206.8 688.6 L1201.0 690.0 L1198.9 692.6 L1193.3 693.2 L1191.0 694.0 L1186.9 694.4 L1181.3 696.9 L1178.0 699.0 L1176.0 704.0 L1176.2 706.2 L1173.0 712.0 L1171.8 710.4 L1166.6 705.8 L1164.0 702.0 L1158.0 700.0 L1156.5 702.3 L1154.6 708.9 L1154.6 712.0 L1154.0 714.1 L1154.0 720.0 L1149.3 719.8 L1147.1 720.1 L1141.0 720.0 L1138.8 720.3 L1134.3 721.4 L1129.0 722.0 L1124.0 726.0 L1118.2 727.6 L1116.7 726.3 L1111.8 724.1 L1109.4 724.3 L1104.0 726.0 L1098.2 725.7 L1094.6 722.7 L1091.0 722.0 L1085.9 721.4 L1083.6 720.4 L1076.8 720.7 L1074.0 720.0 L1070.9 724.5 L1067.3 725.7 L1066.2 730.2 L1064.0 732.0 L1059.3 734.1 L1057.0 734.0 L1054.6 732.9 L1053.0 729.2 L1050.0 725.4 L1047.6 723.3 L1044.0 722.0 L1040.5 719.5 L1038.2 719.1 L1033.3 718.3 L1029.0 717.0 L1031.4 712.5 L1033.4 709.9 L1034.0 707.0 L1037.9 706.3 L1041.3 703.3 L1044.0 700.0 L1040.0 697.0 L1036.0 698.6 L1033.6 700.4 L1026.2 701.5 L1024.0 704.0 L1020.4 702.2 L1015.5 704.3 L1012.3 705.7 L1010.0 704.0 L1005.2 701.6 L1001.8 700.2 L1000.0 699.0 L994.6 698.3 L991.5 695.2 L988.7 694.1 L984.8 696.1 L981.5 694.0 L979.2 692.8 L975.0 691.0 L974.8 686.8 L975.0 683.0 L975.9 678.1 L973.9 674.5 L974.2 672.4 L974.8 668.8 L976.9 664.5 L977.0 662.0 L977.2 658.5 L975.3 655.1 L973.7 651.7 L975.0 648.0 L972.2 646.5 L972.0 641.7 L969.1 636.8 L967.3 634.6 L967.0 632.0 L966.8 628.5 L969.0 622.0 L970.2 618.0 L972.6 614.2 L975.0 611.0 L969.8 611.7 L968.3 611.3 L963.0 611.0 L958.6 613.4 L954.6 614.4 L953.0 615.0 L949.5 615.6 L948.3 616.9 L942.6 620.9 L940.0 622.0 L936.9 618.7 L935.4 612.1 L936.0 609.0 L933.4 607.3 L929.4 607.7 L924.0 609.0 L922.0 615.0 L918.2 612.2 L915.9 611.5 L912.0 609.0 L907.4 606.8 L905.3 607.9 L902.0 605.0 L899.9 609.6 L898.0 613.0 L896.2 611.0 L893.3 607.2 L889.0 605.0 L887.4 606.0 L882.9 608.3 L882.8 611.3 L879.0 615.0 L875.3 612.8 L871.0 610.4 L868.0 610.2 L864.7 609.3 L861.0 607.0 L861.6 603.5 L859.6 598.6 L858.1 595.5 L858.6 591.2 L857.0 589.0 L855.1 585.0 L854.8 581.8 L851.8 579.3 L850.0 575.2 L848.9 573.2 L846.0 571.0 L844.6 567.1 L845.6 562.7 L843.1 556.7 L842.0 554.0 L838.5 549.3 L838.9 545.2 L836.4 542.9 L833.0 540.0 L830.8 537.9 L828.1 535.6 L822.0 533.5 L820.0 532.0 L816.9 531.2 L813.0 533.0 L809.5 535.3 L803.1 536.8 L801.0 536.0 L798.9 532.8 L799.6 529.5 L798.2 526.4 L795.0 522.0 L794.5 520.0 L791.0 515.0 L789.0 513.0 L785.5 515.9 L779.3 517.5 L777.0 518.0 L773.7 520.9 L771.0 526.0 L765.1 527.6 L762.1 525.6 L758.0 528.0 L756.2 529.9 L755.6 533.9 L755.3 537.2 L752.9 543.1 L754.0 546.0 L751.7 546.2 L744.6 546.4 L742.0 544.0 L741.8 542.2 L738.6 537.1 L737.9 535.4 L736.0 530.0 L733.7 528.3 L728.0 528.0 L724.2 525.4 L725.0 520.4 L722.0 519.0 L720.2 519.7 L716.2 524.6 L714.0 524.9 L709.0 528.0 L707.7 530.1 L707.1 536.9 L706.6 536.8 L702.2 544.1 L704.0 546.7 L702.0 549.1 L700.2 554.4 L698.1 556.0 L697.0 560.0 L692.2 559.8 L689.3 559.0 L683.6 558.9 L681.0 560.0 L675.2 560.0 L672.0 563.7 L668.0 564.0 L665.3 561.3 L663.3 557.5 L661.0 554.0 L662.4 548.7 L661.1 545.2 L659.5 542.5 L660.0 538.0 L660.5 532.2 L656.6 531.6 L656.0 526.0 L653.5 521.5 L652.3 515.9 L652.0 513.0 L653.8 510.4 L654.6 505.8 L655.0 501.0 L656.9 499.0 L659.7 493.3 L663.0 491.0 L665.4 486.5 L668.3 484.0 L669.0 481.0 L667.0 475.0 L670.6 472.5 L673.2 467.7 L672.6 466.4 L674.8 463.2 L678.0 460.0 L678.7 457.0 L682.4 454.2 L683.0 449.0 L687.3 447.1 L689.1 449.1 L694.1 445.3 L697.0 446.0 L697.4 441.6 L697.6 437.2 L697.7 434.4 L698.0 433.3 L696.0 428.0 L695.8 425.7 L697.0 422.7 L697.7 418.1 L700.3 412.3 L699.4 412.2 L700.0 407.0 L699.9 405.4 L696.7 401.6 L695.8 397.4 L690.8 395.5 L692.0 391.2 L689.4 386.4 L687.0 385.0 L691.2 382.5 L690.9 379.4 L693.8 377.2 L697.1 376.0 L701.1 371.3 L702.7 371.4 L705.0 368.0 L704.2 363.9 L703.1 361.0 L703.1 358.1 L702.5 355.7 L704.7 349.3 L704.0 347.0 L703.5 342.4 L702.6 340.8 L703.5 336.2 L702.5 332.5 L699.4 330.2 L699.2 325.7 L700.0 321.0 L697.0 320.5 L693.0 318.2 L692.5 314.6 L687.2 314.9 L684.8 311.3 L682.3 310.8 L679.0 308.0 L675.1 305.3 L675.0 299.0 Z M946 598 L955 592 L966 597 L963 605 L950 610 L944 604 Z" fill="rgba(255,255,255,0.32)" stroke="none"/>
<path d="M675.0 293.0 L678.5 288.3 L678.7 286.2 L682.0 281.0 L683.4 278.4 L688.0 276.4 L689.3 274.0 L693.5 272.3 L694.6 270.2 L698.0 267.2 L702.2 264.8 L705.0 261.0 L706.3 256.3 L710.0 253.0 L711.7 252.6 L716.6 249.0 L718.5 247.1 L721.7 247.5 L725.9 246.6 L727.7 245.6 L734.4 243.8 L736.7 242.8 L739.0 240.0 L741.8 239.5 L746.1 240.4 L752.0 239.0 L754.6 240.5 L756.8 246.1 L759.7 246.6 L762.0 251.0 L767.5 249.7 L770.9 253.6 L774.4 253.9 L777.3 251.5 L781.0 253.0 L784.6 254.7 L789.5 254.1 L793.9 253.5 L796.0 256.0 L799.2 251.7 L802.0 252.9 L804.3 250.3 L809.0 246.0 L813.0 246.0 L816.3 250.3 L814.9 253.1 L819.1 255.3 L819.4 258.8 L822.0 264.0 L824.8 269.1 L826.6 272.0 L826.8 272.8 L828.0 278.0 L831.2 280.4 L835.5 279.0 L835.9 280.6 L842.6 282.0 L843.8 284.8 L849.0 284.9 L849.8 288.7 L854.0 289.0 L852.6 291.2 L852.5 297.7 L853.5 299.5 L854.2 304.8 L855.6 306.9 L855.0 310.0 L852.7 311.9 L851.8 314.0 L848.7 317.5 L846.0 321.0 L846.8 324.8 L848.2 329.3 L851.0 333.0 L853.4 331.7 L857.6 332.4 L864.4 334.5 L867.7 336.1 L869.7 337.2 L875.0 336.0 L879.6 334.8 L885.0 334.0 L887.0 331.7 L890.0 326.8 L892.2 324.7 L892.1 323.4 L896.4 320.4 L897.0 316.0 L900.2 317.7 L905.8 318.1 L909.5 318.3 L912.3 317.5 L917.4 316.8 L920.2 316.5 L924.0 317.0 L927.8 319.7 L929.7 323.6 L932.0 325.9 L932.0 330.5 L936.0 333.0 L935.7 328.8 L939.1 324.0 L940.6 322.3 L940.2 319.0 L939.3 312.9 L942.0 311.0 L944.1 307.7 L945.0 305.0 L944.9 298.8 L948.8 294.8 L948.3 293.3 L951.2 287.7 L951.5 284.0 L952.0 282.0 L955.8 282.6 L961.3 280.6 L964.9 281.2 L967.6 284.5 L973.3 281.2 L976.0 283.0 L977.4 283.2 L983.6 285.2 L986.8 290.2 L989.0 291.0 L993.2 296.0 L995.5 298.9 L998.0 301.0 L999.8 305.3 L999.7 308.5 L1003.0 312.0 L1008.5 314.2 L1011.1 316.1 L1014.0 320.0 L1017.2 317.4 L1021.5 313.8 L1023.6 310.6 L1027.0 309.0 L1030.3 313.7 L1032.6 315.6 L1036.0 318.0 L1039.9 317.5 L1044.1 318.2 L1047.0 320.0 L1050.3 319.3 L1052.0 315.5 L1055.1 312.9 L1057.4 309.8 L1062.5 306.1 L1063.8 303.6 L1065.9 302.8 L1071.4 299.7 L1073.0 297.0 L1076.3 298.7 L1080.0 302.0 L1078.7 307.3 L1079.3 310.0 L1079.0 313.0 L1082.5 311.4 L1085.8 311.6 L1092.0 312.0 L1091.7 316.6 L1092.0 321.0 L1088.9 322.6 L1086.4 323.8 L1082.2 324.7 L1078.2 324.2 L1076.1 326.7 L1071.0 326.0 L1066.9 329.1 L1063.4 330.3 L1060.0 331.0 L1058.7 335.4 L1061.0 339.0 L1066.7 338.0 L1070.4 338.2 L1071.2 335.1 L1077.0 336.0 L1080.4 336.0 L1085.6 332.9 L1090.4 330.2 L1093.0 329.0 L1095.1 326.6 L1101.4 323.3 L1103.2 321.6 L1106.1 318.7 L1110.0 318.0 L1114.9 315.7 L1117.8 314.1 L1119.7 312.2 L1123.7 312.7 L1126.4 310.2 L1130.0 310.0 L1134.5 307.2 L1139.6 307.9 L1142.4 306.7 L1144.2 304.2 L1150.0 305.0 L1154.2 307.3 L1155.8 309.8 L1160.0 312.0 L1162.4 316.4 L1162.1 321.0 L1163.0 325.0 L1166.7 327.0 L1168.1 332.8 L1170.6 335.0 L1172.0 340.0 L1172.4 345.1 L1169.6 349.7 L1167.9 352.2 L1167.2 354.8 L1168.0 360.0 L1169.3 364.8 L1169.5 367.0 L1170.6 371.8 L1170.8 375.7 L1172.0 380.0 L1170.1 383.3 L1167.1 387.5 L1165.9 392.4 L1165.0 395.0 L1162.7 397.2 L1156.4 397.4 L1153.9 397.7 L1149.0 400.0 L1152.0 406.0 L1156.5 405.7 L1160.6 409.0 L1163.2 410.6 L1166.9 411.3 L1169.0 413.0 L1167.1 415.9 L1169.3 422.8 L1168.0 425.0 L1169.2 428.2 L1173.6 430.8 L1173.7 435.8 L1177.0 438.0 L1178.0 440.1 L1182.4 443.5 L1186.2 446.2 L1187.0 449.0 L1185.9 451.3 L1186.7 454.3 L1182.9 459.0 L1184.0 463.0 L1183.8 465.4 L1181.2 468.1 L1180.0 473.0 L1175.8 475.9 L1174.6 473.9 L1171.5 476.5 L1165.0 477.3 L1163.0 479.0 L1161.3 478.8 L1157.0 482.7 L1154.1 483.0 L1149.0 483.0 L1146.6 483.0 L1141.7 487.8 L1137.1 485.7 L1133.0 489.0 L1130.0 495.0 L1132.7 498.3 L1137.0 502.0 L1139.7 505.9 L1141.8 506.1 L1146.0 511.0 L1146.9 516.5 L1146.6 519.0 L1147.0 522.0 L1150.3 525.2 L1152.0 527.0 L1156.1 528.2 L1158.0 533.0 L1154.0 536.0 L1157.9 537.9 L1159.9 541.4 L1162.0 544.0 L1167.8 545.8 L1171.3 545.6 L1173.2 550.4 L1176.0 551.0 L1173.4 554.4 L1169.0 557.1 L1165.9 559.3 L1165.0 562.0 L1160.5 564.3 L1158.0 567.1 L1155.3 571.7 L1154.0 574.0 L1155.1 578.8 L1157.2 582.3 L1157.4 585.3 L1158.0 589.0 L1159.0 592.4 L1157.5 595.9 L1158.0 600.0 L1158.8 601.5 L1163.7 604.8 L1165.5 606.3 L1167.1 611.8 L1171.0 613.0 L1174.5 615.3 L1177.4 618.9 L1179.1 620.1 L1182.3 624.0 L1183.0 627.0 L1184.8 627.0 L1187.7 628.3 L1193.7 632.9 L1194.9 632.6 L1199.0 635.0 L1204.6 635.0 L1208.5 638.2 L1211.0 638.0 L1214.2 636.6 L1217.6 635.0 L1222.3 634.9 L1225.0 633.0 L1231.2 630.6 L1232.9 631.1 L1238.0 630.0 L1240.6 635.4 L1241.0 637.0 L1241.2 639.1 L1240.0 643.1 L1237.7 646.2 L1235.2 651.1 L1236.0 655.0 L1235.4 657.2 L1230.2 661.7 L1229.2 662.4 L1228.0 667.0 L1225.9 672.8 L1227.5 675.7 L1225.0 680.0 L1221.2 682.4 L1217.1 682.9 L1214.0 685.0 L1210.7 687.3 L1206.8 688.6 L1201.0 690.0 L1198.9 692.6 L1193.3 693.2 L1191.0 694.0 L1186.9 694.4 L1181.3 696.9 L1178.0 699.0 L1176.0 704.0 L1176.2 706.2 L1173.0 712.0 L1171.8 710.4 L1166.6 705.8 L1164.0 702.0 L1158.0 700.0 L1156.5 702.3 L1154.6 708.9 L1154.6 712.0 L1154.0 714.1 L1154.0 720.0 L1149.3 719.8 L1147.1 720.1 L1141.0 720.0 L1138.8 720.3 L1134.3 721.4 L1129.0 722.0 L1124.0 726.0 L1118.2 727.6 L1116.7 726.3 L1111.8 724.1 L1109.4 724.3 L1104.0 726.0 L1098.2 725.7 L1094.6 722.7 L1091.0 722.0 L1085.9 721.4 L1083.6 720.4 L1076.8 720.7 L1074.0 720.0 L1070.9 724.5 L1067.3 725.7 L1066.2 730.2 L1064.0 732.0 L1059.3 734.1 L1057.0 734.0 L1054.6 732.9 L1053.0 729.2 L1050.0 725.4 L1047.6 723.3 L1044.0 722.0 L1040.5 719.5 L1038.2 719.1 L1033.3 718.3 L1029.0 717.0 L1031.4 712.5 L1033.4 709.9 L1034.0 707.0 L1037.9 706.3 L1041.3 703.3 L1044.0 700.0 L1040.0 697.0 L1036.0 698.6 L1033.6 700.4 L1026.2 701.5 L1024.0 704.0 L1020.4 702.2 L1015.5 704.3 L1012.3 705.7 L1010.0 704.0 L1005.2 701.6 L1001.8 700.2 L1000.0 699.0 L994.6 698.3 L991.5 695.2 L988.7 694.1 L984.8 696.1 L981.5 694.0 L979.2 692.8 L975.0 691.0 L974.8 686.8 L975.0 683.0 L975.9 678.1 L973.9 674.5 L974.2 672.4 L974.8 668.8 L976.9 664.5 L977.0 662.0 L977.2 658.5 L975.3 655.1 L973.7 651.7 L975.0 648.0 L972.2 646.5 L972.0 641.7 L969.1 636.8 L967.3 634.6 L967.0 632.0 L966.8 628.5 L969.0 622.0 L970.2 618.0 L972.6 614.2 L975.0 611.0 L969.8 611.7 L968.3 611.3 L963.0 611.0 L958.6 613.4 L954.6 614.4 L953.0 615.0 L949.5 615.6 L948.3 616.9 L942.6 620.9 L940.0 622.0 L936.9 618.7 L935.4 612.1 L936.0 609.0 L933.4 607.3 L929.4 607.7 L924.0 609.0 L922.0 615.0 L918.2 612.2 L915.9 611.5 L912.0 609.0 L907.4 606.8 L905.3 607.9 L902.0 605.0 L899.9 609.6 L898.0 613.0 L896.2 611.0 L893.3 607.2 L889.0 605.0 L887.4 606.0 L882.9 608.3 L882.8 611.3 L879.0 615.0 L875.3 612.8 L871.0 610.4 L868.0 610.2 L864.7 609.3 L861.0 607.0 L861.6 603.5 L859.6 598.6 L858.1 595.5 L858.6 591.2 L857.0 589.0 L855.1 585.0 L854.8 581.8 L851.8 579.3 L850.0 575.2 L848.9 573.2 L846.0 571.0 L844.6 567.1 L845.6 562.7 L843.1 556.7 L842.0 554.0 L838.5 549.3 L838.9 545.2 L836.4 542.9 L833.0 540.0 L830.8 537.9 L828.1 535.6 L822.0 533.5 L820.0 532.0 L816.9 531.2 L813.0 533.0 L809.5 535.3 L803.1 536.8 L801.0 536.0 L798.9 532.8 L799.6 529.5 L798.2 526.4 L795.0 522.0 L794.5 520.0 L791.0 515.0 L789.0 513.0 L785.5 515.9 L779.3 517.5 L777.0 518.0 L773.7 520.9 L771.0 526.0 L765.1 527.6 L762.1 525.6 L758.0 528.0 L756.2 529.9 L755.6 533.9 L755.3 537.2 L752.9 543.1 L754.0 546.0 L751.7 546.2 L744.6 546.4 L742.0 544.0 L741.8 542.2 L738.6 537.1 L737.9 535.4 L736.0 530.0 L733.7 528.3 L728.0 528.0 L724.2 525.4 L725.0 520.4 L722.0 519.0 L720.2 519.7 L716.2 524.6 L714.0 524.9 L709.0 528.0 L707.7 530.1 L707.1 536.9 L706.6 536.8 L702.2 544.1 L704.0 546.7 L702.0 549.1 L700.2 554.4 L698.1 556.0 L697.0 560.0 L692.2 559.8 L689.3 559.0 L683.6 558.9 L681.0 560.0 L675.2 560.0 L672.0 563.7 L668.0 564.0 L665.3 561.3 L663.3 557.5 L661.0 554.0 L662.4 548.7 L661.1 545.2 L659.5 542.5 L660.0 538.0 L660.5 532.2 L656.6 531.6 L656.0 526.0 L653.5 521.5 L652.3 515.9 L652.0 513.0 L653.8 510.4 L654.6 505.8 L655.0 501.0 L656.9 499.0 L659.7 493.3 L663.0 491.0 L665.4 486.5 L668.3 484.0 L669.0 481.0 L667.0 475.0 L670.6 472.5 L673.2 467.7 L672.6 466.4 L674.8 463.2 L678.0 460.0 L678.7 457.0 L682.4 454.2 L683.0 449.0 L687.3 447.1 L689.1 449.1 L694.1 445.3 L697.0 446.0 L697.4 441.6 L697.6 437.2 L697.7 434.4 L698.0 433.3 L696.0 428.0 L695.8 425.7 L697.0 422.7 L697.7 418.1 L700.3 412.3 L699.4 412.2 L700.0 407.0 L699.9 405.4 L696.7 401.6 L695.8 397.4 L690.8 395.5 L692.0 391.2 L689.4 386.4 L687.0 385.0 L691.2 382.5 L690.9 379.4 L693.8 377.2 L697.1 376.0 L701.1 371.3 L702.7 371.4 L705.0 368.0 L704.2 363.9 L703.1 361.0 L703.1 358.1 L702.5 355.7 L704.7 349.3 L704.0 347.0 L703.5 342.4 L702.6 340.8 L703.5 336.2 L702.5 332.5 L699.4 330.2 L699.2 325.7 L700.0 321.0 L697.0 320.5 L693.0 318.2 L692.5 314.6 L687.2 314.9 L684.8 311.3 L682.3 310.8 L679.0 308.0 L675.1 305.3 L675.0 299.0 Z M946 598 L955 592 L966 597 L963 605 L950 610 L944 604 Z" fill="none" stroke="#3A8DD6" stroke-width="2" stroke-linejoin="round"/>
<use href="#mC" x="756.2" y="261.2" width="21.5" height="21.5"/><use href="#mO" x="690.2" y="275.2" width="21.5" height="21.5"/><use href="#mV" x="1114.2" y="285.2" width="21.5" height="21.5"/><use href="#mC" x="1128.2" y="288.2" width="21.5" height="21.5"/><use href="#mO" x="1053.2" y="293.2" width="21.5" height="21.5"/><use href="#mC" x="1111.2" y="293.2" width="21.5" height="21.5"/><use href="#mC" x="1125.2" y="296.2" width="21.5" height="21.5"/><use href="#mC" x="1091.2" y="297.2" width="21.5" height="21.5"/><use href="#mC" x="735.2" y="300.2" width="21.5" height="21.5"/><use href="#mO" x="1114.2" y="302.2" width="21.5" height="21.5"/><use href="#mO" x="825.2" y="303.2" width="21.5" height="21.5"/><use href="#mC" x="1046.2" y="304.2" width="21.5" height="21.5"/><use href="#mC" x="1138.2" y="306.2" width="21.5" height="21.5"/><use href="#mO" x="718.2" y="308.2" width="21.5" height="21.5"/><use href="#mV" x="1144.2" y="309.2" width="21.5" height="21.5"/><use href="#mC" x="1089.2" y="312.2" width="21.5" height="21.5"/><use href="#mC" x="1111.2" y="313.2" width="21.5" height="21.5"/><use href="#mV" x="982.2" y="315.2" width="21.5" height="21.5"/><use href="#mC" x="1096.2" y="315.2" width="21.5" height="21.5"/><use href="#mV" x="748.2" y="318.2" width="21.5" height="21.5"/><use href="#mV" x="1128.2" y="320.2" width="21.5" height="21.5"/><use href="#mC" x="816.2" y="325.2" width="21.5" height="21.5"/><use href="#mC" x="1120.2" y="326.2" width="21.5" height="21.5"/><use href="#mC" x="885.2" y="328.2" width="21.5" height="21.5"/><use href="#mC" x="1105.2" y="328.2" width="21.5" height="21.5"/><use href="#mV" x="1139.2" y="328.2" width="21.5" height="21.5"/><use href="#mA" x="781.2" y="335.2" width="21.5" height="21.5"/><use href="#mV" x="1139.2" y="336.2" width="21.5" height="21.5"/><use href="#mV" x="1123.2" y="337.2" width="21.5" height="21.5"/><use href="#mO" x="1060.2" y="338.2" width="21.5" height="21.5"/><use href="#mO" x="1154.2" y="340.2" width="21.5" height="21.5"/><use href="#mC" x="1101.2" y="342.2" width="21.5" height="21.5"/><use href="#mC" x="1116.2" y="342.2" width="21.5" height="21.5"/><use href="#mC" x="751.2" y="344.2" width="21.5" height="21.5"/><use href="#mC" x="1082.2" y="344.2" width="21.5" height="21.5"/><use href="#mS" x="1141.2" y="349.2" width="21.5" height="21.5"/><use href="#mV" x="1150.2" y="350.2" width="21.5" height="21.5"/><use href="#mC" x="710.2" y="351.2" width="21.5" height="21.5"/><use href="#mV" x="1146.2" y="355.2" width="21.5" height="21.5"/><use href="#mV" x="1127.2" y="356.2" width="21.5" height="21.5"/><use href="#mC" x="1098.2" y="356.2" width="21.5" height="21.5"/><use href="#mC" x="1084.2" y="356.2" width="21.5" height="21.5"/><use href="#mC" x="845.2" y="359.2" width="21.5" height="21.5"/><use href="#mV" x="884.2" y="359.2" width="21.5" height="21.5"/><use href="#mV" x="1035.2" y="359.2" width="21.5" height="21.5"/><use href="#mC" x="1122.2" y="359.2" width="21.5" height="21.5"/><use href="#mV" x="954.2" y="364.2" width="21.5" height="21.5"/><use href="#mC" x="1142.2" y="364.2" width="21.5" height="21.5"/><use href="#mC" x="1078.2" y="365.2" width="21.5" height="21.5"/><use href="#mV" x="1142.2" y="365.2" width="21.5" height="21.5"/><use href="#mV" x="927.2" y="366.2" width="21.5" height="21.5"/><use href="#mC" x="1117.2" y="366.2" width="21.5" height="21.5"/><use href="#mV" x="1069.2" y="369.2" width="21.5" height="21.5"/><use href="#mC" x="1092.2" y="369.2" width="21.5" height="21.5"/><use href="#mV" x="1063.2" y="371.2" width="21.5" height="21.5"/><use href="#mC" x="810.2" y="373.2" width="21.5" height="21.5"/><use href="#mO" x="798.2" y="376.2" width="21.5" height="21.5"/><use href="#mV" x="823.2" y="379.2" width="21.5" height="21.5"/><use href="#mO" x="1106.2" y="379.2" width="21.5" height="21.5"/><use href="#mC" x="1129.2" y="379.2" width="21.5" height="21.5"/><use href="#mO" x="1113.2" y="379.2" width="21.5" height="21.5"/><use href="#mC" x="1089.2" y="381.2" width="21.5" height="21.5"/><use href="#mC" x="1074.2" y="382.2" width="21.5" height="21.5"/><use href="#mA" x="750.2" y="385.2" width="21.5" height="21.5"/><use href="#mC" x="960.2" y="386.2" width="21.5" height="21.5"/><use href="#mO" x="916.2" y="386.2" width="21.5" height="21.5"/><use href="#mA" x="929.2" y="387.2" width="21.5" height="21.5"/><use href="#mV" x="1062.2" y="390.2" width="21.5" height="21.5"/><use href="#mS" x="845.2" y="391.2" width="21.5" height="21.5"/><use href="#mC" x="741.2" y="391.2" width="21.5" height="21.5"/><use href="#mO" x="1027.2" y="393.2" width="21.5" height="21.5"/><use href="#mV" x="1046.2" y="394.2" width="21.5" height="21.5"/><use href="#mA" x="1108.2" y="396.2" width="21.5" height="21.5"/><use href="#mO" x="840.2" y="397.2" width="21.5" height="21.5"/><use href="#mC" x="824.2" y="397.2" width="21.5" height="21.5"/><use href="#mV" x="901.2" y="398.2" width="21.5" height="21.5"/><use href="#mC" x="1084.2" y="398.2" width="21.5" height="21.5"/><use href="#mS" x="1039.2" y="401.2" width="21.5" height="21.5"/><use href="#mV" x="762.2" y="404.2" width="21.5" height="21.5"/><use href="#mV" x="706.2" y="404.2" width="21.5" height="21.5"/><use href="#mC" x="1062.2" y="404.2" width="21.5" height="21.5"/><use href="#mV" x="1131.2" y="404.2" width="21.5" height="21.5"/><use href="#mO" x="895.2" y="407.2" width="21.5" height="21.5"/><use href="#mC" x="1063.2" y="409.2" width="21.5" height="21.5"/><use href="#mC" x="740.2" y="411.2" width="21.5" height="21.5"/><use href="#mO" x="712.2" y="411.2" width="21.5" height="21.5"/><use href="#mV" x="806.2" y="411.2" width="21.5" height="21.5"/><use href="#mV" x="733.2" y="412.2" width="21.5" height="21.5"/><use href="#mC" x="699.2" y="414.2" width="21.5" height="21.5"/><use href="#mO" x="838.2" y="416.2" width="21.5" height="21.5"/><use href="#mO" x="1132.2" y="416.2" width="21.5" height="21.5"/><use href="#mV" x="871.2" y="418.2" width="21.5" height="21.5"/><use href="#mC" x="1039.2" y="418.2" width="21.5" height="21.5"/><use href="#mV" x="1117.2" y="418.2" width="21.5" height="21.5"/><use href="#mV" x="1073.2" y="419.2" width="21.5" height="21.5"/><use href="#mO" x="895.2" y="420.2" width="21.5" height="21.5"/><use href="#mC" x="758.2" y="421.2" width="21.5" height="21.5"/><use href="#mV" x="800.2" y="421.2" width="21.5" height="21.5"/><use href="#mC" x="725.2" y="422.2" width="21.5" height="21.5"/><use href="#mA" x="822.2" y="422.2" width="21.5" height="21.5"/><use href="#mV" x="1098.2" y="422.2" width="21.5" height="21.5"/><use href="#mA" x="934.2" y="425.2" width="21.5" height="21.5"/><use href="#mC" x="1006.2" y="426.2" width="21.5" height="21.5"/><use href="#mV" x="1147.2" y="428.2" width="21.5" height="21.5"/><use href="#mC" x="1158.2" y="432.2" width="21.5" height="21.5"/><use href="#mS" x="869.2" y="434.2" width="21.5" height="21.5"/><use href="#mC" x="908.2" y="434.2" width="21.5" height="21.5"/><use href="#mA" x="884.2" y="435.2" width="21.5" height="21.5"/><use href="#mV" x="1120.2" y="435.2" width="21.5" height="21.5"/><use href="#mV" x="1083.2" y="435.2" width="21.5" height="21.5"/><use href="#mV" x="1115.2" y="435.2" width="21.5" height="21.5"/><use href="#mV" x="752.2" y="437.2" width="21.5" height="21.5"/><use href="#mV" x="697.2" y="437.2" width="21.5" height="21.5"/><use href="#mC" x="1037.2" y="437.2" width="21.5" height="21.5"/><use href="#mV" x="1089.2" y="437.2" width="21.5" height="21.5"/><use href="#mO" x="1065.2" y="438.2" width="21.5" height="21.5"/><use href="#mO" x="918.2" y="439.2" width="21.5" height="21.5"/><use href="#mC" x="844.2" y="441.2" width="21.5" height="21.5"/><use href="#mV" x="1128.2" y="441.2" width="21.5" height="21.5"/><use href="#mC" x="900.2" y="442.2" width="21.5" height="21.5"/><use href="#mC" x="738.2" y="443.2" width="21.5" height="21.5"/><use href="#mV" x="677.2" y="446.2" width="21.5" height="21.5"/><use href="#mS" x="1144.2" y="449.2" width="21.5" height="21.5"/><use href="#mV" x="1109.2" y="450.2" width="21.5" height="21.5"/><use href="#mS" x="1131.2" y="451.2" width="21.5" height="21.5"/><use href="#mC" x="835.2" y="452.2" width="21.5" height="21.5"/><use href="#mS" x="1150.2" y="454.2" width="21.5" height="21.5"/><use href="#mC" x="1076.2" y="456.2" width="21.5" height="21.5"/><use href="#mC" x="885.2" y="457.2" width="21.5" height="21.5"/><use href="#mV" x="912.2" y="459.2" width="21.5" height="21.5"/><use href="#mC" x="1147.2" y="459.2" width="21.5" height="21.5"/><use href="#mV" x="1052.2" y="459.2" width="21.5" height="21.5"/><use href="#mC" x="1159.2" y="459.2" width="21.5" height="21.5"/><use href="#mO" x="898.2" y="463.2" width="21.5" height="21.5"/><use href="#mC" x="1131.2" y="464.2" width="21.5" height="21.5"/><use href="#mV" x="1011.2" y="465.2" width="21.5" height="21.5"/><use href="#mC" x="848.2" y="467.2" width="21.5" height="21.5"/><use href="#mC" x="1084.2" y="467.2" width="21.5" height="21.5"/><use href="#mO" x="963.2" y="468.2" width="21.5" height="21.5"/><use href="#mC" x="1002.2" y="470.2" width="21.5" height="21.5"/><use href="#mO" x="800.2" y="474.2" width="21.5" height="21.5"/><use href="#mV" x="1061.2" y="474.2" width="21.5" height="21.5"/><use href="#mV" x="945.2" y="475.2" width="21.5" height="21.5"/><use href="#mV" x="780.2" y="476.2" width="21.5" height="21.5"/><use href="#mO" x="1097.2" y="476.2" width="21.5" height="21.5"/><use href="#mV" x="1040.2" y="477.2" width="21.5" height="21.5"/><use href="#mV" x="873.2" y="478.2" width="21.5" height="21.5"/><use href="#mA" x="1022.2" y="479.2" width="21.5" height="21.5"/><use href="#mC" x="719.2" y="482.2" width="21.5" height="21.5"/><use href="#mC" x="738.2" y="484.2" width="21.5" height="21.5"/><use href="#mO" x="941.2" y="488.2" width="21.5" height="21.5"/><use href="#mV" x="1085.2" y="488.2" width="21.5" height="21.5"/><use href="#mV" x="1065.2" y="488.2" width="21.5" height="21.5"/><use href="#mV" x="710.2" y="490.2" width="21.5" height="21.5"/><use href="#mV" x="853.2" y="490.2" width="21.5" height="21.5"/><use href="#mO" x="1007.2" y="490.2" width="21.5" height="21.5"/><use href="#mO" x="1049.2" y="491.2" width="21.5" height="21.5"/><use href="#mS" x="802.2" y="492.2" width="21.5" height="21.5"/><use href="#mA" x="831.2" y="494.2" width="21.5" height="21.5"/><use href="#mC" x="875.2" y="494.2" width="21.5" height="21.5"/><use href="#mC" x="1036.2" y="494.2" width="21.5" height="21.5"/><use href="#mV" x="1066.2" y="494.2" width="21.5" height="21.5"/><use href="#mS" x="695.2" y="495.2" width="21.5" height="21.5"/><use href="#mC" x="859.2" y="499.2" width="21.5" height="21.5"/><use href="#mO" x="985.2" y="500.2" width="21.5" height="21.5"/><use href="#mC" x="1106.2" y="500.2" width="21.5" height="21.5"/><use href="#mC" x="796.2" y="505.2" width="21.5" height="21.5"/><use href="#mV" x="841.2" y="505.2" width="21.5" height="21.5"/><use href="#mV" x="1131.2" y="506.2" width="21.5" height="21.5"/><use href="#mC" x="974.2" y="508.2" width="21.5" height="21.5"/><use href="#mO" x="1084.2" y="508.2" width="21.5" height="21.5"/><use href="#mC" x="1005.2" y="508.2" width="21.5" height="21.5"/><use href="#mV" x="810.2" y="510.2" width="21.5" height="21.5"/><use href="#mC" x="873.2" y="512.2" width="21.5" height="21.5"/><use href="#mO" x="852.2" y="513.2" width="21.5" height="21.5"/><use href="#mC" x="984.2" y="513.2" width="21.5" height="21.5"/><use href="#mC" x="973.2" y="513.2" width="21.5" height="21.5"/><use href="#mS" x="1121.2" y="514.2" width="21.5" height="21.5"/><use href="#mV" x="740.2" y="515.2" width="21.5" height="21.5"/><use href="#mC" x="664.2" y="516.2" width="21.5" height="21.5"/><use href="#mC" x="1016.2" y="516.2" width="21.5" height="21.5"/><use href="#mO" x="1033.2" y="521.2" width="21.5" height="21.5"/><use href="#mV" x="1103.2" y="521.2" width="21.5" height="21.5"/><use href="#mC" x="1152.2" y="522.2" width="21.5" height="21.5"/><use href="#mC" x="864.2" y="525.2" width="21.5" height="21.5"/><use href="#mO" x="879.2" y="527.2" width="21.5" height="21.5"/><use href="#mV" x="1129.2" y="527.2" width="21.5" height="21.5"/><use href="#mV" x="831.2" y="530.2" width="21.5" height="21.5"/><use href="#mV" x="977.2" y="531.2" width="21.5" height="21.5"/><use href="#mC" x="864.2" y="531.2" width="21.5" height="21.5"/><use href="#mC" x="1017.2" y="531.2" width="21.5" height="21.5"/><use href="#mO" x="880.2" y="532.2" width="21.5" height="21.5"/><use href="#mC" x="1056.2" y="535.2" width="21.5" height="21.5"/><use href="#mC" x="990.2" y="536.2" width="21.5" height="21.5"/><use href="#mO" x="1141.2" y="536.2" width="21.5" height="21.5"/><use href="#mC" x="1154.2" y="536.2" width="21.5" height="21.5"/><use href="#mC" x="1062.2" y="536.2" width="21.5" height="21.5"/><use href="#mV" x="1116.2" y="538.2" width="21.5" height="21.5"/><use href="#mV" x="959.2" y="541.2" width="21.5" height="21.5"/><use href="#mC" x="740.2" y="542.2" width="21.5" height="21.5"/><use href="#mC" x="1060.2" y="543.2" width="21.5" height="21.5"/><use href="#mV" x="1087.2" y="543.2" width="21.5" height="21.5"/><use href="#mV" x="873.2" y="546.2" width="21.5" height="21.5"/><use href="#mO" x="1135.2" y="547.2" width="21.5" height="21.5"/><use href="#mC" x="1022.2" y="548.2" width="21.5" height="21.5"/><use href="#mC" x="1009.2" y="553.2" width="21.5" height="21.5"/><use href="#mV" x="1119.2" y="553.2" width="21.5" height="21.5"/><use href="#mC" x="994.2" y="554.2" width="21.5" height="21.5"/><use href="#mC" x="1076.2" y="554.2" width="21.5" height="21.5"/><use href="#mV" x="1089.2" y="557.2" width="21.5" height="21.5"/><use href="#mV" x="1092.2" y="562.2" width="21.5" height="21.5"/><use href="#mA" x="1125.2" y="562.2" width="21.5" height="21.5"/><use href="#mS" x="1062.2" y="563.2" width="21.5" height="21.5"/><use href="#mV" x="887.2" y="564.2" width="21.5" height="21.5"/><use href="#mO" x="942.2" y="565.2" width="21.5" height="21.5"/><use href="#mC" x="966.2" y="566.2" width="21.5" height="21.5"/><use href="#mC" x="1022.2" y="569.2" width="21.5" height="21.5"/><use href="#mV" x="866.2" y="570.2" width="21.5" height="21.5"/><use href="#mC" x="1106.2" y="570.2" width="21.5" height="21.5"/><use href="#mC" x="882.2" y="573.2" width="21.5" height="21.5"/><use href="#mV" x="1084.2" y="573.2" width="21.5" height="21.5"/><use href="#mC" x="1092.2" y="580.2" width="21.5" height="21.5"/><use href="#mV" x="983.2" y="582.2" width="21.5" height="21.5"/><use href="#mC" x="1099.2" y="584.2" width="21.5" height="21.5"/><use href="#mV" x="864.2" y="586.2" width="21.5" height="21.5"/><use href="#mC" x="885.2" y="586.2" width="21.5" height="21.5"/><use href="#mV" x="998.2" y="587.2" width="21.5" height="21.5"/><use href="#mS" x="1080.2" y="589.2" width="21.5" height="21.5"/><use href="#mS" x="1120.2" y="589.2" width="21.5" height="21.5"/><use href="#mV" x="1029.2" y="593.2" width="21.5" height="21.5"/><use href="#mC" x="1098.2" y="598.2" width="21.5" height="21.5"/><use href="#mV" x="976.2" y="600.2" width="21.5" height="21.5"/><use href="#mC" x="1090.2" y="600.2" width="21.5" height="21.5"/><use href="#mS" x="1021.2" y="601.2" width="21.5" height="21.5"/><use href="#mV" x="1149.2" y="607.2" width="21.5" height="21.5"/><use href="#mV" x="1119.2" y="609.2" width="21.5" height="21.5"/><use href="#mC" x="1163.2" y="618.2" width="21.5" height="21.5"/><use href="#mC" x="976.2" y="619.2" width="21.5" height="21.5"/><use href="#mV" x="995.2" y="619.2" width="21.5" height="21.5"/><use href="#mV" x="963.2" y="625.2" width="21.5" height="21.5"/><use href="#mO" x="1211.2" y="630.2" width="21.5" height="21.5"/><use href="#mV" x="1141.2" y="631.2" width="21.5" height="21.5"/><use href="#mA" x="1152.2" y="634.2" width="21.5" height="21.5"/><use href="#mV" x="1189.2" y="642.2" width="21.5" height="21.5"/><use href="#mC" x="936.2" y="648.2" width="21.5" height="21.5"/><use href="#mV" x="973.2" y="651.2" width="21.5" height="21.5"/><use href="#mV" x="1035.2" y="653.2" width="21.5" height="21.5"/><use href="#mC" x="1022.2" y="658.2" width="21.5" height="21.5"/><use href="#mV" x="991.2" y="660.2" width="21.5" height="21.5"/><use href="#mC" x="1206.2" y="662.2" width="21.5" height="21.5"/><use href="#mV" x="1009.2" y="664.2" width="21.5" height="21.5"/><use href="#mV" x="1174.2" y="664.2" width="21.5" height="21.5"/><use href="#mA" x="1109.2" y="669.2" width="21.5" height="21.5"/><use href="#mV" x="1044.2" y="674.2" width="21.5" height="21.5"/><use href="#mS" x="1089.2" y="677.2" width="21.5" height="21.5"/><use href="#mV" x="1071.2" y="682.2" width="21.5" height="21.5"/><use href="#mV" x="1105.2" y="705.2" width="21.5" height="21.5"/>
<circle cx="442.5" cy="129" r="22.5" fill="#22A397"/>
<circle cx="442.5" cy="129" r="11" fill="none" stroke="#fff" stroke-width="1.6"/>
<circle cx="443.4" cy="124" r="1.3" fill="#fff"/>
<path d="M441.6 127.6 L443.4 127.6 L441.9 133.6 Q441.8 134.8 443.4 134" fill="none" stroke="#fff" stroke-width="1.7" stroke-linecap="round" stroke-linejoin="round"/>
</svg></div>
<div id="hdr">
 <div class="tb" style="left:978px;top:1px;width:122px;background:#00786B;color:#fff">Parc du TSS</div>
 <div class="tb" style="left:1110px;top:0px;width:109px">Patrimoine</div>
 <div class="tb" style="left:1229px;top:1px;width:130px">Offre &amp; Public</div>
 <div class="tb" style="left:1369px;top:3px;width:162px">Saisonnalité &amp; RH</div>
</div>
<div id="side">
 <div id="sbar"></div>
 <svg style="position:absolute;left:0;top:0" width="377" height="882" viewBox="0 0 377 882">
 <!-- UNAT -->
 <rect x="60" y="1" width="260.5" height="76" fill="#fff"/>
 <path d="M62 2.5h10v26a6 6 0 0 0 12 0v-26h10v26a16 16 0 0 1 -32 0z" fill="#0A64A4"/>
 <path d="M100.5 43.8v-25a16 16 0 0 1 32 0v25h-10v-25a6 6 0 0 0 -12 0v25z" fill="#0A64A4"/>
 <path d="M140 43.8v-25a16 16 0 0 1 32 0v25h-10v-15h-12v15z M150 15.5a6 6 0 0 0 12 0z" fill="#8DC220" fill-rule="evenodd"/>
 <path d="M178 2.5h29v9.5h-9.5v31.8h-10v-31.8h-9.5z" fill="#0A64A4"/>
 <path d="M228 2.5h88a2 2 0 0 1 2 2v27a12 12 0 0 1 -12 12h-93v-26a15 15 0 0 1 15 -15z" fill="#8DC220"/>
 <text x="263.3" y="20.8" text-anchor="middle" fill="#fff" stroke="#fff" stroke-width="0.3" style="font-size:13.6px" textLength="63.5" lengthAdjust="spacingAndGlyphs">Auvergne-</text>
 <text x="266.2" y="36.8" text-anchor="middle" fill="#fff" stroke="#fff" stroke-width="0.3" style="font-size:13.6px" textLength="79" lengthAdjust="spacingAndGlyphs">Rhône-Alpes</text>
 <text x="62.8" y="60.7" fill="#8DC220" stroke="#8DC220" stroke-width="0.35" style="font-size:12.8px" textLength="72.7" lengthAdjust="spacingAndGlyphs">Le tourisme</text>
 <text x="62" y="73" fill="#0A64A4" stroke="#0A64A4" stroke-width="0.35" style="font-size:12.5px" textLength="255" lengthAdjust="spacingAndGlyphs">au service des hommes et des territoires</text>
 <!-- ETUDE TSS -->
 <rect x="95" y="101" width="190" height="94" fill="#fff"/>
 <rect x="100.8" y="105.4" width="13" height="45.3" fill="#2F5243"/>
 <rect x="132" y="105.4" width="13.2" height="26.6" fill="#3E7A4F"/>
 <rect x="163.1" y="136.5" width="13.6" height="30.7" fill="#6DB88A"/>
 <rect x="194.9" y="114.4" width="13" height="13.3" fill="#1E1E1E"/>
 <rect x="226" y="105.4" width="13.1" height="26.6" fill="#4A6E8E"/>
 <rect x="257.2" y="123" width="13.3" height="49.8" fill="#1E1E1E"/>
 <text x="113" y="156.4" fill="#111" stroke="#111" stroke-width="0.8" style="font-size:33px;font-weight:bold" textLength="105" lengthAdjust="spacingAndGlyphs">ÉTUDE</text>
 <text x="221.5" y="156.4" fill="#E9674F" stroke="#E9674F" stroke-width="0.8" style="font-size:33px;font-weight:bold" textLength="58.5" lengthAdjust="spacingAndGlyphs">TSS</text>
 <text x="129.7" y="182.5" fill="#222" style="font-size:7px" textLength="149" lengthAdjust="spacingAndGlyphs">diagnostic et stratégies de développement</text>
 <text x="129.7" y="192" fill="#222" style="font-size:7px" textLength="104" lengthAdjust="spacingAndGlyphs">du tourisme social et solidaire</text>
 <!-- TSS-MAP -->
 <g fill="none" stroke-linecap="round" stroke-linejoin="round">
  <path d="M70.4 793.4 C74 780 86 764 100.4 760.5 C112 758 132 764 143.8 778.4" stroke="#7DAE88" stroke-width="10"/>
  <path d="M116.8 781.4 C130 783 150 792 157.2 805.4 C163 818 160 835 154.3 845.8" stroke="#94C09D" stroke-width="10"/>
  <path d="M139.3 833.8 C148 842 150 858 134.8 871.3 C124 878 104 878 94.4 875.7" stroke="#A2CAA9" stroke-width="10"/>
  <path d="M112.3 857.8 C104 866 84 872 71.9 868.3 C60 864 48 848 45 833.8" stroke="#8DBB96" stroke-width="10"/>
  <path d="M74.9 768 C62 776 50 792 46 806.9 C44 820 48 832 56 842" stroke="#6FA47C" stroke-width="9"/>
 </g>
 <circle cx="101.1" cy="780" r="10.5" fill="#8DBD97"/>
 <circle cx="140" cy="801.6" r="10.5" fill="#9CC6A4"/>
 <circle cx="63.7" cy="804.6" r="10" fill="#7BAE87"/>
 <circle cx="80.1" cy="851.8" r="10.5" fill="#96C29F"/>
 <circle cx="126.6" cy="850.3" r="10.5" fill="#A6CDAD"/>
 <rect x="39.3" y="807.3" width="127.7" height="24.3" fill="#2A3E20"/>
 <text x="102.5" y="828.6" text-anchor="middle" fill="#fff" style="font-size:26px;font-weight:bold" textLength="119" lengthAdjust="spacingAndGlyphs">TSS-MAP</text>
</svg>

 <div class="h" style="top:237px">Type d'établissement :</div>
 <div class="rb" style="top:263px"><div class="c on"></div><span>Tous</span></div>
 <div class="rb" style="top:306px"><div class="c"></div><span>Auberges collectives : 29</span></div>
 <div class="rb" style="top:349px"><div class="c"></div><span>Centres sportifs : 27</span></div>
 <div class="rb" style="top:392px"><div class="c"></div><span>Centres de vacances : 218</span></div>
 <div class="rb" style="top:435px"><div class="c"></div><span>Villages vacances : 186</span></div>
 <div class="rb" style="top:478px"><div class="c"></div><span>Autres : 70</span></div>
 <div class="h" style="top:538px">Agréments :</div>
 <div class="rb" style="top:564px"><div class="c on"></div><span>Tous</span></div>
 <div class="rb" style="top:607px"><div class="c"></div><span>Agréé(es) par l'Éducation Nationale</span></div>
 <div class="rb" style="top:650px"><div class="c"></div><span>Agréé(es) Jeunesse et Sport</span></div>
 <div class="rb" style="top:693px"><div class="c"></div><span>Agréé(es) accueil Maternelles</span></div>
</div>
<div class="pan" style="left:1552px;top:115px;width:348px;height:44px;background:#23503F;font-size:14.2px;line-height:42px">Nombre d'établissements visibles : 530</div>
<div class="pan" style="left:1652px;top:178px;width:255px;height:44px;background:#434F5B;font-size:14.7px;line-height:44px">Parc TSS</div>
<div class="pan" style="left:1661px;top:230px;width:238px;height:41px;background:#6A7585;font-size:13.6px;line-height:43px">Auvergne-Rhône-Alpes</div>
<div class="pan" style="left:1661px;top:281px;width:238px;height:42px;background:#6A7585;font-size:13.7px;line-height:41px">Massif Alpin</div>
<div id="legend">
 <svg style="position:absolute;left:25.2px;top:20.5px" width="42.5" height="42.5" viewBox="0 0 44 44"><use href="#iA"/></svg><svg style="position:absolute;left:25.0px;top:69.3px" width="42" height="42" viewBox="0 0 44 44"><use href="#iS"/></svg><svg style="position:absolute;left:24.5px;top:118.4px" width="43" height="43" viewBox="0 0 44 44"><use href="#iC"/></svg><svg style="position:absolute;left:21.2px;top:167.4px" width="46.5" height="46.5" viewBox="0 0 44 44"><use href="#iV"/></svg><svg style="position:absolute;left:24.0px;top:221.4px" width="44" height="44" viewBox="0 0 44 44"><use href="#iO"/></svg>
 <div class="li" style="top:32.5px">Auberges collectives</div>
 <div class="li" style="top:80.5px">Centres sportifs</div>
 <div class="li" style="top:130.5px">Centres de vacances</div>
 <div class="li" style="top:182.5px">Villages vacances</div>
 <div class="li" style="top:233.5px">Autres</div>
</div>
</body></html>
